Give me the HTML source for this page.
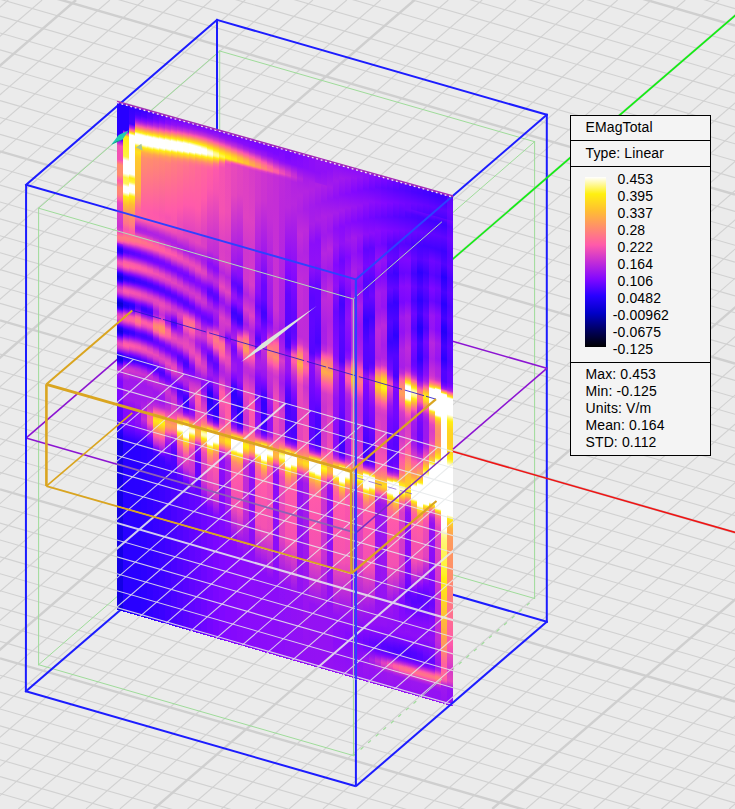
<!DOCTYPE html>
<html><head><meta charset="utf-8"><title>EMagTotal</title>
<style>
html,body{margin:0;padding:0;background:#ebebeb;}
svg{display:block}
text{font-family:"Liberation Sans",Arial,sans-serif;font-size:14px;fill:#000;letter-spacing:0.12px}
</style></head><body>
<svg width="735" height="809" viewBox="0 0 735 809">
<rect width="735" height="809" fill="#ebebeb"/>

<g id="grid" fill="none">
<line x1="0.0" y1="-203.6" x2="735.0" y2="8.6" stroke="#d1d1d1" stroke-width="1.1" />
<line x1="0.0" y1="-186.7" x2="735.0" y2="25.5" stroke="#cfcfcf" stroke-width="2.4" />
<line x1="0.0" y1="-169.8" x2="735.0" y2="42.4" stroke="#d1d1d1" stroke-width="1.1" />
<line x1="0.0" y1="-152.9" x2="735.0" y2="59.3" stroke="#d1d1d1" stroke-width="1.1" />
<line x1="0.0" y1="-136.0" x2="735.0" y2="76.2" stroke="#d1d1d1" stroke-width="1.1" />
<line x1="0.0" y1="-119.1" x2="735.0" y2="93.1" stroke="#d1d1d1" stroke-width="1.1" />
<line x1="0.0" y1="-102.2" x2="735.0" y2="110.0" stroke="#d1d1d1" stroke-width="1.1" />
<line x1="0.0" y1="-85.3" x2="735.0" y2="126.9" stroke="#d1d1d1" stroke-width="1.1" />
<line x1="0.0" y1="-68.4" x2="735.0" y2="143.8" stroke="#d1d1d1" stroke-width="1.1" />
<line x1="0.0" y1="-51.5" x2="735.0" y2="160.7" stroke="#d1d1d1" stroke-width="1.1" />
<line x1="0.0" y1="-34.6" x2="735.0" y2="177.6" stroke="#d1d1d1" stroke-width="1.1" />
<line x1="0.0" y1="-17.7" x2="735.0" y2="194.5" stroke="#cfcfcf" stroke-width="2.4" />
<line x1="0.0" y1="-0.8" x2="735.0" y2="211.4" stroke="#d1d1d1" stroke-width="1.1" />
<line x1="0.0" y1="16.1" x2="735.0" y2="228.3" stroke="#d1d1d1" stroke-width="1.1" />
<line x1="0.0" y1="33.0" x2="735.0" y2="245.2" stroke="#d1d1d1" stroke-width="1.1" />
<line x1="0.0" y1="49.9" x2="735.0" y2="262.1" stroke="#d1d1d1" stroke-width="1.1" />
<line x1="0.0" y1="66.8" x2="735.0" y2="279.0" stroke="#d1d1d1" stroke-width="1.1" />
<line x1="0.0" y1="83.7" x2="735.0" y2="295.9" stroke="#d1d1d1" stroke-width="1.1" />
<line x1="0.0" y1="100.6" x2="735.0" y2="312.8" stroke="#d1d1d1" stroke-width="1.1" />
<line x1="0.0" y1="117.5" x2="735.0" y2="329.7" stroke="#d1d1d1" stroke-width="1.1" />
<line x1="0.0" y1="134.4" x2="735.0" y2="346.6" stroke="#d1d1d1" stroke-width="1.1" />
<line x1="0.0" y1="151.3" x2="735.0" y2="363.5" stroke="#cfcfcf" stroke-width="2.4" />
<line x1="0.0" y1="168.2" x2="735.0" y2="380.4" stroke="#d1d1d1" stroke-width="1.1" />
<line x1="0.0" y1="185.1" x2="735.0" y2="397.3" stroke="#d1d1d1" stroke-width="1.1" />
<line x1="0.0" y1="202.0" x2="735.0" y2="414.2" stroke="#d1d1d1" stroke-width="1.1" />
<line x1="0.0" y1="218.9" x2="735.0" y2="431.1" stroke="#d1d1d1" stroke-width="1.1" />
<line x1="0.0" y1="235.8" x2="735.0" y2="448.0" stroke="#d1d1d1" stroke-width="1.1" />
<line x1="0.0" y1="252.7" x2="735.0" y2="464.9" stroke="#d1d1d1" stroke-width="1.1" />
<line x1="0.0" y1="269.6" x2="735.0" y2="481.8" stroke="#d1d1d1" stroke-width="1.1" />
<line x1="0.0" y1="286.5" x2="735.0" y2="498.7" stroke="#d1d1d1" stroke-width="1.1" />
<line x1="0.0" y1="303.4" x2="735.0" y2="515.6" stroke="#d1d1d1" stroke-width="1.1" />
<line x1="0.0" y1="320.3" x2="735.0" y2="532.5" stroke="#cfcfcf" stroke-width="2.4" />
<line x1="0.0" y1="337.2" x2="735.0" y2="549.4" stroke="#d1d1d1" stroke-width="1.1" />
<line x1="0.0" y1="354.1" x2="735.0" y2="566.3" stroke="#d1d1d1" stroke-width="1.1" />
<line x1="0.0" y1="371.0" x2="735.0" y2="583.2" stroke="#d1d1d1" stroke-width="1.1" />
<line x1="0.0" y1="387.9" x2="735.0" y2="600.1" stroke="#d1d1d1" stroke-width="1.1" />
<line x1="0.0" y1="404.8" x2="735.0" y2="617.0" stroke="#d1d1d1" stroke-width="1.1" />
<line x1="0.0" y1="421.7" x2="735.0" y2="633.9" stroke="#d1d1d1" stroke-width="1.1" />
<line x1="0.0" y1="438.6" x2="735.0" y2="650.8" stroke="#d1d1d1" stroke-width="1.1" />
<line x1="0.0" y1="455.5" x2="735.0" y2="667.7" stroke="#d1d1d1" stroke-width="1.1" />
<line x1="0.0" y1="472.4" x2="735.0" y2="684.6" stroke="#d1d1d1" stroke-width="1.1" />
<line x1="0.0" y1="489.3" x2="735.0" y2="701.5" stroke="#cfcfcf" stroke-width="2.4" />
<line x1="0.0" y1="506.2" x2="735.0" y2="718.4" stroke="#d1d1d1" stroke-width="1.1" />
<line x1="0.0" y1="523.1" x2="735.0" y2="735.3" stroke="#d1d1d1" stroke-width="1.1" />
<line x1="0.0" y1="540.0" x2="735.0" y2="752.2" stroke="#d1d1d1" stroke-width="1.1" />
<line x1="0.0" y1="556.9" x2="735.0" y2="769.1" stroke="#d1d1d1" stroke-width="1.1" />
<line x1="0.0" y1="573.8" x2="735.0" y2="786.0" stroke="#d1d1d1" stroke-width="1.1" />
<line x1="0.0" y1="590.7" x2="735.0" y2="802.9" stroke="#d1d1d1" stroke-width="1.1" />
<line x1="0.0" y1="607.6" x2="735.0" y2="819.8" stroke="#d1d1d1" stroke-width="1.1" />
<line x1="0.0" y1="624.5" x2="735.0" y2="836.7" stroke="#d1d1d1" stroke-width="1.1" />
<line x1="0.0" y1="641.4" x2="735.0" y2="853.6" stroke="#d1d1d1" stroke-width="1.1" />
<line x1="0.0" y1="658.3" x2="735.0" y2="870.5" stroke="#cfcfcf" stroke-width="2.4" />
<line x1="0.0" y1="675.2" x2="735.0" y2="887.4" stroke="#d1d1d1" stroke-width="1.1" />
<line x1="0.0" y1="692.1" x2="735.0" y2="904.3" stroke="#d1d1d1" stroke-width="1.1" />
<line x1="0.0" y1="709.0" x2="735.0" y2="921.2" stroke="#d1d1d1" stroke-width="1.1" />
<line x1="0.0" y1="725.9" x2="735.0" y2="938.1" stroke="#d1d1d1" stroke-width="1.1" />
<line x1="0.0" y1="742.8" x2="735.0" y2="955.0" stroke="#d1d1d1" stroke-width="1.1" />
<line x1="0.0" y1="759.7" x2="735.0" y2="971.9" stroke="#d1d1d1" stroke-width="1.1" />
<line x1="0.0" y1="776.6" x2="735.0" y2="988.8" stroke="#d1d1d1" stroke-width="1.1" />
<line x1="0.0" y1="793.5" x2="735.0" y2="1005.7" stroke="#d1d1d1" stroke-width="1.1" />
<line x1="0.0" y1="810.4" x2="735.0" y2="1022.6" stroke="#d1d1d1" stroke-width="1.1" />
<line x1="8.3" y1="0.0" x2="-929.5" y2="809.0" stroke="#d1d1d1" stroke-width="1.1" />
<line x1="42.1" y1="0.0" x2="-895.6" y2="809.0" stroke="#d1d1d1" stroke-width="1.1" />
<line x1="76.0" y1="0.0" x2="-861.8" y2="809.0" stroke="#cfcfcf" stroke-width="2.4" />
<line x1="109.9" y1="0.0" x2="-827.9" y2="809.0" stroke="#d1d1d1" stroke-width="1.1" />
<line x1="143.7" y1="0.0" x2="-794.1" y2="809.0" stroke="#d1d1d1" stroke-width="1.1" />
<line x1="177.5" y1="0.0" x2="-760.2" y2="809.0" stroke="#d1d1d1" stroke-width="1.1" />
<line x1="211.4" y1="0.0" x2="-726.4" y2="809.0" stroke="#d1d1d1" stroke-width="1.1" />
<line x1="245.2" y1="0.0" x2="-692.5" y2="809.0" stroke="#d1d1d1" stroke-width="1.1" />
<line x1="279.1" y1="0.0" x2="-658.7" y2="809.0" stroke="#d1d1d1" stroke-width="1.1" />
<line x1="312.9" y1="0.0" x2="-624.8" y2="809.0" stroke="#d1d1d1" stroke-width="1.1" />
<line x1="346.8" y1="0.0" x2="-591.0" y2="809.0" stroke="#d1d1d1" stroke-width="1.1" />
<line x1="380.6" y1="0.0" x2="-557.1" y2="809.0" stroke="#d1d1d1" stroke-width="1.1" />
<line x1="414.5" y1="0.0" x2="-523.3" y2="809.0" stroke="#cfcfcf" stroke-width="2.4" />
<line x1="448.3" y1="0.0" x2="-489.4" y2="809.0" stroke="#d1d1d1" stroke-width="1.1" />
<line x1="482.2" y1="0.0" x2="-455.6" y2="809.0" stroke="#d1d1d1" stroke-width="1.1" />
<line x1="516.0" y1="0.0" x2="-421.7" y2="809.0" stroke="#d1d1d1" stroke-width="1.1" />
<line x1="549.9" y1="0.0" x2="-387.9" y2="809.0" stroke="#d1d1d1" stroke-width="1.1" />
<line x1="583.8" y1="0.0" x2="-354.0" y2="809.0" stroke="#d1d1d1" stroke-width="1.1" />
<line x1="617.6" y1="0.0" x2="-320.2" y2="809.0" stroke="#d1d1d1" stroke-width="1.1" />
<line x1="651.5" y1="0.0" x2="-286.3" y2="809.0" stroke="#d1d1d1" stroke-width="1.1" />
<line x1="685.3" y1="0.0" x2="-252.5" y2="809.0" stroke="#d1d1d1" stroke-width="1.1" />
<line x1="719.1" y1="0.0" x2="-218.6" y2="809.0" stroke="#d1d1d1" stroke-width="1.1" />
<line x1="753.0" y1="0.0" x2="-184.8" y2="809.0" stroke="#cfcfcf" stroke-width="2.4" />
<line x1="786.9" y1="0.0" x2="-150.9" y2="809.0" stroke="#d1d1d1" stroke-width="1.1" />
<line x1="820.7" y1="0.0" x2="-117.1" y2="809.0" stroke="#d1d1d1" stroke-width="1.1" />
<line x1="854.5" y1="0.0" x2="-83.2" y2="809.0" stroke="#d1d1d1" stroke-width="1.1" />
<line x1="888.4" y1="0.0" x2="-49.4" y2="809.0" stroke="#d1d1d1" stroke-width="1.1" />
<line x1="922.2" y1="0.0" x2="-15.5" y2="809.0" stroke="#d1d1d1" stroke-width="1.1" />
<line x1="956.1" y1="0.0" x2="18.3" y2="809.0" stroke="#d1d1d1" stroke-width="1.1" />
<line x1="990.0" y1="0.0" x2="52.2" y2="809.0" stroke="#d1d1d1" stroke-width="1.1" />
<line x1="1023.8" y1="0.0" x2="86.0" y2="809.0" stroke="#d1d1d1" stroke-width="1.1" />
<line x1="1057.7" y1="0.0" x2="119.9" y2="809.0" stroke="#d1d1d1" stroke-width="1.1" />
<line x1="1091.5" y1="0.0" x2="153.7" y2="809.0" stroke="#cfcfcf" stroke-width="2.4" />
<line x1="1125.3" y1="0.0" x2="187.6" y2="809.0" stroke="#d1d1d1" stroke-width="1.1" />
<line x1="1159.2" y1="0.0" x2="221.4" y2="809.0" stroke="#d1d1d1" stroke-width="1.1" />
<line x1="1193.0" y1="0.0" x2="255.3" y2="809.0" stroke="#d1d1d1" stroke-width="1.1" />
<line x1="1226.9" y1="0.0" x2="289.1" y2="809.0" stroke="#d1d1d1" stroke-width="1.1" />
<line x1="1260.8" y1="0.0" x2="323.0" y2="809.0" stroke="#d1d1d1" stroke-width="1.1" />
<line x1="1294.6" y1="0.0" x2="356.8" y2="809.0" stroke="#d1d1d1" stroke-width="1.1" />
<line x1="1328.5" y1="0.0" x2="390.7" y2="809.0" stroke="#d1d1d1" stroke-width="1.1" />
<line x1="1362.3" y1="0.0" x2="424.5" y2="809.0" stroke="#d1d1d1" stroke-width="1.1" />
<line x1="1396.2" y1="0.0" x2="458.4" y2="809.0" stroke="#d1d1d1" stroke-width="1.1" />
<line x1="1430.0" y1="0.0" x2="492.2" y2="809.0" stroke="#cfcfcf" stroke-width="2.4" />
<line x1="1463.8" y1="0.0" x2="526.1" y2="809.0" stroke="#d1d1d1" stroke-width="1.1" />
<line x1="1497.7" y1="0.0" x2="559.9" y2="809.0" stroke="#d1d1d1" stroke-width="1.1" />
<line x1="1531.6" y1="0.0" x2="593.8" y2="809.0" stroke="#d1d1d1" stroke-width="1.1" />
<line x1="1565.4" y1="0.0" x2="627.6" y2="809.0" stroke="#d1d1d1" stroke-width="1.1" />
<line x1="1599.2" y1="0.0" x2="661.5" y2="809.0" stroke="#d1d1d1" stroke-width="1.1" />
<line x1="1633.1" y1="0.0" x2="695.3" y2="809.0" stroke="#d1d1d1" stroke-width="1.1" />
<line x1="1667.0" y1="0.0" x2="729.2" y2="809.0" stroke="#d1d1d1" stroke-width="1.1" />
</g>
<g fill="none" stroke-linecap="square">
<line x1="219.7" y1="51.0" x2="534.6" y2="141.7" stroke="#9fdc9a" stroke-width="1" />
<line x1="534.6" y1="141.7" x2="534.6" y2="598.5" stroke="#9fdc9a" stroke-width="1" />
<line x1="219.7" y1="51.0" x2="219.7" y2="507.5" stroke="#9fdc9a" stroke-width="1" />
<line x1="219.7" y1="507.5" x2="534.6" y2="598.5" stroke="#9fdc9a" stroke-width="1" />
<line x1="38.6" y1="208.2" x2="219.7" y2="51.0" stroke="#9fdc9a" stroke-width="1" />
<line x1="353.3" y1="299.0" x2="534.6" y2="141.7" stroke="#9fdc9a" stroke-width="1" />
<line x1="38.6" y1="664.7" x2="219.7" y2="507.5" stroke="#9fdc9a" stroke-width="1" />
<line x1="38.6" y1="208.2" x2="38.6" y2="664.7" stroke="#9fdc9a" stroke-width="1" />
<line x1="38.6" y1="664.7" x2="353.5" y2="755.6" stroke="#9fdc9a" stroke-width="1" />
<line x1="353.5" y1="755.6" x2="534.6" y2="598.5" stroke="#9fdc9a" stroke-width="1.2" stroke-dasharray="2.5 7.5"/>
<line x1="217.0" y1="19.9" x2="546.8" y2="114.8" stroke="#1c1cff" stroke-width="2" />
<line x1="217.0" y1="19.9" x2="217.0" y2="540.0" stroke="#1c1cff" stroke-width="2" />
<line x1="546.8" y1="114.8" x2="546.8" y2="621.7" stroke="#1c1cff" stroke-width="2" />
<line x1="217.0" y1="526.8" x2="546.8" y2="621.7" stroke="#1c1cff" stroke-width="2" />
<line x1="26.1" y1="184.8" x2="217.0" y2="19.9" stroke="#1c1cff" stroke-width="2" />
<line x1="25.9" y1="691.3" x2="217.0" y2="526.8" stroke="#1c1cff" stroke-width="2" />
<line x1="546.8" y1="368.3" x2="217.0" y2="273.4" stroke="#8c14d2" stroke-width="1.6" />
<line x1="217.0" y1="273.4" x2="26.0" y2="438.1" stroke="#8c14d2" stroke-width="1.6" />
<line x1="735.0" y1="15.6" x2="284.2" y2="404.5" stroke="#12ee12" stroke-width="1.6" />
</g>
<defs><linearGradient id="c0" x1="0" y1="0" x2="0" y2="1"><stop offset="0.0000" stop-color="#2800ff"/><stop offset="0.0709" stop-color="#2800ff"/><stop offset="0.0749" stop-color="#8208ff"/><stop offset="0.0768" stop-color="#a21aeb"/><stop offset="0.0847" stop-color="#f351b3"/><stop offset="0.1123" stop-color="#f351b3"/><stop offset="0.1143" stop-color="#ff5ca8"/><stop offset="0.1221" stop-color="#ff8c6e"/><stop offset="0.1418" stop-color="#ff8c6e"/><stop offset="0.1537" stop-color="#ff5aaa"/><stop offset="0.1674" stop-color="#ff8c6e"/><stop offset="0.1812" stop-color="#ff827a"/><stop offset="0.1911" stop-color="#ff5da7"/><stop offset="0.1970" stop-color="#e748bc"/><stop offset="0.2443" stop-color="#c932d2"/><stop offset="0.2522" stop-color="#da3ec6"/><stop offset="0.2581" stop-color="#ff5ca7"/><stop offset="0.2640" stop-color="#ff7887"/><stop offset="0.2679" stop-color="#ff7688"/><stop offset="0.2719" stop-color="#ff60a2"/><stop offset="0.2758" stop-color="#db3fc5"/><stop offset="0.2778" stop-color="#a21aeb"/><stop offset="0.2797" stop-color="#880bfb"/><stop offset="0.2837" stop-color="#4b03ff"/><stop offset="0.2876" stop-color="#2600fc"/><stop offset="0.2916" stop-color="#2100f6"/><stop offset="0.2955" stop-color="#2f01ff"/><stop offset="0.3014" stop-color="#7e08ff"/><stop offset="0.3093" stop-color="#d83cc8"/><stop offset="0.3132" stop-color="#f150b4"/><stop offset="0.3172" stop-color="#f754b0"/><stop offset="0.3231" stop-color="#da3ec6"/><stop offset="0.3310" stop-color="#7a07ff"/><stop offset="0.3349" stop-color="#3701ff"/><stop offset="0.3369" stop-color="#2300f8"/><stop offset="0.3428" stop-color="#1000de"/><stop offset="0.3467" stop-color="#1500e5"/><stop offset="0.3507" stop-color="#2700fd"/><stop offset="0.3566" stop-color="#8308fe"/><stop offset="0.3625" stop-color="#c52ed6"/><stop offset="0.3684" stop-color="#e345bf"/><stop offset="0.3723" stop-color="#dd41c3"/><stop offset="0.3763" stop-color="#c42dd7"/><stop offset="0.3822" stop-color="#7e08ff"/><stop offset="0.3861" stop-color="#3901ff"/><stop offset="0.3881" stop-color="#2200f6"/><stop offset="0.3940" stop-color="#0800d3"/><stop offset="0.3999" stop-color="#0c00d9"/><stop offset="0.4038" stop-color="#2100f5"/><stop offset="0.4058" stop-color="#3902ff"/><stop offset="0.4098" stop-color="#850afd"/><stop offset="0.4157" stop-color="#d037cd"/><stop offset="0.4216" stop-color="#f04fb5"/><stop offset="0.4255" stop-color="#ea4bb9"/><stop offset="0.4295" stop-color="#d138cc"/><stop offset="0.4373" stop-color="#7106ff"/><stop offset="0.4413" stop-color="#3101ff"/><stop offset="0.4432" stop-color="#2100f5"/><stop offset="0.4492" stop-color="#1100df"/><stop offset="0.4531" stop-color="#1700e8"/><stop offset="0.4570" stop-color="#2d00ff"/><stop offset="0.4610" stop-color="#6a06ff"/><stop offset="0.4629" stop-color="#890cfb"/><stop offset="0.4689" stop-color="#cb33d1"/><stop offset="0.4728" stop-color="#e547bd"/><stop offset="0.4767" stop-color="#ec4cb8"/><stop offset="0.4826" stop-color="#d137cd"/><stop offset="0.4905" stop-color="#7607ff"/><stop offset="0.4945" stop-color="#3601ff"/><stop offset="0.4964" stop-color="#2300f8"/><stop offset="0.5023" stop-color="#1100df"/><stop offset="0.5063" stop-color="#1600e7"/><stop offset="0.5102" stop-color="#2700fe"/><stop offset="0.5161" stop-color="#7707ff"/><stop offset="0.5220" stop-color="#a81de8"/><stop offset="0.5280" stop-color="#b626df"/><stop offset="0.5477" stop-color="#7f08ff"/><stop offset="0.5811" stop-color="#8108ff"/><stop offset="0.5969" stop-color="#5f05ff"/><stop offset="0.6225" stop-color="#5904ff"/><stop offset="0.6442" stop-color="#2800ff"/><stop offset="0.6659" stop-color="#1500e4"/><stop offset="1.0007" stop-color="#1400e4"/></linearGradient>
<linearGradient id="c1" x1="0" y1="0" x2="0" y2="1"><stop offset="0.0000" stop-color="#2800ff"/><stop offset="0.0512" stop-color="#2800ff"/><stop offset="0.0532" stop-color="#8208ff"/><stop offset="0.0571" stop-color="#ff5aaa"/><stop offset="0.0611" stop-color="#ffbe32"/><stop offset="0.0630" stop-color="#fff010"/><stop offset="0.1024" stop-color="#fff340"/><stop offset="0.1103" stop-color="#ffffff"/><stop offset="0.1359" stop-color="#ffffff"/><stop offset="0.1438" stop-color="#fff340"/><stop offset="0.1556" stop-color="#fff458"/><stop offset="0.1615" stop-color="#ffffff"/><stop offset="0.1733" stop-color="#ffffff"/><stop offset="0.1812" stop-color="#fff010"/><stop offset="0.1970" stop-color="#ffbe32"/><stop offset="0.2167" stop-color="#ff8c6e"/><stop offset="0.2344" stop-color="#ff738b"/><stop offset="0.2462" stop-color="#f955af"/><stop offset="0.2521" stop-color="#ff5ba9"/><stop offset="0.2620" stop-color="#ff7b83"/><stop offset="0.2659" stop-color="#ff7984"/><stop offset="0.2699" stop-color="#ff679b"/><stop offset="0.2718" stop-color="#fc58ac"/><stop offset="0.2797" stop-color="#9f19ed"/><stop offset="0.2837" stop-color="#7307ff"/><stop offset="0.2876" stop-color="#5404ff"/><stop offset="0.2915" stop-color="#5204ff"/><stop offset="0.2974" stop-color="#8409fe"/><stop offset="0.3093" stop-color="#fa56ae"/><stop offset="0.3152" stop-color="#ff6899"/><stop offset="0.3191" stop-color="#ff60a3"/><stop offset="0.3211" stop-color="#fa56ae"/><stop offset="0.3250" stop-color="#d73cc8"/><stop offset="0.3329" stop-color="#7607ff"/><stop offset="0.3388" stop-color="#3301ff"/><stop offset="0.3427" stop-color="#2800ff"/><stop offset="0.3467" stop-color="#3c02ff"/><stop offset="0.3526" stop-color="#850afd"/><stop offset="0.3605" stop-color="#da3ec6"/><stop offset="0.3644" stop-color="#f452b2"/><stop offset="0.3684" stop-color="#fc58ac"/><stop offset="0.3723" stop-color="#ef4eb6"/><stop offset="0.3762" stop-color="#d138cc"/><stop offset="0.3841" stop-color="#7207ff"/><stop offset="0.3900" stop-color="#2700fe"/><stop offset="0.3959" stop-color="#1f00f2"/><stop offset="0.3999" stop-color="#2c00ff"/><stop offset="0.4058" stop-color="#8208ff"/><stop offset="0.4117" stop-color="#d037cd"/><stop offset="0.4156" stop-color="#f653b1"/><stop offset="0.4196" stop-color="#ff62a1"/><stop offset="0.4235" stop-color="#ff5ea5"/><stop offset="0.4255" stop-color="#fa56ae"/><stop offset="0.4294" stop-color="#db3fc5"/><stop offset="0.4373" stop-color="#8108ff"/><stop offset="0.4432" stop-color="#3a02ff"/><stop offset="0.4472" stop-color="#2a00ff"/><stop offset="0.4511" stop-color="#3801ff"/><stop offset="0.4570" stop-color="#7d08ff"/><stop offset="0.4668" stop-color="#e849bb"/><stop offset="0.4708" stop-color="#ff5aaa"/><stop offset="0.4747" stop-color="#ff5ea6"/><stop offset="0.4767" stop-color="#fe59ab"/><stop offset="0.4806" stop-color="#e647bd"/><stop offset="0.4905" stop-color="#7907ff"/><stop offset="0.4964" stop-color="#3501ff"/><stop offset="0.5003" stop-color="#2a00ff"/><stop offset="0.5043" stop-color="#3e02ff"/><stop offset="0.5102" stop-color="#8308ff"/><stop offset="0.5161" stop-color="#b726de"/><stop offset="0.5200" stop-color="#cc34d0"/><stop offset="0.5240" stop-color="#d339cb"/><stop offset="0.5437" stop-color="#a019ed"/><stop offset="0.5791" stop-color="#a31beb"/><stop offset="0.5969" stop-color="#890cfa"/><stop offset="0.6244" stop-color="#8308ff"/><stop offset="0.6560" stop-color="#3701ff"/><stop offset="0.6678" stop-color="#2800ff"/><stop offset="1.0007" stop-color="#2800ff"/></linearGradient>
<linearGradient id="c2" x1="0" y1="0" x2="0" y2="1"><stop offset="0.0000" stop-color="#3101ff"/><stop offset="0.0355" stop-color="#4302ff"/><stop offset="0.0394" stop-color="#8c0ef9"/><stop offset="0.0433" stop-color="#c32dd7"/><stop offset="0.0453" stop-color="#eb4bb9"/><stop offset="0.0473" stop-color="#ff6b96"/><stop offset="0.0492" stop-color="#ff8c6e"/><stop offset="0.0512" stop-color="#ffbe32"/><stop offset="0.0532" stop-color="#fff010"/><stop offset="0.0571" stop-color="#ffffff"/><stop offset="0.1339" stop-color="#ffffff"/><stop offset="0.1418" stop-color="#fff010"/><stop offset="0.1497" stop-color="#fff340"/><stop offset="0.1556" stop-color="#ffffff"/><stop offset="0.1694" stop-color="#ffffff"/><stop offset="0.1773" stop-color="#fff010"/><stop offset="0.1930" stop-color="#ffbe32"/><stop offset="0.2127" stop-color="#ff9662"/><stop offset="0.2344" stop-color="#ff7c82"/><stop offset="0.2462" stop-color="#ff5da6"/><stop offset="0.2521" stop-color="#ff61a1"/><stop offset="0.2620" stop-color="#ff7a84"/><stop offset="0.2659" stop-color="#ff758a"/><stop offset="0.2698" stop-color="#ff60a3"/><stop offset="0.2718" stop-color="#f452b2"/><stop offset="0.2797" stop-color="#9c17ef"/><stop offset="0.2836" stop-color="#7407ff"/><stop offset="0.2876" stop-color="#5a04ff"/><stop offset="0.2915" stop-color="#5d05ff"/><stop offset="0.2974" stop-color="#8d0ef8"/><stop offset="0.3092" stop-color="#fa56ae"/><stop offset="0.3151" stop-color="#ff649f"/><stop offset="0.3191" stop-color="#fe59ab"/><stop offset="0.3250" stop-color="#ce35cf"/><stop offset="0.3309" stop-color="#8a0dfa"/><stop offset="0.3368" stop-color="#4403ff"/><stop offset="0.3408" stop-color="#3101ff"/><stop offset="0.3427" stop-color="#3201ff"/><stop offset="0.3467" stop-color="#4903ff"/><stop offset="0.3506" stop-color="#7707ff"/><stop offset="0.3605" stop-color="#dc40c4"/><stop offset="0.3644" stop-color="#f250b4"/><stop offset="0.3683" stop-color="#f653b1"/><stop offset="0.3742" stop-color="#da3ec6"/><stop offset="0.3821" stop-color="#890cfb"/><stop offset="0.3880" stop-color="#3f02ff"/><stop offset="0.3900" stop-color="#3001ff"/><stop offset="0.3939" stop-color="#2700fd"/><stop offset="0.3979" stop-color="#3601ff"/><stop offset="0.4038" stop-color="#7f08ff"/><stop offset="0.4136" stop-color="#f150b4"/><stop offset="0.4156" stop-color="#ff5aaa"/><stop offset="0.4195" stop-color="#ff649e"/><stop offset="0.4235" stop-color="#ff5ca7"/><stop offset="0.4294" stop-color="#d53aca"/><stop offset="0.4373" stop-color="#7c07ff"/><stop offset="0.4432" stop-color="#3f02ff"/><stop offset="0.4471" stop-color="#3701ff"/><stop offset="0.4511" stop-color="#4b03ff"/><stop offset="0.4550" stop-color="#7807ff"/><stop offset="0.4648" stop-color="#df42c2"/><stop offset="0.4688" stop-color="#f854b0"/><stop offset="0.4727" stop-color="#ff5aaa"/><stop offset="0.4786" stop-color="#e648bc"/><stop offset="0.4885" stop-color="#8308ff"/><stop offset="0.4944" stop-color="#3f02ff"/><stop offset="0.4983" stop-color="#3201ff"/><stop offset="0.5023" stop-color="#4302ff"/><stop offset="0.5082" stop-color="#8309fe"/><stop offset="0.5141" stop-color="#b626df"/><stop offset="0.5180" stop-color="#ca32d2"/><stop offset="0.5220" stop-color="#d037cd"/><stop offset="0.5397" stop-color="#a11aec"/><stop offset="0.5791" stop-color="#a31beb"/><stop offset="0.5968" stop-color="#890cfa"/><stop offset="0.6244" stop-color="#8308ff"/><stop offset="0.6559" stop-color="#3801ff"/><stop offset="0.6677" stop-color="#2900ff"/><stop offset="1.0006" stop-color="#2900ff"/></linearGradient>
<linearGradient id="c3" x1="0" y1="0" x2="0" y2="1"><stop offset="0.0000" stop-color="#2e01ff"/><stop offset="0.0138" stop-color="#4603ff"/><stop offset="0.0197" stop-color="#6505ff"/><stop offset="0.0256" stop-color="#9513f3"/><stop offset="0.0295" stop-color="#bb29dc"/><stop offset="0.0355" stop-color="#ff5da6"/><stop offset="0.0433" stop-color="#ffbf32"/><stop offset="0.0473" stop-color="#fff011"/><stop offset="0.0512" stop-color="#fffde0"/><stop offset="0.0532" stop-color="#ffffff"/><stop offset="0.0689" stop-color="#ffffff"/><stop offset="0.0709" stop-color="#fffde1"/><stop offset="0.0748" stop-color="#fff233"/><stop offset="0.0768" stop-color="#ffe617"/><stop offset="0.0808" stop-color="#ffcf26"/><stop offset="0.0867" stop-color="#ffe21a"/><stop offset="0.0985" stop-color="#ffcb29"/><stop offset="0.1595" stop-color="#ffb043"/><stop offset="0.1733" stop-color="#ff9e59"/><stop offset="0.1989" stop-color="#ff6a96"/><stop offset="0.2186" stop-color="#ff5ca8"/><stop offset="0.2344" stop-color="#b223e2"/><stop offset="0.2383" stop-color="#a91ee7"/><stop offset="0.2442" stop-color="#b927dd"/><stop offset="0.2541" stop-color="#ff5da7"/><stop offset="0.2600" stop-color="#ff7788"/><stop offset="0.2639" stop-color="#ff7787"/><stop offset="0.2698" stop-color="#ff5ba8"/><stop offset="0.2797" stop-color="#9c17ef"/><stop offset="0.2836" stop-color="#7907ff"/><stop offset="0.2876" stop-color="#6105ff"/><stop offset="0.2915" stop-color="#6405ff"/><stop offset="0.2954" stop-color="#8108ff"/><stop offset="0.3092" stop-color="#f754b0"/><stop offset="0.3132" stop-color="#ff5ea5"/><stop offset="0.3171" stop-color="#ff5ba8"/><stop offset="0.3230" stop-color="#dc40c4"/><stop offset="0.3309" stop-color="#8a0dfa"/><stop offset="0.3368" stop-color="#4a03ff"/><stop offset="0.3427" stop-color="#3a02ff"/><stop offset="0.3466" stop-color="#5104ff"/><stop offset="0.3506" stop-color="#7d08ff"/><stop offset="0.3604" stop-color="#da3fc5"/><stop offset="0.3644" stop-color="#ef4eb6"/><stop offset="0.3683" stop-color="#f251b3"/><stop offset="0.3742" stop-color="#da3ec6"/><stop offset="0.3841" stop-color="#8409fe"/><stop offset="0.3880" stop-color="#6205ff"/><stop offset="0.3919" stop-color="#5504ff"/><stop offset="0.3959" stop-color="#6205ff"/><stop offset="0.3998" stop-color="#850afd"/><stop offset="0.4116" stop-color="#ff5ea6"/><stop offset="0.4175" stop-color="#ff7a83"/><stop offset="0.4215" stop-color="#ff7787"/><stop offset="0.4254" stop-color="#ff659d"/><stop offset="0.4274" stop-color="#fb57ad"/><stop offset="0.4372" stop-color="#8f0ff7"/><stop offset="0.4431" stop-color="#5604ff"/><stop offset="0.4471" stop-color="#4c03ff"/><stop offset="0.4510" stop-color="#5e05ff"/><stop offset="0.4550" stop-color="#850afd"/><stop offset="0.4648" stop-color="#e043c1"/><stop offset="0.4687" stop-color="#f552b2"/><stop offset="0.4727" stop-color="#fa56ae"/><stop offset="0.4786" stop-color="#e043c1"/><stop offset="0.4884" stop-color="#8108ff"/><stop offset="0.4943" stop-color="#4302ff"/><stop offset="0.4983" stop-color="#3a02ff"/><stop offset="0.5022" stop-color="#4d03ff"/><stop offset="0.5062" stop-color="#7507ff"/><stop offset="0.5140" stop-color="#b827de"/><stop offset="0.5219" stop-color="#cd35cf"/><stop offset="0.5396" stop-color="#a119ec"/><stop offset="0.5810" stop-color="#a41cea"/><stop offset="0.5948" stop-color="#9513f3"/><stop offset="0.6204" stop-color="#9010f6"/><stop offset="0.6302" stop-color="#8208ff"/><stop offset="0.6539" stop-color="#3e02ff"/><stop offset="0.6677" stop-color="#2b00ff"/><stop offset="1.0005" stop-color="#2a00ff"/></linearGradient>
<linearGradient id="c4" x1="0" y1="0" x2="0" y2="1"><stop offset="0.0000" stop-color="#3601ff"/><stop offset="0.0138" stop-color="#4e03ff"/><stop offset="0.0217" stop-color="#7d08ff"/><stop offset="0.0256" stop-color="#9b16ef"/><stop offset="0.0295" stop-color="#c22cd8"/><stop offset="0.0354" stop-color="#ff62a0"/><stop offset="0.0433" stop-color="#ffc32f"/><stop offset="0.0453" stop-color="#ffdc1e"/><stop offset="0.0473" stop-color="#fff121"/><stop offset="0.0512" stop-color="#fffeeb"/><stop offset="0.0532" stop-color="#ffffff"/><stop offset="0.0689" stop-color="#ffffff"/><stop offset="0.0709" stop-color="#fffcc9"/><stop offset="0.0748" stop-color="#fff119"/><stop offset="0.0768" stop-color="#ffe01b"/><stop offset="0.0847" stop-color="#ffaa4a"/><stop offset="0.0945" stop-color="#ff9069"/><stop offset="0.1950" stop-color="#ff5da6"/><stop offset="0.2127" stop-color="#ff61a1"/><stop offset="0.2186" stop-color="#ff5ba9"/><stop offset="0.2344" stop-color="#b525e0"/><stop offset="0.2383" stop-color="#ac20e5"/><stop offset="0.2442" stop-color="#b927dd"/><stop offset="0.2540" stop-color="#fd58ac"/><stop offset="0.2600" stop-color="#ff718e"/><stop offset="0.2639" stop-color="#ff728d"/><stop offset="0.2698" stop-color="#ff5aaa"/><stop offset="0.2816" stop-color="#8f0ff7"/><stop offset="0.2875" stop-color="#6806ff"/><stop offset="0.2915" stop-color="#6906ff"/><stop offset="0.2954" stop-color="#8208ff"/><stop offset="0.3072" stop-color="#e446be"/><stop offset="0.3112" stop-color="#f956ae"/><stop offset="0.3151" stop-color="#ff5aaa"/><stop offset="0.3190" stop-color="#f552b2"/><stop offset="0.3230" stop-color="#db3fc5"/><stop offset="0.3328" stop-color="#7a07ff"/><stop offset="0.3387" stop-color="#4603ff"/><stop offset="0.3427" stop-color="#4002ff"/><stop offset="0.3466" stop-color="#5304ff"/><stop offset="0.3505" stop-color="#7b07ff"/><stop offset="0.3604" stop-color="#d43aca"/><stop offset="0.3643" stop-color="#e748bc"/><stop offset="0.3683" stop-color="#ec4bb9"/><stop offset="0.3742" stop-color="#d43aca"/><stop offset="0.3840" stop-color="#7907ff"/><stop offset="0.3899" stop-color="#4202ff"/><stop offset="0.3939" stop-color="#3801ff"/><stop offset="0.3978" stop-color="#4703ff"/><stop offset="0.4037" stop-color="#860afd"/><stop offset="0.4136" stop-color="#ec4cb8"/><stop offset="0.4175" stop-color="#ff5ca8"/><stop offset="0.4214" stop-color="#ff5da7"/><stop offset="0.4274" stop-color="#e546be"/><stop offset="0.4372" stop-color="#870bfc"/><stop offset="0.4431" stop-color="#5004ff"/><stop offset="0.4470" stop-color="#4703ff"/><stop offset="0.4510" stop-color="#5704ff"/><stop offset="0.4549" stop-color="#7c07ff"/><stop offset="0.4648" stop-color="#d63cc8"/><stop offset="0.4687" stop-color="#ed4cb8"/><stop offset="0.4726" stop-color="#f452b2"/><stop offset="0.4786" stop-color="#e144c0"/><stop offset="0.4884" stop-color="#8a0dfa"/><stop offset="0.4943" stop-color="#4f03ff"/><stop offset="0.4983" stop-color="#4102ff"/><stop offset="0.5022" stop-color="#4d03ff"/><stop offset="0.5081" stop-color="#8309fe"/><stop offset="0.5140" stop-color="#b123e2"/><stop offset="0.5219" stop-color="#cb33d1"/><stop offset="0.5376" stop-color="#a51cea"/><stop offset="0.5435" stop-color="#a019ed"/><stop offset="0.5731" stop-color="#a61ce9"/><stop offset="0.6105" stop-color="#c22cd8"/><stop offset="0.6322" stop-color="#8309fe"/><stop offset="0.6519" stop-color="#4503ff"/><stop offset="0.6676" stop-color="#2e01ff"/><stop offset="1.0004" stop-color="#2d00ff"/></linearGradient>
<linearGradient id="c5" x1="0" y1="0" x2="0" y2="1"><stop offset="0.0000" stop-color="#4202ff"/><stop offset="0.0138" stop-color="#5b05ff"/><stop offset="0.0197" stop-color="#7c07ff"/><stop offset="0.0256" stop-color="#a71de8"/><stop offset="0.0335" stop-color="#fb57ad"/><stop offset="0.0414" stop-color="#ffb43e"/><stop offset="0.0453" stop-color="#ffe517"/><stop offset="0.0473" stop-color="#fff449"/><stop offset="0.0492" stop-color="#fffaaf"/><stop offset="0.0512" stop-color="#ffffff"/><stop offset="0.0670" stop-color="#ffffff"/><stop offset="0.0689" stop-color="#fffef4"/><stop offset="0.0729" stop-color="#fff344"/><stop offset="0.0748" stop-color="#ffe815"/><stop offset="0.0847" stop-color="#ffa451"/><stop offset="0.0945" stop-color="#ff8c6e"/><stop offset="0.1969" stop-color="#ff5ba9"/><stop offset="0.2186" stop-color="#fe59ab"/><stop offset="0.2383" stop-color="#ae21e4"/><stop offset="0.2442" stop-color="#b726df"/><stop offset="0.2560" stop-color="#ff5ca8"/><stop offset="0.2619" stop-color="#ff6e92"/><stop offset="0.2658" stop-color="#ff6b96"/><stop offset="0.2698" stop-color="#ff5aaa"/><stop offset="0.2796" stop-color="#a81ee8"/><stop offset="0.2855" stop-color="#7a07ff"/><stop offset="0.2895" stop-color="#6b06ff"/><stop offset="0.2934" stop-color="#7307ff"/><stop offset="0.2974" stop-color="#8c0ef9"/><stop offset="0.3092" stop-color="#e848bc"/><stop offset="0.3131" stop-color="#f754b0"/><stop offset="0.3170" stop-color="#f855af"/><stop offset="0.3230" stop-color="#de41c3"/><stop offset="0.3328" stop-color="#850afd"/><stop offset="0.3387" stop-color="#5004ff"/><stop offset="0.3426" stop-color="#4503ff"/><stop offset="0.3466" stop-color="#5204ff"/><stop offset="0.3525" stop-color="#870bfc"/><stop offset="0.3623" stop-color="#d63bc9"/><stop offset="0.3682" stop-color="#e748bc"/><stop offset="0.3742" stop-color="#d63cc8"/><stop offset="0.3840" stop-color="#870bfc"/><stop offset="0.3899" stop-color="#5004ff"/><stop offset="0.3958" stop-color="#4202ff"/><stop offset="0.3998" stop-color="#5504ff"/><stop offset="0.4037" stop-color="#7e08ff"/><stop offset="0.4135" stop-color="#e244c0"/><stop offset="0.4175" stop-color="#fa56ae"/><stop offset="0.4214" stop-color="#ff5ba9"/><stop offset="0.4254" stop-color="#f553b1"/><stop offset="0.4293" stop-color="#dd40c4"/><stop offset="0.4391" stop-color="#8409fe"/><stop offset="0.4431" stop-color="#5f05ff"/><stop offset="0.4470" stop-color="#4e03ff"/><stop offset="0.4510" stop-color="#5504ff"/><stop offset="0.4569" stop-color="#8409fe"/><stop offset="0.4667" stop-color="#d63bc9"/><stop offset="0.4746" stop-color="#f04eb6"/><stop offset="0.4825" stop-color="#d037cd"/><stop offset="0.4923" stop-color="#7807ff"/><stop offset="0.4962" stop-color="#5504ff"/><stop offset="0.5002" stop-color="#4803ff"/><stop offset="0.5041" stop-color="#5204ff"/><stop offset="0.5100" stop-color="#8309fe"/><stop offset="0.5159" stop-color="#ad21e4"/><stop offset="0.5218" stop-color="#c62fd5"/><stop offset="0.5278" stop-color="#c62fd5"/><stop offset="0.5435" stop-color="#a21aec"/><stop offset="0.5691" stop-color="#a71de8"/><stop offset="0.5868" stop-color="#cd35cf"/><stop offset="0.5986" stop-color="#ff5ba9"/><stop offset="0.6045" stop-color="#ff6a96"/><stop offset="0.6085" stop-color="#ff6a96"/><stop offset="0.6144" stop-color="#ff5ba8"/><stop offset="0.6282" stop-color="#b827de"/><stop offset="0.6420" stop-color="#8208ff"/><stop offset="0.6577" stop-color="#4102ff"/><stop offset="0.6656" stop-color="#3301ff"/><stop offset="1.0004" stop-color="#3201ff"/></linearGradient>
<linearGradient id="c6" x1="0" y1="0" x2="0" y2="1"><stop offset="0.0000" stop-color="#4e03ff"/><stop offset="0.0138" stop-color="#6b06ff"/><stop offset="0.0177" stop-color="#8008ff"/><stop offset="0.0256" stop-color="#b726df"/><stop offset="0.0315" stop-color="#f452b2"/><stop offset="0.0335" stop-color="#ff659c"/><stop offset="0.0414" stop-color="#ffc32f"/><stop offset="0.0453" stop-color="#fff119"/><stop offset="0.0492" stop-color="#fffdde"/><stop offset="0.0512" stop-color="#ffffff"/><stop offset="0.0669" stop-color="#ffffff"/><stop offset="0.0689" stop-color="#fffbbb"/><stop offset="0.0729" stop-color="#ffee11"/><stop offset="0.0827" stop-color="#ffa451"/><stop offset="0.0886" stop-color="#ff9069"/><stop offset="0.0945" stop-color="#ff8873"/><stop offset="0.1969" stop-color="#fd59ab"/><stop offset="0.2166" stop-color="#ff5aaa"/><stop offset="0.2225" stop-color="#f250b4"/><stop offset="0.2343" stop-color="#bc29db"/><stop offset="0.2402" stop-color="#ae21e4"/><stop offset="0.2461" stop-color="#bb28dc"/><stop offset="0.2579" stop-color="#ff5ca8"/><stop offset="0.2639" stop-color="#ff6998"/><stop offset="0.2698" stop-color="#ff5ba9"/><stop offset="0.2816" stop-color="#a119ec"/><stop offset="0.2875" stop-color="#7907ff"/><stop offset="0.2934" stop-color="#7207ff"/><stop offset="0.2973" stop-color="#860afc"/><stop offset="0.3091" stop-color="#dc40c4"/><stop offset="0.3170" stop-color="#f452b2"/><stop offset="0.3249" stop-color="#d53aca"/><stop offset="0.3347" stop-color="#8108ff"/><stop offset="0.3406" stop-color="#5104ff"/><stop offset="0.3446" stop-color="#4b03ff"/><stop offset="0.3485" stop-color="#5a04ff"/><stop offset="0.3525" stop-color="#7b07ff"/><stop offset="0.3623" stop-color="#cc33d1"/><stop offset="0.3682" stop-color="#e647bd"/><stop offset="0.3761" stop-color="#df42c2"/><stop offset="0.3899" stop-color="#a019ec"/><stop offset="0.3958" stop-color="#a11aec"/><stop offset="0.4017" stop-color="#bd2adb"/><stop offset="0.4096" stop-color="#fe59ab"/><stop offset="0.4155" stop-color="#ff7f7e"/><stop offset="0.4214" stop-color="#ff8b6f"/><stop offset="0.4253" stop-color="#ff827a"/><stop offset="0.4312" stop-color="#ff60a3"/><stop offset="0.4430" stop-color="#9110f6"/><stop offset="0.4470" stop-color="#7307ff"/><stop offset="0.4509" stop-color="#6505ff"/><stop offset="0.4549" stop-color="#6e06ff"/><stop offset="0.4588" stop-color="#870bfc"/><stop offset="0.4686" stop-color="#d036ce"/><stop offset="0.4765" stop-color="#ea4aba"/><stop offset="0.4844" stop-color="#d238cc"/><stop offset="0.4942" stop-color="#8509fd"/><stop offset="0.5001" stop-color="#5404ff"/><stop offset="0.5041" stop-color="#4b03ff"/><stop offset="0.5080" stop-color="#5704ff"/><stop offset="0.5139" stop-color="#8409fe"/><stop offset="0.5198" stop-color="#aa1fe7"/><stop offset="0.5257" stop-color="#c12cd8"/><stop offset="0.5316" stop-color="#c22dd7"/><stop offset="0.5494" stop-color="#9f18ed"/><stop offset="0.5671" stop-color="#a51ce9"/><stop offset="0.5769" stop-color="#bf2bda"/><stop offset="0.5868" stop-color="#ff5ca8"/><stop offset="0.5986" stop-color="#ffc32e"/><stop offset="0.6025" stop-color="#ffdd1d"/><stop offset="0.6065" stop-color="#ffe716"/><stop offset="0.6163" stop-color="#ffc32f"/><stop offset="0.6281" stop-color="#ff7e7e"/><stop offset="0.6360" stop-color="#ff5ca7"/><stop offset="0.6518" stop-color="#bb29dc"/><stop offset="0.6616" stop-color="#7207ff"/><stop offset="0.6695" stop-color="#3e02ff"/><stop offset="0.6813" stop-color="#3801ff"/><stop offset="1.0003" stop-color="#3701ff"/></linearGradient>
<linearGradient id="c7" x1="0" y1="0" x2="0" y2="1"><stop offset="0.0000" stop-color="#5b05ff"/><stop offset="0.0118" stop-color="#7307ff"/><stop offset="0.0158" stop-color="#850afd"/><stop offset="0.0236" stop-color="#b726df"/><stop offset="0.0315" stop-color="#ff61a1"/><stop offset="0.0394" stop-color="#ffbc35"/><stop offset="0.0433" stop-color="#ffea14"/><stop offset="0.0453" stop-color="#fff55e"/><stop offset="0.0473" stop-color="#fffbbe"/><stop offset="0.0492" stop-color="#ffffff"/><stop offset="0.0650" stop-color="#ffffff"/><stop offset="0.0669" stop-color="#fffccd"/><stop offset="0.0709" stop-color="#fff016"/><stop offset="0.0807" stop-color="#ffa451"/><stop offset="0.0866" stop-color="#ff8e6b"/><stop offset="0.0925" stop-color="#ff8576"/><stop offset="0.1989" stop-color="#fa56ae"/><stop offset="0.2166" stop-color="#fc58ac"/><stop offset="0.2225" stop-color="#f351b3"/><stop offset="0.2363" stop-color="#ba28dd"/><stop offset="0.2422" stop-color="#ae21e4"/><stop offset="0.2481" stop-color="#bc29db"/><stop offset="0.2599" stop-color="#fe59ab"/><stop offset="0.2658" stop-color="#ff649e"/><stop offset="0.2697" stop-color="#ff5ca7"/><stop offset="0.2737" stop-color="#ec4cb8"/><stop offset="0.2855" stop-color="#8f10f7"/><stop offset="0.2894" stop-color="#7a07ff"/><stop offset="0.2934" stop-color="#7207ff"/><stop offset="0.2993" stop-color="#890cfb"/><stop offset="0.3131" stop-color="#e345bf"/><stop offset="0.3190" stop-color="#ee4db7"/><stop offset="0.3268" stop-color="#d037cd"/><stop offset="0.3367" stop-color="#8108ff"/><stop offset="0.3406" stop-color="#6005ff"/><stop offset="0.3446" stop-color="#5004ff"/><stop offset="0.3485" stop-color="#5404ff"/><stop offset="0.3544" stop-color="#7d08ff"/><stop offset="0.3642" stop-color="#c932d2"/><stop offset="0.3702" stop-color="#e547bd"/><stop offset="0.3761" stop-color="#ea4bb9"/><stop offset="0.3938" stop-color="#c52ed6"/><stop offset="0.4017" stop-color="#d83dc7"/><stop offset="0.4076" stop-color="#fc58ac"/><stop offset="0.4095" stop-color="#ff649e"/><stop offset="0.4174" stop-color="#ff8e6b"/><stop offset="0.4253" stop-color="#ff9266"/><stop offset="0.4292" stop-color="#ff8379"/><stop offset="0.4351" stop-color="#ff5ba9"/><stop offset="0.4469" stop-color="#8d0ef8"/><stop offset="0.4509" stop-color="#7207ff"/><stop offset="0.4548" stop-color="#6806ff"/><stop offset="0.4627" stop-color="#8a0cfa"/><stop offset="0.4725" stop-color="#cc34d0"/><stop offset="0.4804" stop-color="#e345bf"/><stop offset="0.4883" stop-color="#cd34d0"/><stop offset="0.4981" stop-color="#870bfc"/><stop offset="0.5040" stop-color="#5904ff"/><stop offset="0.5080" stop-color="#4c03ff"/><stop offset="0.5139" stop-color="#5b04ff"/><stop offset="0.5198" stop-color="#8409fe"/><stop offset="0.5277" stop-color="#ae21e4"/><stop offset="0.5336" stop-color="#bd29db"/><stop offset="0.5552" stop-color="#9d17ee"/><stop offset="0.5670" stop-color="#9f18ed"/><stop offset="0.5769" stop-color="#bb29dc"/><stop offset="0.5867" stop-color="#ff5da7"/><stop offset="0.5985" stop-color="#ffcb29"/><stop offset="0.6045" stop-color="#ffee11"/><stop offset="0.6084" stop-color="#ffee11"/><stop offset="0.6182" stop-color="#ffc031"/><stop offset="0.6281" stop-color="#ff8477"/><stop offset="0.6379" stop-color="#fe59ab"/><stop offset="0.6556" stop-color="#b726de"/><stop offset="0.6655" stop-color="#8108ff"/><stop offset="0.6734" stop-color="#4e03ff"/><stop offset="0.6812" stop-color="#3d02ff"/><stop offset="1.0002" stop-color="#3c02ff"/></linearGradient>
<linearGradient id="c8" x1="0" y1="0" x2="0" y2="1"><stop offset="0.0000" stop-color="#6606ff"/><stop offset="0.0138" stop-color="#890cfb"/><stop offset="0.0236" stop-color="#c831d3"/><stop offset="0.0295" stop-color="#ff5ea5"/><stop offset="0.0374" stop-color="#ffb63c"/><stop offset="0.0413" stop-color="#ffe418"/><stop offset="0.0433" stop-color="#fff342"/><stop offset="0.0473" stop-color="#fffffa"/><stop offset="0.0630" stop-color="#ffffff"/><stop offset="0.0650" stop-color="#fffdd9"/><stop offset="0.0689" stop-color="#fff11f"/><stop offset="0.0709" stop-color="#ffe01b"/><stop offset="0.0807" stop-color="#ff995f"/><stop offset="0.0925" stop-color="#ff807c"/><stop offset="0.1870" stop-color="#ff5aaa"/><stop offset="0.1988" stop-color="#f754b0"/><stop offset="0.2185" stop-color="#f855af"/><stop offset="0.2244" stop-color="#ee4db7"/><stop offset="0.2382" stop-color="#b827de"/><stop offset="0.2441" stop-color="#ad21e4"/><stop offset="0.2500" stop-color="#bb29dc"/><stop offset="0.2618" stop-color="#f955af"/><stop offset="0.2697" stop-color="#ff5ca8"/><stop offset="0.2756" stop-color="#e748bc"/><stop offset="0.2855" stop-color="#9d17ee"/><stop offset="0.2914" stop-color="#7c07ff"/><stop offset="0.2973" stop-color="#7807ff"/><stop offset="0.3012" stop-color="#890cfb"/><stop offset="0.3130" stop-color="#d43aca"/><stop offset="0.3209" stop-color="#e949bb"/><stop offset="0.3288" stop-color="#ce35cf"/><stop offset="0.3386" stop-color="#850afd"/><stop offset="0.3445" stop-color="#5b04ff"/><stop offset="0.3485" stop-color="#5304ff"/><stop offset="0.3524" stop-color="#5d05ff"/><stop offset="0.3583" stop-color="#880bfb"/><stop offset="0.3682" stop-color="#cc33d1"/><stop offset="0.3741" stop-color="#df42c2"/><stop offset="0.3800" stop-color="#dc40c4"/><stop offset="0.3957" stop-color="#9915f1"/><stop offset="0.4016" stop-color="#9312f4"/><stop offset="0.4075" stop-color="#ab20e5"/><stop offset="0.4193" stop-color="#fe59ab"/><stop offset="0.4272" stop-color="#ff6a97"/><stop offset="0.4331" stop-color="#ff5fa4"/><stop offset="0.4371" stop-color="#ef4eb6"/><stop offset="0.4508" stop-color="#860afc"/><stop offset="0.4568" stop-color="#6c06ff"/><stop offset="0.4607" stop-color="#6f06ff"/><stop offset="0.4646" stop-color="#8308ff"/><stop offset="0.4784" stop-color="#d73cc8"/><stop offset="0.4863" stop-color="#e94aba"/><stop offset="0.4942" stop-color="#d439cb"/><stop offset="0.5060" stop-color="#8b0dfa"/><stop offset="0.5119" stop-color="#6c06ff"/><stop offset="0.5158" stop-color="#6606ff"/><stop offset="0.5217" stop-color="#7a07ff"/><stop offset="0.5335" stop-color="#b525e0"/><stop offset="0.5414" stop-color="#cb33d1"/><stop offset="0.5670" stop-color="#b525e0"/><stop offset="0.5768" stop-color="#c32dd7"/><stop offset="0.5906" stop-color="#ff5da6"/><stop offset="0.6005" stop-color="#ff9563"/><stop offset="0.6064" stop-color="#ffa451"/><stop offset="0.6123" stop-color="#ff9663"/><stop offset="0.6221" stop-color="#ff5aaa"/><stop offset="0.6300" stop-color="#c932d2"/><stop offset="0.6359" stop-color="#ac20e5"/><stop offset="0.6517" stop-color="#8108ff"/><stop offset="0.6871" stop-color="#4302ff"/><stop offset="1.0001" stop-color="#4302ff"/></linearGradient>
<linearGradient id="c9" x1="0" y1="0" x2="0" y2="1"><stop offset="0.0000" stop-color="#6d06ff"/><stop offset="0.0138" stop-color="#9211f5"/><stop offset="0.0217" stop-color="#c62fd5"/><stop offset="0.0276" stop-color="#ff5ba9"/><stop offset="0.0354" stop-color="#ffb142"/><stop offset="0.0394" stop-color="#ffdf1c"/><stop offset="0.0413" stop-color="#fff127"/><stop offset="0.0453" stop-color="#fffde2"/><stop offset="0.0472" stop-color="#ffffff"/><stop offset="0.0610" stop-color="#ffffff"/><stop offset="0.0630" stop-color="#fffde1"/><stop offset="0.0669" stop-color="#fff126"/><stop offset="0.0689" stop-color="#ffe01b"/><stop offset="0.0787" stop-color="#ff9662"/><stop offset="0.0847" stop-color="#ff8378"/><stop offset="0.0906" stop-color="#ff7c81"/><stop offset="0.1811" stop-color="#ff5ba9"/><stop offset="0.2205" stop-color="#f351b3"/><stop offset="0.2264" stop-color="#ea4aba"/><stop offset="0.2402" stop-color="#b726de"/><stop offset="0.2461" stop-color="#ad20e5"/><stop offset="0.2520" stop-color="#b927dd"/><stop offset="0.2638" stop-color="#f251b3"/><stop offset="0.2697" stop-color="#fe59ab"/><stop offset="0.2776" stop-color="#e546be"/><stop offset="0.2933" stop-color="#8008ff"/><stop offset="0.2973" stop-color="#7707ff"/><stop offset="0.3012" stop-color="#7f08ff"/><stop offset="0.3169" stop-color="#d63bc9"/><stop offset="0.3248" stop-color="#e245bf"/><stop offset="0.3327" stop-color="#c42ed6"/><stop offset="0.3425" stop-color="#7e08ff"/><stop offset="0.3484" stop-color="#5a04ff"/><stop offset="0.3524" stop-color="#5704ff"/><stop offset="0.3603" stop-color="#7f08ff"/><stop offset="0.3701" stop-color="#be2ada"/><stop offset="0.3780" stop-color="#d339cb"/><stop offset="0.3858" stop-color="#bc29db"/><stop offset="0.3937" stop-color="#880bfc"/><stop offset="0.3996" stop-color="#5904ff"/><stop offset="0.4036" stop-color="#4d03ff"/><stop offset="0.4075" stop-color="#5804ff"/><stop offset="0.4134" stop-color="#870bfc"/><stop offset="0.4252" stop-color="#d63bc9"/><stop offset="0.4331" stop-color="#ec4cb8"/><stop offset="0.4410" stop-color="#db3fc5"/><stop offset="0.4547" stop-color="#890cfb"/><stop offset="0.4607" stop-color="#7106ff"/><stop offset="0.4646" stop-color="#7107ff"/><stop offset="0.4685" stop-color="#8008ff"/><stop offset="0.4843" stop-color="#d93dc7"/><stop offset="0.4922" stop-color="#ec4cb8"/><stop offset="0.5000" stop-color="#dd40c4"/><stop offset="0.5197" stop-color="#7e08ff"/><stop offset="0.5236" stop-color="#7807ff"/><stop offset="0.5296" stop-color="#8309fe"/><stop offset="0.5492" stop-color="#cb33d1"/><stop offset="0.5729" stop-color="#d43aca"/><stop offset="0.5847" stop-color="#ec4cb8"/><stop offset="0.5906" stop-color="#ff5da6"/><stop offset="0.6004" stop-color="#ff8f6b"/><stop offset="0.6063" stop-color="#ff9d5a"/><stop offset="0.6122" stop-color="#ff8f6b"/><stop offset="0.6201" stop-color="#ff5da7"/><stop offset="0.6280" stop-color="#c12cd8"/><stop offset="0.6398" stop-color="#8208ff"/><stop offset="0.6477" stop-color="#6806ff"/><stop offset="0.6595" stop-color="#5404ff"/><stop offset="0.6870" stop-color="#4b03ff"/><stop offset="1.0001" stop-color="#4a03ff"/></linearGradient>
<linearGradient id="c10" x1="0" y1="0" x2="0" y2="1"><stop offset="0.0000" stop-color="#6f06ff"/><stop offset="0.0118" stop-color="#9010f6"/><stop offset="0.0197" stop-color="#c12cd8"/><stop offset="0.0256" stop-color="#f956ae"/><stop offset="0.0354" stop-color="#ffc130"/><stop offset="0.0394" stop-color="#ffee11"/><stop offset="0.0433" stop-color="#fffbc7"/><stop offset="0.0453" stop-color="#ffffff"/><stop offset="0.0591" stop-color="#ffffff"/><stop offset="0.0610" stop-color="#fffeeb"/><stop offset="0.0650" stop-color="#fff22e"/><stop offset="0.0669" stop-color="#ffe21a"/><stop offset="0.0768" stop-color="#ff9465"/><stop offset="0.0827" stop-color="#ff807d"/><stop offset="0.0886" stop-color="#ff7886"/><stop offset="0.1732" stop-color="#ff5aa9"/><stop offset="0.2047" stop-color="#ec4cb8"/><stop offset="0.2224" stop-color="#ed4cb8"/><stop offset="0.2303" stop-color="#e043c1"/><stop offset="0.2480" stop-color="#aa1fe7"/><stop offset="0.2539" stop-color="#b324e1"/><stop offset="0.2677" stop-color="#ef4eb6"/><stop offset="0.2736" stop-color="#f552b2"/><stop offset="0.2795" stop-color="#e244c0"/><stop offset="0.2933" stop-color="#8c0df9"/><stop offset="0.3012" stop-color="#7607ff"/><stop offset="0.3071" stop-color="#890cfb"/><stop offset="0.3189" stop-color="#ca33d1"/><stop offset="0.3268" stop-color="#dc40c4"/><stop offset="0.3346" stop-color="#c62fd5"/><stop offset="0.3445" stop-color="#870bfc"/><stop offset="0.3504" stop-color="#6105ff"/><stop offset="0.3543" stop-color="#5704ff"/><stop offset="0.3583" stop-color="#5d05ff"/><stop offset="0.3642" stop-color="#8108ff"/><stop offset="0.3740" stop-color="#bf2bd9"/><stop offset="0.3819" stop-color="#db3fc5"/><stop offset="0.3898" stop-color="#d439cb"/><stop offset="0.4035" stop-color="#9915f1"/><stop offset="0.4094" stop-color="#8f0ff7"/><stop offset="0.4173" stop-color="#a11aec"/><stop offset="0.4311" stop-color="#dc40c4"/><stop offset="0.4390" stop-color="#e547bd"/><stop offset="0.4468" stop-color="#cd34d0"/><stop offset="0.4587" stop-color="#8409fe"/><stop offset="0.4646" stop-color="#6005ff"/><stop offset="0.4685" stop-color="#5704ff"/><stop offset="0.4744" stop-color="#6105ff"/><stop offset="0.4803" stop-color="#8308ff"/><stop offset="0.4921" stop-color="#bf2bda"/><stop offset="0.5020" stop-color="#cd35cf"/><stop offset="0.5098" stop-color="#b928dd"/><stop offset="0.5216" stop-color="#7e08ff"/><stop offset="0.5295" stop-color="#5504ff"/><stop offset="0.5354" stop-color="#4b03ff"/><stop offset="0.5433" stop-color="#5904ff"/><stop offset="0.5531" stop-color="#8108ff"/><stop offset="0.5748" stop-color="#c62fd5"/><stop offset="0.5846" stop-color="#ff649e"/><stop offset="0.5925" stop-color="#ffb73b"/><stop offset="0.5964" stop-color="#ffe617"/><stop offset="0.5984" stop-color="#fff448"/><stop offset="0.6004" stop-color="#fff9a3"/><stop offset="0.6023" stop-color="#fffee8"/><stop offset="0.6043" stop-color="#ffffff"/><stop offset="0.6083" stop-color="#ffffff"/><stop offset="0.6102" stop-color="#fffeec"/><stop offset="0.6122" stop-color="#fffab3"/><stop offset="0.6161" stop-color="#fff22b"/><stop offset="0.6181" stop-color="#ffe617"/><stop offset="0.6299" stop-color="#ff906a"/><stop offset="0.6437" stop-color="#f956ae"/><stop offset="0.6555" stop-color="#da3ec6"/><stop offset="0.6752" stop-color="#be2ada"/><stop offset="0.6929" stop-color="#7e08ff"/><stop offset="0.7008" stop-color="#5d05ff"/><stop offset="0.7086" stop-color="#5104ff"/><stop offset="1.0019" stop-color="#5104ff"/></linearGradient>
<linearGradient id="c11" x1="0" y1="0" x2="0" y2="1"><stop offset="0.0000" stop-color="#7207ff"/><stop offset="0.0118" stop-color="#9613f3"/><stop offset="0.0197" stop-color="#cb33d1"/><stop offset="0.0256" stop-color="#ff61a1"/><stop offset="0.0335" stop-color="#ffb839"/><stop offset="0.0374" stop-color="#ffe617"/><stop offset="0.0394" stop-color="#fff347"/><stop offset="0.0433" stop-color="#fffff9"/><stop offset="0.0590" stop-color="#fffffb"/><stop offset="0.0630" stop-color="#fff33d"/><stop offset="0.0650" stop-color="#ffe418"/><stop offset="0.0748" stop-color="#ff9267"/><stop offset="0.0807" stop-color="#ff7c81"/><stop offset="0.0886" stop-color="#ff728d"/><stop offset="0.1634" stop-color="#ff5aaa"/><stop offset="0.2086" stop-color="#e446be"/><stop offset="0.2264" stop-color="#e546be"/><stop offset="0.2519" stop-color="#a51ce9"/><stop offset="0.2578" stop-color="#b122e2"/><stop offset="0.2697" stop-color="#e345bf"/><stop offset="0.2756" stop-color="#ed4cb8"/><stop offset="0.2815" stop-color="#e043c1"/><stop offset="0.2972" stop-color="#860afd"/><stop offset="0.3031" stop-color="#7307ff"/><stop offset="0.3110" stop-color="#870bfc"/><stop offset="0.3248" stop-color="#cc34d0"/><stop offset="0.3307" stop-color="#d53aca"/><stop offset="0.3385" stop-color="#bf2bd9"/><stop offset="0.3484" stop-color="#8409fe"/><stop offset="0.3543" stop-color="#6005ff"/><stop offset="0.3582" stop-color="#5804ff"/><stop offset="0.3622" stop-color="#5e05ff"/><stop offset="0.3681" stop-color="#8308ff"/><stop offset="0.3819" stop-color="#e748bc"/><stop offset="0.3878" stop-color="#ff60a3"/><stop offset="0.3976" stop-color="#ff6b96"/><stop offset="0.4035" stop-color="#ff5da7"/><stop offset="0.4192" stop-color="#d238cc"/><stop offset="0.4370" stop-color="#e849bb"/><stop offset="0.4448" stop-color="#e647bd"/><stop offset="0.4527" stop-color="#ca32d2"/><stop offset="0.4645" stop-color="#8108ff"/><stop offset="0.4704" stop-color="#5a04ff"/><stop offset="0.4763" stop-color="#4903ff"/><stop offset="0.4822" stop-color="#5104ff"/><stop offset="0.4921" stop-color="#8409fe"/><stop offset="0.5019" stop-color="#ad20e5"/><stop offset="0.5078" stop-color="#b927dd"/><stop offset="0.5196" stop-color="#a91ee7"/><stop offset="0.5295" stop-color="#8108ff"/><stop offset="0.5393" stop-color="#4c03ff"/><stop offset="0.5492" stop-color="#3201ff"/><stop offset="0.5551" stop-color="#3301ff"/><stop offset="0.5629" stop-color="#4503ff"/><stop offset="0.5728" stop-color="#7f08ff"/><stop offset="0.5787" stop-color="#b525df"/><stop offset="0.5846" stop-color="#ff649e"/><stop offset="0.5905" stop-color="#ffc62d"/><stop offset="0.5925" stop-color="#ffe915"/><stop offset="0.5944" stop-color="#fff896"/><stop offset="0.5964" stop-color="#ffffff"/><stop offset="0.6200" stop-color="#ffffff"/><stop offset="0.6220" stop-color="#fffdd9"/><stop offset="0.6259" stop-color="#fff22b"/><stop offset="0.6279" stop-color="#ffe617"/><stop offset="0.6338" stop-color="#ffc230"/><stop offset="0.6417" stop-color="#ff9563"/><stop offset="0.6574" stop-color="#fa56ae"/><stop offset="0.6830" stop-color="#c730d4"/><stop offset="0.7027" stop-color="#8309fe"/><stop offset="0.7106" stop-color="#6505ff"/><stop offset="0.7184" stop-color="#5804ff"/><stop offset="1.0019" stop-color="#5804ff"/></linearGradient>
<linearGradient id="c12" x1="0" y1="0" x2="0" y2="1"><stop offset="0.0000" stop-color="#7407ff"/><stop offset="0.0118" stop-color="#9a16f0"/><stop offset="0.0197" stop-color="#d339cb"/><stop offset="0.0236" stop-color="#fb57ad"/><stop offset="0.0335" stop-color="#ffc130"/><stop offset="0.0374" stop-color="#ffed12"/><stop offset="0.0413" stop-color="#fffbb9"/><stop offset="0.0433" stop-color="#ffffff"/><stop offset="0.0551" stop-color="#ffffff"/><stop offset="0.0571" stop-color="#fffffa"/><stop offset="0.0610" stop-color="#fff345"/><stop offset="0.0630" stop-color="#ffe617"/><stop offset="0.0728" stop-color="#ff9169"/><stop offset="0.0787" stop-color="#ff7885"/><stop offset="0.0846" stop-color="#ff6f91"/><stop offset="0.1614" stop-color="#ff5aaa"/><stop offset="0.2106" stop-color="#e345bf"/><stop offset="0.2283" stop-color="#e446be"/><stop offset="0.2362" stop-color="#d93dc7"/><stop offset="0.2539" stop-color="#a81de8"/><stop offset="0.2598" stop-color="#ae21e4"/><stop offset="0.2736" stop-color="#e244c0"/><stop offset="0.2795" stop-color="#ea4aba"/><stop offset="0.2874" stop-color="#d53aca"/><stop offset="0.3031" stop-color="#8208ff"/><stop offset="0.3110" stop-color="#7d08ff"/><stop offset="0.3267" stop-color="#c32dd7"/><stop offset="0.3346" stop-color="#d339cb"/><stop offset="0.3425" stop-color="#c22cd8"/><stop offset="0.3543" stop-color="#8208ff"/><stop offset="0.3602" stop-color="#6605ff"/><stop offset="0.3641" stop-color="#6305ff"/><stop offset="0.3720" stop-color="#870bfc"/><stop offset="0.3858" stop-color="#ef4eb6"/><stop offset="0.3897" stop-color="#ff61a1"/><stop offset="0.3956" stop-color="#ff738c"/><stop offset="0.3995" stop-color="#ff748b"/><stop offset="0.4113" stop-color="#fd59ab"/><stop offset="0.4271" stop-color="#cf36ce"/><stop offset="0.4468" stop-color="#eb4bb9"/><stop offset="0.4527" stop-color="#ea4aba"/><stop offset="0.4605" stop-color="#d53bc9"/><stop offset="0.4763" stop-color="#8c0df9"/><stop offset="0.4842" stop-color="#7507ff"/><stop offset="0.4940" stop-color="#8409fe"/><stop offset="0.5117" stop-color="#c831d3"/><stop offset="0.5235" stop-color="#db3fc5"/><stop offset="0.5353" stop-color="#cc34d0"/><stop offset="0.5590" stop-color="#8d0ef8"/><stop offset="0.5688" stop-color="#880bfb"/><stop offset="0.5747" stop-color="#9714f2"/><stop offset="0.5806" stop-color="#c52ed6"/><stop offset="0.5865" stop-color="#ff639f"/><stop offset="0.5944" stop-color="#ffc42e"/><stop offset="0.5983" stop-color="#fff017"/><stop offset="0.6003" stop-color="#fff66e"/><stop offset="0.6023" stop-color="#fffab0"/><stop offset="0.6042" stop-color="#fffdda"/><stop offset="0.6062" stop-color="#fffee8"/><stop offset="0.6082" stop-color="#fffdda"/><stop offset="0.6101" stop-color="#fffab0"/><stop offset="0.6141" stop-color="#fff22d"/><stop offset="0.6160" stop-color="#ffe517"/><stop offset="0.6200" stop-color="#ffc22f"/><stop offset="0.6278" stop-color="#ff8675"/><stop offset="0.6377" stop-color="#fe5aaa"/><stop offset="0.6416" stop-color="#ef4eb6"/><stop offset="0.6554" stop-color="#d83dc7"/><stop offset="0.6849" stop-color="#ce35cf"/><stop offset="0.7125" stop-color="#8309fe"/><stop offset="0.7282" stop-color="#6005ff"/><stop offset="1.0018" stop-color="#6005ff"/></linearGradient>
<linearGradient id="c13" x1="0" y1="0" x2="0" y2="1"><stop offset="0.0000" stop-color="#7607ff"/><stop offset="0.0098" stop-color="#9412f4"/><stop offset="0.0177" stop-color="#c730d4"/><stop offset="0.0236" stop-color="#ff5ba9"/><stop offset="0.0335" stop-color="#ffc52d"/><stop offset="0.0374" stop-color="#ffef11"/><stop offset="0.0413" stop-color="#fffab7"/><stop offset="0.0433" stop-color="#fffff9"/><stop offset="0.0531" stop-color="#ffffff"/><stop offset="0.0551" stop-color="#fffffc"/><stop offset="0.0590" stop-color="#fff456"/><stop offset="0.0610" stop-color="#ffea14"/><stop offset="0.0669" stop-color="#ffaf44"/><stop offset="0.0728" stop-color="#ff8676"/><stop offset="0.0787" stop-color="#ff718f"/><stop offset="0.0846" stop-color="#ff6998"/><stop offset="0.1653" stop-color="#ff5aaa"/><stop offset="0.2145" stop-color="#e446be"/><stop offset="0.2322" stop-color="#e546be"/><stop offset="0.2578" stop-color="#ad21e4"/><stop offset="0.2637" stop-color="#b324e1"/><stop offset="0.2775" stop-color="#e446be"/><stop offset="0.2834" stop-color="#ec4cb8"/><stop offset="0.2893" stop-color="#e043c1"/><stop offset="0.3050" stop-color="#9312f5"/><stop offset="0.3109" stop-color="#8509fd"/><stop offset="0.3168" stop-color="#8a0dfa"/><stop offset="0.3326" stop-color="#cb33d1"/><stop offset="0.3405" stop-color="#d63bc9"/><stop offset="0.3483" stop-color="#c32dd7"/><stop offset="0.3601" stop-color="#880bfb"/><stop offset="0.3660" stop-color="#7107ff"/><stop offset="0.3700" stop-color="#6f06ff"/><stop offset="0.3759" stop-color="#8208ff"/><stop offset="0.3897" stop-color="#ca32d2"/><stop offset="0.3956" stop-color="#da3fc5"/><stop offset="0.4133" stop-color="#d83dc7"/><stop offset="0.4251" stop-color="#b022e3"/><stop offset="0.4310" stop-color="#a71de8"/><stop offset="0.4369" stop-color="#af21e3"/><stop offset="0.4526" stop-color="#e446be"/><stop offset="0.4605" stop-color="#f150b4"/><stop offset="0.4704" stop-color="#e446be"/><stop offset="0.4900" stop-color="#a41bea"/><stop offset="0.4999" stop-color="#a019ed"/><stop offset="0.5333" stop-color="#fd59ab"/><stop offset="0.5432" stop-color="#ff5ea5"/><stop offset="0.5688" stop-color="#e94aba"/><stop offset="0.5766" stop-color="#ee4eb6"/><stop offset="0.5825" stop-color="#ff5aaa"/><stop offset="0.5884" stop-color="#ff6a97"/><stop offset="0.6022" stop-color="#ffb241"/><stop offset="0.6061" stop-color="#ffb938"/><stop offset="0.6120" stop-color="#ffa84c"/><stop offset="0.6219" stop-color="#ff5da7"/><stop offset="0.6278" stop-color="#cb33d1"/><stop offset="0.6337" stop-color="#a21aec"/><stop offset="0.6435" stop-color="#7e08ff"/><stop offset="0.6534" stop-color="#6e06ff"/><stop offset="0.6691" stop-color="#6605ff"/><stop offset="1.0017" stop-color="#6706ff"/></linearGradient>
<linearGradient id="c14" x1="0" y1="0" x2="0" y2="1"><stop offset="0.0000" stop-color="#7707ff"/><stop offset="0.0098" stop-color="#9613f3"/><stop offset="0.0177" stop-color="#c931d3"/><stop offset="0.0236" stop-color="#ff5ca7"/><stop offset="0.0335" stop-color="#ffc42e"/><stop offset="0.0374" stop-color="#ffed12"/><stop offset="0.0413" stop-color="#fff9a3"/><stop offset="0.0433" stop-color="#fffde1"/><stop offset="0.0453" stop-color="#ffffff"/><stop offset="0.0531" stop-color="#ffffff"/><stop offset="0.0551" stop-color="#fffbc4"/><stop offset="0.0590" stop-color="#fff119"/><stop offset="0.0630" stop-color="#ffc92a"/><stop offset="0.0708" stop-color="#ff8873"/><stop offset="0.0767" stop-color="#ff6f91"/><stop offset="0.0826" stop-color="#ff659d"/><stop offset="0.1417" stop-color="#ff5aaa"/><stop offset="0.2184" stop-color="#da3fc5"/><stop offset="0.2361" stop-color="#db3fc5"/><stop offset="0.2617" stop-color="#a51ce9"/><stop offset="0.2696" stop-color="#af21e3"/><stop offset="0.2834" stop-color="#dc40c4"/><stop offset="0.2893" stop-color="#e043c1"/><stop offset="0.2971" stop-color="#ca32d2"/><stop offset="0.3109" stop-color="#890cfb"/><stop offset="0.3168" stop-color="#7d08ff"/><stop offset="0.3247" stop-color="#8c0ef9"/><stop offset="0.3385" stop-color="#c32dd7"/><stop offset="0.3463" stop-color="#cc34d0"/><stop offset="0.3542" stop-color="#b927dd"/><stop offset="0.3660" stop-color="#8208ff"/><stop offset="0.3739" stop-color="#6806ff"/><stop offset="0.3778" stop-color="#6906ff"/><stop offset="0.3837" stop-color="#7e08ff"/><stop offset="0.3975" stop-color="#b626df"/><stop offset="0.4113" stop-color="#d137cd"/><stop offset="0.4172" stop-color="#c931d3"/><stop offset="0.4290" stop-color="#9814f2"/><stop offset="0.4369" stop-color="#880bfb"/><stop offset="0.4447" stop-color="#9010f6"/><stop offset="0.4624" stop-color="#cd35cf"/><stop offset="0.4723" stop-color="#db3fc5"/><stop offset="0.4821" stop-color="#cd35cf"/><stop offset="0.5038" stop-color="#8e0ff8"/><stop offset="0.5195" stop-color="#9010f6"/><stop offset="0.5451" stop-color="#ce35cf"/><stop offset="0.5746" stop-color="#fa56ae"/><stop offset="0.5864" stop-color="#ff8774"/><stop offset="0.5982" stop-color="#ffeb14"/><stop offset="0.6022" stop-color="#fff88c"/><stop offset="0.6041" stop-color="#fffab4"/><stop offset="0.6061" stop-color="#fffbc2"/><stop offset="0.6081" stop-color="#fffab4"/><stop offset="0.6100" stop-color="#fff88c"/><stop offset="0.6140" stop-color="#ffef11"/><stop offset="0.6199" stop-color="#ffbd33"/><stop offset="0.6277" stop-color="#ff8379"/><stop offset="0.6376" stop-color="#fd59ab"/><stop offset="0.6415" stop-color="#ef4eb6"/><stop offset="0.6553" stop-color="#dc40c4"/><stop offset="0.6966" stop-color="#d339cb"/><stop offset="0.7340" stop-color="#8409fe"/><stop offset="0.7497" stop-color="#6e06ff"/><stop offset="1.0016" stop-color="#6e06ff"/></linearGradient>
<linearGradient id="c15" x1="0" y1="0" x2="0" y2="1"><stop offset="0.0000" stop-color="#7807ff"/><stop offset="0.0098" stop-color="#9412f4"/><stop offset="0.0177" stop-color="#c52fd5"/><stop offset="0.0236" stop-color="#fb57ad"/><stop offset="0.0335" stop-color="#ffba37"/><stop offset="0.0374" stop-color="#ffe11a"/><stop offset="0.0394" stop-color="#fff11a"/><stop offset="0.0433" stop-color="#fff99d"/><stop offset="0.0453" stop-color="#fffcc8"/><stop offset="0.0472" stop-color="#fffde3"/><stop offset="0.0492" stop-color="#fffeec"/><stop offset="0.0512" stop-color="#fffddf"/><stop offset="0.0531" stop-color="#fffbb9"/><stop offset="0.0551" stop-color="#fff77d"/><stop offset="0.0571" stop-color="#fff231"/><stop offset="0.0590" stop-color="#ffe418"/><stop offset="0.0649" stop-color="#ffab49"/><stop offset="0.0708" stop-color="#ff807d"/><stop offset="0.0767" stop-color="#ff6899"/><stop offset="0.0826" stop-color="#ff5fa3"/><stop offset="0.1181" stop-color="#fc58ac"/><stop offset="0.2401" stop-color="#c32dd7"/><stop offset="0.2656" stop-color="#8c0df9"/><stop offset="0.2735" stop-color="#9110f6"/><stop offset="0.2893" stop-color="#c02bd9"/><stop offset="0.2952" stop-color="#c12cd8"/><stop offset="0.3011" stop-color="#b123e2"/><stop offset="0.3109" stop-color="#8409fe"/><stop offset="0.3168" stop-color="#6505ff"/><stop offset="0.3227" stop-color="#5904ff"/><stop offset="0.3286" stop-color="#6405ff"/><stop offset="0.3345" stop-color="#7f08ff"/><stop offset="0.3443" stop-color="#a51ce9"/><stop offset="0.3522" stop-color="#af22e3"/><stop offset="0.3581" stop-color="#a51ce9"/><stop offset="0.3680" stop-color="#8108ff"/><stop offset="0.3778" stop-color="#6405ff"/><stop offset="0.3817" stop-color="#6b06ff"/><stop offset="0.3876" stop-color="#890cfb"/><stop offset="0.4014" stop-color="#ec4cb8"/><stop offset="0.4093" stop-color="#ff5aaa"/><stop offset="0.4211" stop-color="#e446be"/><stop offset="0.4388" stop-color="#8309fe"/><stop offset="0.4486" stop-color="#5d05ff"/><stop offset="0.4565" stop-color="#6205ff"/><stop offset="0.4762" stop-color="#9b16f0"/><stop offset="0.4860" stop-color="#9e18ee"/><stop offset="0.4978" stop-color="#850afd"/><stop offset="0.5195" stop-color="#2c00ff"/><stop offset="0.5352" stop-color="#2300f8"/><stop offset="0.5451" stop-color="#2800ff"/><stop offset="0.5549" stop-color="#3c02ff"/><stop offset="0.5647" stop-color="#5804ff"/><stop offset="0.5706" stop-color="#7507ff"/><stop offset="0.5765" stop-color="#a11aec"/><stop offset="0.5824" stop-color="#e647bd"/><stop offset="0.5844" stop-color="#ff61a2"/><stop offset="0.5903" stop-color="#ffc72c"/><stop offset="0.5923" stop-color="#ffed12"/><stop offset="0.5942" stop-color="#fffab2"/><stop offset="0.5962" stop-color="#ffffff"/><stop offset="0.6198" stop-color="#ffffff"/><stop offset="0.6218" stop-color="#fffffe"/><stop offset="0.6257" stop-color="#fff451"/><stop offset="0.6277" stop-color="#ffee11"/><stop offset="0.6356" stop-color="#ffc030"/><stop offset="0.6454" stop-color="#ff906a"/><stop offset="0.6631" stop-color="#fe59ab"/><stop offset="0.6749" stop-color="#ee4db7"/><stop offset="0.7044" stop-color="#e244c0"/><stop offset="0.7477" stop-color="#8308ff"/><stop offset="0.7595" stop-color="#7507ff"/><stop offset="1.0016" stop-color="#7507ff"/></linearGradient>
<linearGradient id="c16" x1="0" y1="0" x2="0" y2="1"><stop offset="0.0000" stop-color="#7807ff"/><stop offset="0.0118" stop-color="#9c17ef"/><stop offset="0.0197" stop-color="#d037cd"/><stop offset="0.0256" stop-color="#ff62a0"/><stop offset="0.0354" stop-color="#ffc130"/><stop offset="0.0394" stop-color="#ffe418"/><stop offset="0.0413" stop-color="#fff118"/><stop offset="0.0433" stop-color="#fff450"/><stop offset="0.0453" stop-color="#fff779"/><stop offset="0.0472" stop-color="#fff892"/><stop offset="0.0492" stop-color="#fff99b"/><stop offset="0.0512" stop-color="#fff889"/><stop offset="0.0531" stop-color="#fff456"/><stop offset="0.0551" stop-color="#ffee11"/><stop offset="0.0590" stop-color="#ffc42e"/><stop offset="0.0669" stop-color="#ff7985"/><stop offset="0.0728" stop-color="#ff60a3"/><stop offset="0.0787" stop-color="#fd59ab"/><stop offset="0.1220" stop-color="#f553b1"/><stop offset="0.2459" stop-color="#bd2ada"/><stop offset="0.2715" stop-color="#8a0cfa"/><stop offset="0.2774" stop-color="#8d0ef8"/><stop offset="0.2932" stop-color="#b927dd"/><stop offset="0.2991" stop-color="#be2ada"/><stop offset="0.3069" stop-color="#ad21e4"/><stop offset="0.3168" stop-color="#8309fe"/><stop offset="0.3227" stop-color="#6706ff"/><stop offset="0.3286" stop-color="#5b05ff"/><stop offset="0.3345" stop-color="#6405ff"/><stop offset="0.3404" stop-color="#7c07ff"/><stop offset="0.3561" stop-color="#ac20e5"/><stop offset="0.3778" stop-color="#9211f5"/><stop offset="0.3837" stop-color="#9814f2"/><stop offset="0.3915" stop-color="#be2ada"/><stop offset="0.4014" stop-color="#ff5ca7"/><stop offset="0.4073" stop-color="#ff708f"/><stop offset="0.4152" stop-color="#ff7984"/><stop offset="0.4270" stop-color="#ff61a1"/><stop offset="0.4289" stop-color="#fe59ab"/><stop offset="0.4486" stop-color="#8a0dfa"/><stop offset="0.4604" stop-color="#6105ff"/><stop offset="0.4683" stop-color="#6706ff"/><stop offset="0.4880" stop-color="#9b16ef"/><stop offset="0.4978" stop-color="#a41bea"/><stop offset="0.5135" stop-color="#8e0ff8"/><stop offset="0.5352" stop-color="#4a03ff"/><stop offset="0.5470" stop-color="#3401ff"/><stop offset="0.5607" stop-color="#3101ff"/><stop offset="0.5706" stop-color="#4a03ff"/><stop offset="0.5765" stop-color="#7807ff"/><stop offset="0.5824" stop-color="#c12cd8"/><stop offset="0.5863" stop-color="#ff5fa4"/><stop offset="0.5922" stop-color="#ffc42e"/><stop offset="0.5942" stop-color="#ffe617"/><stop offset="0.5962" stop-color="#fff674"/><stop offset="0.5981" stop-color="#fffef3"/><stop offset="0.6001" stop-color="#ffffff"/><stop offset="0.6139" stop-color="#ffffff"/><stop offset="0.6158" stop-color="#fffdd8"/><stop offset="0.6198" stop-color="#fff233"/><stop offset="0.6217" stop-color="#ffe617"/><stop offset="0.6296" stop-color="#ffad47"/><stop offset="0.6395" stop-color="#ff807c"/><stop offset="0.6552" stop-color="#ff5ca8"/><stop offset="0.7103" stop-color="#e647bd"/><stop offset="0.7595" stop-color="#8409fe"/><stop offset="0.7713" stop-color="#7b07ff"/><stop offset="1.0015" stop-color="#7b07ff"/></linearGradient>
<linearGradient id="c17" x1="0" y1="0" x2="0" y2="1"><stop offset="0.0000" stop-color="#7707ff"/><stop offset="0.0118" stop-color="#9614f2"/><stop offset="0.0197" stop-color="#c730d4"/><stop offset="0.0256" stop-color="#fb57ad"/><stop offset="0.0374" stop-color="#ffc42e"/><stop offset="0.0433" stop-color="#ffed12"/><stop offset="0.0472" stop-color="#fff345"/><stop offset="0.0492" stop-color="#fff44d"/><stop offset="0.0512" stop-color="#fff22a"/><stop offset="0.0531" stop-color="#ffe11a"/><stop offset="0.0551" stop-color="#ffc52d"/><stop offset="0.0590" stop-color="#ff8b70"/><stop offset="0.0630" stop-color="#ff659d"/><stop offset="0.0708" stop-color="#f553b1"/><stop offset="0.1574" stop-color="#f452b2"/><stop offset="0.2302" stop-color="#da3ec6"/><stop offset="0.2518" stop-color="#dc40c4"/><stop offset="0.2774" stop-color="#b525e0"/><stop offset="0.3049" stop-color="#e647bd"/><stop offset="0.3128" stop-color="#d93dc7"/><stop offset="0.3286" stop-color="#a019ec"/><stop offset="0.3364" stop-color="#9614f2"/><stop offset="0.3659" stop-color="#da3ec6"/><stop offset="0.4013" stop-color="#c42ed6"/><stop offset="0.4132" stop-color="#ff60a3"/><stop offset="0.4171" stop-color="#ff6f91"/><stop offset="0.4250" stop-color="#ff7589"/><stop offset="0.4407" stop-color="#ff5da6"/><stop offset="0.4604" stop-color="#be2ada"/><stop offset="0.4722" stop-color="#af22e3"/><stop offset="0.4800" stop-color="#b827de"/><stop offset="0.5115" stop-color="#ff5aaa"/><stop offset="0.5253" stop-color="#ff5fa4"/><stop offset="0.5627" stop-color="#e244c0"/><stop offset="0.5725" stop-color="#e647bd"/><stop offset="0.5804" stop-color="#ff5da7"/><stop offset="0.5902" stop-color="#ff7d80"/><stop offset="0.6020" stop-color="#ffc130"/><stop offset="0.6060" stop-color="#ffc92b"/><stop offset="0.6119" stop-color="#ffb73b"/><stop offset="0.6237" stop-color="#fb57ad"/><stop offset="0.6296" stop-color="#c931d3"/><stop offset="0.6374" stop-color="#9f19ed"/><stop offset="0.6473" stop-color="#8c0ef9"/><stop offset="0.7771" stop-color="#8008ff"/><stop offset="1.0014" stop-color="#8008ff"/></linearGradient>
<linearGradient id="c18" x1="0" y1="0" x2="0" y2="1"><stop offset="0.0000" stop-color="#7707ff"/><stop offset="0.0138" stop-color="#9a15f0"/><stop offset="0.0197" stop-color="#bd2adb"/><stop offset="0.0275" stop-color="#ff5da6"/><stop offset="0.0393" stop-color="#ffc72c"/><stop offset="0.0452" stop-color="#ffe915"/><stop offset="0.0492" stop-color="#fff010"/><stop offset="0.0511" stop-color="#ffda1f"/><stop offset="0.0551" stop-color="#ff7787"/><stop offset="0.0570" stop-color="#ff5ba9"/><stop offset="0.0610" stop-color="#ee4db7"/><stop offset="0.1554" stop-color="#ef4eb6"/><stop offset="0.2341" stop-color="#d63bc9"/><stop offset="0.2577" stop-color="#d83dc7"/><stop offset="0.2833" stop-color="#b424e0"/><stop offset="0.3128" stop-color="#e144c0"/><stop offset="0.3423" stop-color="#9714f2"/><stop offset="0.3502" stop-color="#9f18ed"/><stop offset="0.3679" stop-color="#cf36ce"/><stop offset="0.3757" stop-color="#d53aca"/><stop offset="0.3875" stop-color="#c02bd9"/><stop offset="0.4013" stop-color="#7e08ff"/><stop offset="0.4053" stop-color="#8108ff"/><stop offset="0.4171" stop-color="#b726df"/><stop offset="0.4407" stop-color="#e94aba"/><stop offset="0.4525" stop-color="#e547bd"/><stop offset="0.4741" stop-color="#ba28dd"/><stop offset="0.4859" stop-color="#b022e2"/><stop offset="0.4957" stop-color="#b927dd"/><stop offset="0.5331" stop-color="#ff5aaa"/><stop offset="0.5705" stop-color="#ff61a2"/><stop offset="0.5902" stop-color="#ff9168"/><stop offset="0.5980" stop-color="#ffc031"/><stop offset="0.6020" stop-color="#ffda1f"/><stop offset="0.6059" stop-color="#ffe319"/><stop offset="0.6098" stop-color="#ffda1f"/><stop offset="0.6138" stop-color="#ffc130"/><stop offset="0.6256" stop-color="#ff5ea5"/><stop offset="0.6295" stop-color="#e547bd"/><stop offset="0.6394" stop-color="#b827de"/><stop offset="0.6472" stop-color="#ab1fe6"/><stop offset="0.7200" stop-color="#a41cea"/><stop offset="0.7908" stop-color="#8409fe"/><stop offset="1.0013" stop-color="#8409fe"/></linearGradient>
<linearGradient id="c19" x1="0" y1="0" x2="0" y2="1"><stop offset="0.0000" stop-color="#7607ff"/><stop offset="0.0118" stop-color="#8d0ef8"/><stop offset="0.0216" stop-color="#c32dd7"/><stop offset="0.0295" stop-color="#ff649f"/><stop offset="0.0393" stop-color="#ffba37"/><stop offset="0.0452" stop-color="#ffdc1e"/><stop offset="0.0492" stop-color="#ffe319"/><stop offset="0.0511" stop-color="#ffc72c"/><stop offset="0.0551" stop-color="#ff60a2"/><stop offset="0.0570" stop-color="#ef4eb6"/><stop offset="0.0590" stop-color="#e849bb"/><stop offset="0.1180" stop-color="#e446be"/><stop offset="0.2616" stop-color="#9a15f0"/><stop offset="0.2911" stop-color="#6205ff"/><stop offset="0.2970" stop-color="#6806ff"/><stop offset="0.3128" stop-color="#9312f4"/><stop offset="0.3206" stop-color="#9814f2"/><stop offset="0.3305" stop-color="#8308ff"/><stop offset="0.3423" stop-color="#4e03ff"/><stop offset="0.3501" stop-color="#3d02ff"/><stop offset="0.3600" stop-color="#4b03ff"/><stop offset="0.3777" stop-color="#8d0ef8"/><stop offset="0.3993" stop-color="#aa1fe6"/><stop offset="0.4151" stop-color="#8008ff"/><stop offset="0.4229" stop-color="#7407ff"/><stop offset="0.4505" stop-color="#9c17ef"/><stop offset="0.4623" stop-color="#9c17ef"/><stop offset="0.4760" stop-color="#8208ff"/><stop offset="0.4957" stop-color="#4302ff"/><stop offset="0.5095" stop-color="#3101ff"/><stop offset="0.5252" stop-color="#3b02ff"/><stop offset="0.5606" stop-color="#6806ff"/><stop offset="0.5685" stop-color="#7b07ff"/><stop offset="0.5764" stop-color="#a41bea"/><stop offset="0.5823" stop-color="#e043c1"/><stop offset="0.5842" stop-color="#fe59ab"/><stop offset="0.5901" stop-color="#ffb83a"/><stop offset="0.5921" stop-color="#ffdb1e"/><stop offset="0.5941" stop-color="#fff452"/><stop offset="0.5960" stop-color="#fffeef"/><stop offset="0.5980" stop-color="#ffffff"/><stop offset="0.6177" stop-color="#ffffff"/><stop offset="0.6196" stop-color="#fffcd1"/><stop offset="0.6236" stop-color="#fff126"/><stop offset="0.6255" stop-color="#ffe518"/><stop offset="0.6432" stop-color="#ff8c6e"/><stop offset="0.6649" stop-color="#ff5da7"/><stop offset="0.7298" stop-color="#f14fb5"/><stop offset="0.7927" stop-color="#8e0ff7"/><stop offset="0.8065" stop-color="#860afc"/><stop offset="1.0012" stop-color="#860afc"/></linearGradient>
<linearGradient id="c20" x1="0" y1="0" x2="0" y2="1"><stop offset="0.0000" stop-color="#7707ff"/><stop offset="0.0118" stop-color="#890cfa"/><stop offset="0.0216" stop-color="#b827de"/><stop offset="0.0295" stop-color="#fb57ad"/><stop offset="0.0413" stop-color="#ffb83a"/><stop offset="0.0492" stop-color="#ffd224"/><stop offset="0.0511" stop-color="#ffb839"/><stop offset="0.0531" stop-color="#ff8379"/><stop offset="0.0551" stop-color="#ff5aaa"/><stop offset="0.0570" stop-color="#e849bb"/><stop offset="0.0590" stop-color="#e245bf"/><stop offset="0.1121" stop-color="#e043c1"/><stop offset="0.2085" stop-color="#b224e1"/><stop offset="0.2734" stop-color="#8a0dfa"/><stop offset="0.2970" stop-color="#5804ff"/><stop offset="0.3049" stop-color="#5e05ff"/><stop offset="0.3206" stop-color="#890cfa"/><stop offset="0.3285" stop-color="#8e0ff8"/><stop offset="0.3363" stop-color="#8108ff"/><stop offset="0.3521" stop-color="#4402ff"/><stop offset="0.3599" stop-color="#3901ff"/><stop offset="0.3678" stop-color="#4903ff"/><stop offset="0.3777" stop-color="#8409fe"/><stop offset="0.3875" stop-color="#c32dd7"/><stop offset="0.3954" stop-color="#fc58ac"/><stop offset="0.4032" stop-color="#ff7090"/><stop offset="0.4111" stop-color="#ff5ba9"/><stop offset="0.4249" stop-color="#bf2bd9"/><stop offset="0.4386" stop-color="#9111f6"/><stop offset="0.4799" stop-color="#9110f6"/><stop offset="0.4898" stop-color="#8108ff"/><stop offset="0.5114" stop-color="#4202ff"/><stop offset="0.5252" stop-color="#2800ff"/><stop offset="0.5566" stop-color="#2900ff"/><stop offset="0.5684" stop-color="#4302ff"/><stop offset="0.5724" stop-color="#5904ff"/><stop offset="0.5763" stop-color="#7e08ff"/><stop offset="0.5802" stop-color="#ab1fe6"/><stop offset="0.5842" stop-color="#ec4cb8"/><stop offset="0.5861" stop-color="#ff6b95"/><stop offset="0.5901" stop-color="#ffb63b"/><stop offset="0.5920" stop-color="#ffdd1d"/><stop offset="0.5940" stop-color="#fff66c"/><stop offset="0.5960" stop-color="#ffffff"/><stop offset="0.6196" stop-color="#ffffff"/><stop offset="0.6235" stop-color="#fff456"/><stop offset="0.6255" stop-color="#ffee11"/><stop offset="0.6314" stop-color="#ffc92a"/><stop offset="0.6452" stop-color="#ff8d6d"/><stop offset="0.6589" stop-color="#ff6899"/><stop offset="0.6707" stop-color="#fe59ab"/><stop offset="0.7376" stop-color="#f250b4"/><stop offset="0.7946" stop-color="#9c17ef"/><stop offset="0.8143" stop-color="#890cfb"/><stop offset="1.0012" stop-color="#880bfb"/></linearGradient>
<linearGradient id="c21" x1="0" y1="0" x2="0" y2="1"><stop offset="0.0000" stop-color="#7707ff"/><stop offset="0.0138" stop-color="#8b0df9"/><stop offset="0.0216" stop-color="#ae21e4"/><stop offset="0.0315" stop-color="#ff5aaa"/><stop offset="0.0413" stop-color="#ffa74e"/><stop offset="0.0452" stop-color="#ffba37"/><stop offset="0.0492" stop-color="#ffc130"/><stop offset="0.0511" stop-color="#ffa94b"/><stop offset="0.0531" stop-color="#ff7985"/><stop offset="0.0551" stop-color="#f654b0"/><stop offset="0.0570" stop-color="#e244c0"/><stop offset="0.0590" stop-color="#dd40c4"/><stop offset="0.1554" stop-color="#df42c2"/><stop offset="0.2242" stop-color="#ce36ce"/><stop offset="0.2773" stop-color="#d137cd"/><stop offset="0.3068" stop-color="#b022e3"/><stop offset="0.3363" stop-color="#d73cc8"/><stop offset="0.3658" stop-color="#a31beb"/><stop offset="0.3757" stop-color="#b625df"/><stop offset="0.3894" stop-color="#ff60a3"/><stop offset="0.3953" stop-color="#ff7688"/><stop offset="0.4130" stop-color="#ff9e58"/><stop offset="0.4189" stop-color="#ff9563"/><stop offset="0.4327" stop-color="#fd59ab"/><stop offset="0.4425" stop-color="#d339cb"/><stop offset="0.4504" stop-color="#c22cd8"/><stop offset="0.4602" stop-color="#c02bd9"/><stop offset="0.4976" stop-color="#eb4bb9"/><stop offset="0.5487" stop-color="#cd34d0"/><stop offset="0.5684" stop-color="#d037cd"/><stop offset="0.5743" stop-color="#de41c3"/><stop offset="0.5802" stop-color="#ff5aaa"/><stop offset="0.5900" stop-color="#ff8e6b"/><stop offset="0.5979" stop-color="#ffcb29"/><stop offset="0.6018" stop-color="#ffe617"/><stop offset="0.6058" stop-color="#fff010"/><stop offset="0.6097" stop-color="#ffe617"/><stop offset="0.6156" stop-color="#ffbe32"/><stop offset="0.6235" stop-color="#ff7b82"/><stop offset="0.6294" stop-color="#fa56ae"/><stop offset="0.6392" stop-color="#cf36ce"/><stop offset="0.6471" stop-color="#c32dd7"/><stop offset="0.7415" stop-color="#be2ada"/><stop offset="0.8280" stop-color="#890cfb"/><stop offset="1.0011" stop-color="#890cfb"/></linearGradient>
<linearGradient id="c22" x1="0" y1="0" x2="0" y2="1"><stop offset="0.0000" stop-color="#7807ff"/><stop offset="0.0138" stop-color="#870bfc"/><stop offset="0.0236" stop-color="#b123e2"/><stop offset="0.0334" stop-color="#ff5ba9"/><stop offset="0.0433" stop-color="#ff9f57"/><stop offset="0.0492" stop-color="#ffae45"/><stop offset="0.0511" stop-color="#ff995f"/><stop offset="0.0531" stop-color="#ff6e93"/><stop offset="0.0551" stop-color="#ee4db7"/><stop offset="0.0590" stop-color="#d73cc8"/><stop offset="0.1613" stop-color="#dd41c3"/><stop offset="0.2262" stop-color="#d037cd"/><stop offset="0.2852" stop-color="#d73cc8"/><stop offset="0.3147" stop-color="#b827de"/><stop offset="0.3461" stop-color="#dd40c4"/><stop offset="0.3756" stop-color="#b123e2"/><stop offset="0.4012" stop-color="#ca33d1"/><stop offset="0.4130" stop-color="#ff60a3"/><stop offset="0.4189" stop-color="#ff6998"/><stop offset="0.4287" stop-color="#ff5aaa"/><stop offset="0.4504" stop-color="#c62fd5"/><stop offset="0.4641" stop-color="#b827dd"/><stop offset="0.5172" stop-color="#fc58ac"/><stop offset="0.5703" stop-color="#f956ae"/><stop offset="0.5900" stop-color="#ff7e7f"/><stop offset="0.6018" stop-color="#ffba37"/><stop offset="0.6057" stop-color="#ffc230"/><stop offset="0.6116" stop-color="#ffb043"/><stop offset="0.6215" stop-color="#ff639f"/><stop offset="0.6293" stop-color="#c62fd5"/><stop offset="0.6372" stop-color="#9e18ee"/><stop offset="0.6451" stop-color="#8f10f7"/><stop offset="1.0010" stop-color="#890cfb"/></linearGradient>
<linearGradient id="c23" x1="0" y1="0" x2="0" y2="1"><stop offset="0.0000" stop-color="#7807ff"/><stop offset="0.0138" stop-color="#8409fe"/><stop offset="0.0236" stop-color="#a71de9"/><stop offset="0.0354" stop-color="#ff5ba9"/><stop offset="0.0433" stop-color="#ff8c6e"/><stop offset="0.0492" stop-color="#ff9a5d"/><stop offset="0.0511" stop-color="#ff8873"/><stop offset="0.0531" stop-color="#ff62a0"/><stop offset="0.0551" stop-color="#e647bd"/><stop offset="0.0590" stop-color="#d238cc"/><stop offset="0.1141" stop-color="#d037cd"/><stop offset="0.2045" stop-color="#b123e2"/><stop offset="0.2969" stop-color="#8b0dfa"/><stop offset="0.3245" stop-color="#6605ff"/><stop offset="0.3481" stop-color="#8d0ef8"/><stop offset="0.3579" stop-color="#9211f5"/><stop offset="0.3677" stop-color="#850afd"/><stop offset="0.3874" stop-color="#5404ff"/><stop offset="0.3933" stop-color="#5a04ff"/><stop offset="0.4071" stop-color="#8309fe"/><stop offset="0.4169" stop-color="#9814f2"/><stop offset="0.4307" stop-color="#a81ee8"/><stop offset="0.4444" stop-color="#a31beb"/><stop offset="0.4641" stop-color="#8309fe"/><stop offset="0.4857" stop-color="#6806ff"/><stop offset="0.5290" stop-color="#8b0df9"/><stop offset="0.5624" stop-color="#9412f4"/><stop offset="0.5722" stop-color="#a61de9"/><stop offset="0.5801" stop-color="#d63cc8"/><stop offset="0.5840" stop-color="#ff5ca8"/><stop offset="0.5919" stop-color="#ffc32f"/><stop offset="0.5939" stop-color="#ffdf1c"/><stop offset="0.5958" stop-color="#fff341"/><stop offset="0.5978" stop-color="#fffab7"/><stop offset="0.5998" stop-color="#ffffff"/><stop offset="0.6116" stop-color="#ffffff"/><stop offset="0.6135" stop-color="#fffde1"/><stop offset="0.6175" stop-color="#fff33f"/><stop offset="0.6194" stop-color="#ffe915"/><stop offset="0.6273" stop-color="#ffac48"/><stop offset="0.6391" stop-color="#ff7985"/><stop offset="0.6470" stop-color="#ff679a"/><stop offset="0.6607" stop-color="#ff5aaa"/><stop offset="0.7512" stop-color="#f351b3"/><stop offset="0.8200" stop-color="#9c17ef"/><stop offset="0.8417" stop-color="#8b0df9"/><stop offset="1.0009" stop-color="#8a0dfa"/></linearGradient>
<linearGradient id="c24" x1="0" y1="0" x2="0" y2="1"><stop offset="0.0000" stop-color="#7907ff"/><stop offset="0.0118" stop-color="#7f08ff"/><stop offset="0.0236" stop-color="#9e18ee"/><stop offset="0.0295" stop-color="#c12cd8"/><stop offset="0.0374" stop-color="#fd59ab"/><stop offset="0.0433" stop-color="#ff7a84"/><stop offset="0.0492" stop-color="#ff8774"/><stop offset="0.0511" stop-color="#ff7787"/><stop offset="0.0531" stop-color="#fc57ad"/><stop offset="0.0551" stop-color="#de41c3"/><stop offset="0.0590" stop-color="#cd34d0"/><stop offset="0.1121" stop-color="#cb33d1"/><stop offset="0.2084" stop-color="#a21aeb"/><stop offset="0.2792" stop-color="#6c06ff"/><stop offset="0.3067" stop-color="#6706ff"/><stop offset="0.3323" stop-color="#4302ff"/><stop offset="0.3421" stop-color="#4803ff"/><stop offset="0.3657" stop-color="#7707ff"/><stop offset="0.3874" stop-color="#880cfb"/><stop offset="0.4031" stop-color="#c32dd7"/><stop offset="0.4562" stop-color="#9714f2"/><stop offset="0.4700" stop-color="#8008ff"/><stop offset="0.4916" stop-color="#4d03ff"/><stop offset="0.5093" stop-color="#3501ff"/><stop offset="0.5506" stop-color="#3c02ff"/><stop offset="0.5624" stop-color="#4803ff"/><stop offset="0.5683" stop-color="#5804ff"/><stop offset="0.5742" stop-color="#7f08ff"/><stop offset="0.5801" stop-color="#b927dd"/><stop offset="0.5840" stop-color="#f956ae"/><stop offset="0.5899" stop-color="#ffc32f"/><stop offset="0.5919" stop-color="#ffeb13"/><stop offset="0.5938" stop-color="#fffab4"/><stop offset="0.5958" stop-color="#ffffff"/><stop offset="0.6214" stop-color="#ffffff"/><stop offset="0.6273" stop-color="#fff120"/><stop offset="0.6292" stop-color="#ffe716"/><stop offset="0.6410" stop-color="#ffa94b"/><stop offset="0.6509" stop-color="#ff8477"/><stop offset="0.6607" stop-color="#ff6998"/><stop offset="0.6725" stop-color="#ff5aaa"/><stop offset="0.7551" stop-color="#f452b2"/><stop offset="0.8239" stop-color="#9e18ee"/><stop offset="0.8455" stop-color="#8c0ef9"/><stop offset="1.0009" stop-color="#8b0dfa"/></linearGradient>
<linearGradient id="c25" x1="0" y1="0" x2="0" y2="1"><stop offset="0.0000" stop-color="#7907ff"/><stop offset="0.0118" stop-color="#7d08ff"/><stop offset="0.0216" stop-color="#8f0ff7"/><stop offset="0.0315" stop-color="#c12cd8"/><stop offset="0.0413" stop-color="#ff5ea5"/><stop offset="0.0492" stop-color="#ff748b"/><stop offset="0.0511" stop-color="#ff679b"/><stop offset="0.0551" stop-color="#d63bc9"/><stop offset="0.0590" stop-color="#c831d3"/><stop offset="0.1435" stop-color="#c42ed6"/><stop offset="0.3126" stop-color="#9f18ed"/><stop offset="0.3480" stop-color="#850afd"/><stop offset="0.3677" stop-color="#a61de9"/><stop offset="0.3775" stop-color="#cb33d1"/><stop offset="0.3893" stop-color="#ff5fa4"/><stop offset="0.3972" stop-color="#ff7a83"/><stop offset="0.4070" stop-color="#ff8478"/><stop offset="0.4149" stop-color="#ff7d80"/><stop offset="0.4267" stop-color="#ff5aaa"/><stop offset="0.4385" stop-color="#da3ec6"/><stop offset="0.4483" stop-color="#c931d3"/><stop offset="0.4817" stop-color="#b928dd"/><stop offset="0.5250" stop-color="#9412f4"/><stop offset="0.5604" stop-color="#9312f5"/><stop offset="0.5722" stop-color="#a81ee8"/><stop offset="0.5800" stop-color="#da3ec6"/><stop offset="0.5840" stop-color="#ff5ca8"/><stop offset="0.5918" stop-color="#ffb33f"/><stop offset="0.5958" stop-color="#ffe219"/><stop offset="0.5977" stop-color="#fff237"/><stop offset="0.5997" stop-color="#fff891"/><stop offset="0.6016" stop-color="#fffcd5"/><stop offset="0.6036" stop-color="#ffffff"/><stop offset="0.6075" stop-color="#ffffff"/><stop offset="0.6095" stop-color="#fffcd5"/><stop offset="0.6154" stop-color="#ffec13"/><stop offset="0.6233" stop-color="#ffa84c"/><stop offset="0.6292" stop-color="#ff8478"/><stop offset="0.6390" stop-color="#ff60a3"/><stop offset="0.6469" stop-color="#f754b0"/><stop offset="0.7550" stop-color="#f04fb5"/><stop offset="0.8514" stop-color="#8d0ef8"/><stop offset="1.0008" stop-color="#8c0ef9"/></linearGradient>
<linearGradient id="c26" x1="0" y1="0" x2="0" y2="1"><stop offset="0.0000" stop-color="#7907ff"/><stop offset="0.0138" stop-color="#7d08ff"/><stop offset="0.0236" stop-color="#8f0ff7"/><stop offset="0.0315" stop-color="#b224e1"/><stop offset="0.0452" stop-color="#ff5ba9"/><stop offset="0.0492" stop-color="#ff60a3"/><stop offset="0.0511" stop-color="#fa56ae"/><stop offset="0.0550" stop-color="#ce35cf"/><stop offset="0.0590" stop-color="#c32dd7"/><stop offset="0.3205" stop-color="#ca32d2"/><stop offset="0.3578" stop-color="#b424e0"/><stop offset="0.3716" stop-color="#c932d2"/><stop offset="0.3853" stop-color="#ff5fa4"/><stop offset="0.3912" stop-color="#ff718e"/><stop offset="0.4030" stop-color="#ff7886"/><stop offset="0.4148" stop-color="#ff8d6d"/><stop offset="0.4306" stop-color="#ff5ea6"/><stop offset="0.4404" stop-color="#e345bf"/><stop offset="0.4522" stop-color="#d037cd"/><stop offset="0.5033" stop-color="#f150b4"/><stop offset="0.5642" stop-color="#ea4aba"/><stop offset="0.5741" stop-color="#f653b1"/><stop offset="0.5898" stop-color="#ff7985"/><stop offset="0.6016" stop-color="#ffb240"/><stop offset="0.6055" stop-color="#ffba37"/><stop offset="0.6114" stop-color="#ffa94b"/><stop offset="0.6213" stop-color="#ff5ea5"/><stop offset="0.6272" stop-color="#cf36ce"/><stop offset="0.6331" stop-color="#a91ee7"/><stop offset="0.6449" stop-color="#8c0ef9"/><stop offset="1.0007" stop-color="#8d0ef8"/></linearGradient>
<linearGradient id="c27" x1="0" y1="0" x2="0" y2="1"><stop offset="0.0000" stop-color="#7907ff"/><stop offset="0.0236" stop-color="#890cfb"/><stop offset="0.0295" stop-color="#9c17ef"/><stop offset="0.0432" stop-color="#e445bf"/><stop offset="0.0491" stop-color="#f04fb5"/><stop offset="0.0550" stop-color="#c730d4"/><stop offset="0.0590" stop-color="#be2ada"/><stop offset="0.3342" stop-color="#ae21e4"/><stop offset="0.3696" stop-color="#9915f1"/><stop offset="0.4010" stop-color="#b324e1"/><stop offset="0.4168" stop-color="#d93ec6"/><stop offset="0.4463" stop-color="#af21e4"/><stop offset="0.4620" stop-color="#a51ce9"/><stop offset="0.5190" stop-color="#d239cb"/><stop offset="0.5642" stop-color="#d83dc7"/><stop offset="0.5721" stop-color="#e446be"/><stop offset="0.5780" stop-color="#fd59ab"/><stop offset="0.5878" stop-color="#ff8e6b"/><stop offset="0.5937" stop-color="#ffbf32"/><stop offset="0.5976" stop-color="#ffe418"/><stop offset="0.5996" stop-color="#fff22a"/><stop offset="0.6016" stop-color="#fff668"/><stop offset="0.6035" stop-color="#fff88f"/><stop offset="0.6055" stop-color="#fff99d"/><stop offset="0.6075" stop-color="#fff88f"/><stop offset="0.6094" stop-color="#fff668"/><stop offset="0.6114" stop-color="#fff22f"/><stop offset="0.6134" stop-color="#ffe815"/><stop offset="0.6173" stop-color="#ffc82b"/><stop offset="0.6232" stop-color="#ff985f"/><stop offset="0.6291" stop-color="#ff7689"/><stop offset="0.6369" stop-color="#fe59ab"/><stop offset="0.6468" stop-color="#ea4aba"/><stop offset="0.7608" stop-color="#e345bf"/><stop offset="0.8611" stop-color="#8f10f7"/><stop offset="1.0006" stop-color="#8e0ff8"/></linearGradient>
<linearGradient id="c28" x1="0" y1="0" x2="0" y2="1"><stop offset="0.0000" stop-color="#7907ff"/><stop offset="0.0157" stop-color="#7c07ff"/><stop offset="0.0256" stop-color="#890cfb"/><stop offset="0.0432" stop-color="#d238cc"/><stop offset="0.0491" stop-color="#dd40c4"/><stop offset="0.0550" stop-color="#bf2bda"/><stop offset="0.0590" stop-color="#b827de"/><stop offset="0.1120" stop-color="#b928dd"/><stop offset="0.2379" stop-color="#8208ff"/><stop offset="0.2831" stop-color="#6305ff"/><stop offset="0.3499" stop-color="#5904ff"/><stop offset="0.3755" stop-color="#4603ff"/><stop offset="0.3872" stop-color="#4e03ff"/><stop offset="0.3990" stop-color="#9010f6"/><stop offset="0.4049" stop-color="#9e18ee"/><stop offset="0.4344" stop-color="#9513f3"/><stop offset="0.4501" stop-color="#8208ff"/><stop offset="0.4737" stop-color="#5904ff"/><stop offset="0.4934" stop-color="#4903ff"/><stop offset="0.5563" stop-color="#5104ff"/><stop offset="0.5642" stop-color="#5904ff"/><stop offset="0.5701" stop-color="#6c06ff"/><stop offset="0.5760" stop-color="#9412f4"/><stop offset="0.5819" stop-color="#d83dc7"/><stop offset="0.5838" stop-color="#fa56ae"/><stop offset="0.5897" stop-color="#ffc130"/><stop offset="0.5917" stop-color="#ffe815"/><stop offset="0.5936" stop-color="#fff9a2"/><stop offset="0.5956" stop-color="#ffffff"/><stop offset="0.6192" stop-color="#ffffff"/><stop offset="0.6212" stop-color="#fffef6"/><stop offset="0.6251" stop-color="#fff44d"/><stop offset="0.6271" stop-color="#ffee11"/><stop offset="0.6389" stop-color="#ffae45"/><stop offset="0.6487" stop-color="#ff8873"/><stop offset="0.6605" stop-color="#ff6899"/><stop offset="0.6723" stop-color="#fe59ab"/><stop offset="0.7666" stop-color="#f452b2"/><stop offset="0.8433" stop-color="#a119ec"/><stop offset="0.8669" stop-color="#9010f6"/><stop offset="1.0006" stop-color="#8f10f7"/></linearGradient>
<linearGradient id="c29" x1="0" y1="0" x2="0" y2="1"><stop offset="0.0000" stop-color="#7b07ff"/><stop offset="0.0256" stop-color="#880bfc"/><stop offset="0.0432" stop-color="#c12cd8"/><stop offset="0.0491" stop-color="#ca32d2"/><stop offset="0.0590" stop-color="#b223e2"/><stop offset="0.1022" stop-color="#b827de"/><stop offset="0.2536" stop-color="#8208ff"/><stop offset="0.3165" stop-color="#6505ff"/><stop offset="0.3538" stop-color="#6105ff"/><stop offset="0.3676" stop-color="#6b06ff"/><stop offset="0.3774" stop-color="#8409fe"/><stop offset="0.3872" stop-color="#ad21e4"/><stop offset="0.3990" stop-color="#fa57ad"/><stop offset="0.4049" stop-color="#ff639f"/><stop offset="0.4128" stop-color="#ff5ca7"/><stop offset="0.4403" stop-color="#c12cd8"/><stop offset="0.4619" stop-color="#9614f2"/><stop offset="0.4757" stop-color="#8309fe"/><stop offset="0.5052" stop-color="#5904ff"/><stop offset="0.5504" stop-color="#4a03ff"/><stop offset="0.5622" stop-color="#5004ff"/><stop offset="0.5700" stop-color="#6505ff"/><stop offset="0.5759" stop-color="#8c0ef9"/><stop offset="0.5818" stop-color="#cc34d0"/><stop offset="0.5857" stop-color="#ff669c"/><stop offset="0.5916" stop-color="#ffca2a"/><stop offset="0.5936" stop-color="#ffeb13"/><stop offset="0.5975" stop-color="#ffffff"/><stop offset="0.6152" stop-color="#fffffa"/><stop offset="0.6192" stop-color="#fff457"/><stop offset="0.6211" stop-color="#ffed12"/><stop offset="0.6290" stop-color="#ffb53d"/><stop offset="0.6408" stop-color="#ff8379"/><stop offset="0.6526" stop-color="#ff6998"/><stop offset="0.6663" stop-color="#ff5aaa"/><stop offset="0.7685" stop-color="#f552b2"/><stop offset="0.8707" stop-color="#9211f5"/><stop offset="1.0005" stop-color="#9010f6"/></linearGradient>
<linearGradient id="c30" x1="0" y1="0" x2="0" y2="1"><stop offset="0.0000" stop-color="#8108ff"/><stop offset="0.0256" stop-color="#880cfb"/><stop offset="0.0491" stop-color="#b626df"/><stop offset="0.0570" stop-color="#ae21e4"/><stop offset="0.0825" stop-color="#b626df"/><stop offset="0.1140" stop-color="#af22e3"/><stop offset="0.1592" stop-color="#c12cd8"/><stop offset="0.2024" stop-color="#b424e1"/><stop offset="0.2614" stop-color="#c52ed6"/><stop offset="0.3597" stop-color="#bf2bd9"/><stop offset="0.3734" stop-color="#d73cc8"/><stop offset="0.3833" stop-color="#ff5fa3"/><stop offset="0.3931" stop-color="#ff8873"/><stop offset="0.4147" stop-color="#ffaf44"/><stop offset="0.4403" stop-color="#ff5fa4"/><stop offset="0.4540" stop-color="#e849bb"/><stop offset="0.5621" stop-color="#e345bf"/><stop offset="0.5759" stop-color="#fb57ad"/><stop offset="0.5916" stop-color="#ff8a70"/><stop offset="0.5995" stop-color="#ffbb36"/><stop offset="0.6053" stop-color="#ffcd28"/><stop offset="0.6112" stop-color="#ffbb36"/><stop offset="0.6230" stop-color="#ff5ba9"/><stop offset="0.6329" stop-color="#b626df"/><stop offset="0.6447" stop-color="#9614f2"/><stop offset="1.0004" stop-color="#9111f5"/></linearGradient>
<linearGradient id="c31" x1="0" y1="0" x2="0" y2="1"><stop offset="0.0000" stop-color="#870bfc"/><stop offset="0.0255" stop-color="#8a0dfa"/><stop offset="0.0452" stop-color="#a61ce9"/><stop offset="0.0707" stop-color="#b324e1"/><stop offset="0.1061" stop-color="#a81ee7"/><stop offset="0.1474" stop-color="#bc29db"/><stop offset="0.1906" stop-color="#b123e2"/><stop offset="0.2358" stop-color="#bd29db"/><stop offset="0.3616" stop-color="#c02bd9"/><stop offset="0.3754" stop-color="#cd35cf"/><stop offset="0.3891" stop-color="#ee4db7"/><stop offset="0.4029" stop-color="#f14fb5"/><stop offset="0.4068" stop-color="#fd59ab"/><stop offset="0.4166" stop-color="#ff6c95"/><stop offset="0.4265" stop-color="#fd59ab"/><stop offset="0.4383" stop-color="#e043c1"/><stop offset="0.4559" stop-color="#cc34d0"/><stop offset="0.5129" stop-color="#eb4bb9"/><stop offset="0.5640" stop-color="#f04fb5"/><stop offset="0.5739" stop-color="#ff5aaa"/><stop offset="0.5876" stop-color="#ff8477"/><stop offset="0.5935" stop-color="#ff9f57"/><stop offset="0.5994" stop-color="#ffc92b"/><stop offset="0.6053" stop-color="#ffdd1d"/><stop offset="0.6092" stop-color="#ffd423"/><stop offset="0.6132" stop-color="#ffbc35"/><stop offset="0.6250" stop-color="#fd58ac"/><stop offset="0.6289" stop-color="#de41c3"/><stop offset="0.6367" stop-color="#b726de"/><stop offset="0.6446" stop-color="#a71de8"/><stop offset="1.0003" stop-color="#9311f5"/></linearGradient>
<linearGradient id="c32" x1="0" y1="0" x2="0" y2="1"><stop offset="0.0000" stop-color="#8d0ef8"/><stop offset="0.0275" stop-color="#8d0ef8"/><stop offset="0.0491" stop-color="#aa1fe7"/><stop offset="0.0648" stop-color="#b022e2"/><stop offset="0.0963" stop-color="#a31beb"/><stop offset="0.1317" stop-color="#a81ee7"/><stop offset="0.1710" stop-color="#8c0ef9"/><stop offset="0.2142" stop-color="#9111f6"/><stop offset="0.2574" stop-color="#6605ff"/><stop offset="0.2771" stop-color="#5c05ff"/><stop offset="0.3262" stop-color="#6105ff"/><stop offset="0.3852" stop-color="#5504ff"/><stop offset="0.4028" stop-color="#8c0df9"/><stop offset="0.4815" stop-color="#6505ff"/><stop offset="0.5561" stop-color="#5d05ff"/><stop offset="0.5640" stop-color="#6205ff"/><stop offset="0.5699" stop-color="#7207ff"/><stop offset="0.5758" stop-color="#9513f3"/><stop offset="0.5817" stop-color="#d43aca"/><stop offset="0.5836" stop-color="#f351b3"/><stop offset="0.5856" stop-color="#ff6d93"/><stop offset="0.5915" stop-color="#ffd622"/><stop offset="0.5935" stop-color="#fff33b"/><stop offset="0.5954" stop-color="#fffdd8"/><stop offset="0.5974" stop-color="#ffffff"/><stop offset="0.6170" stop-color="#ffffff"/><stop offset="0.6229" stop-color="#ffef11"/><stop offset="0.6308" stop-color="#ffbc35"/><stop offset="0.6426" stop-color="#ff8971"/><stop offset="0.6544" stop-color="#ff6c94"/><stop offset="0.6681" stop-color="#ff5aaa"/><stop offset="0.7743" stop-color="#f552b2"/><stop offset="0.8784" stop-color="#9513f3"/><stop offset="1.0002" stop-color="#9312f4"/></linearGradient>
<linearGradient id="c33" x1="0" y1="0" x2="0" y2="1"><stop offset="0.0000" stop-color="#9211f5"/><stop offset="0.0275" stop-color="#8e0ff7"/><stop offset="0.0472" stop-color="#9f19ed"/><stop offset="0.0491" stop-color="#ac20e5"/><stop offset="0.0531" stop-color="#ae21e4"/><stop offset="0.0884" stop-color="#9f18ed"/><stop offset="0.1199" stop-color="#aa1fe6"/><stop offset="0.1592" stop-color="#8a0dfa"/><stop offset="0.2044" stop-color="#9111f6"/><stop offset="0.2515" stop-color="#6405ff"/><stop offset="0.3026" stop-color="#6005ff"/><stop offset="0.3616" stop-color="#4b03ff"/><stop offset="0.3792" stop-color="#6105ff"/><stop offset="0.3871" stop-color="#7e08ff"/><stop offset="0.3989" stop-color="#c02cd9"/><stop offset="0.4048" stop-color="#cc34d0"/><stop offset="0.4539" stop-color="#8208ff"/><stop offset="0.5011" stop-color="#5104ff"/><stop offset="0.5541" stop-color="#4202ff"/><stop offset="0.5639" stop-color="#4a03ff"/><stop offset="0.5698" stop-color="#5d05ff"/><stop offset="0.5757" stop-color="#890cfb"/><stop offset="0.5816" stop-color="#cf36ce"/><stop offset="0.5836" stop-color="#f14fb5"/><stop offset="0.5856" stop-color="#ff6f91"/><stop offset="0.5895" stop-color="#ffb938"/><stop offset="0.5915" stop-color="#ffe01b"/><stop offset="0.5934" stop-color="#fff77c"/><stop offset="0.5954" stop-color="#ffffff"/><stop offset="0.6190" stop-color="#ffffff"/><stop offset="0.6209" stop-color="#fffbc3"/><stop offset="0.6249" stop-color="#fff11d"/><stop offset="0.6268" stop-color="#ffe418"/><stop offset="0.6386" stop-color="#ffa74e"/><stop offset="0.6484" stop-color="#ff8379"/><stop offset="0.6602" stop-color="#ff669b"/><stop offset="0.6720" stop-color="#fe59ab"/><stop offset="0.7762" stop-color="#f452b2"/><stop offset="0.8803" stop-color="#9513f3"/><stop offset="1.0002" stop-color="#9412f4"/></linearGradient>
<linearGradient id="c34" x1="0" y1="0" x2="0" y2="1"><stop offset="0.0000" stop-color="#9312f5"/><stop offset="0.0216" stop-color="#8f0ff7"/><stop offset="0.0472" stop-color="#9f19ed"/><stop offset="0.0491" stop-color="#ab1fe6"/><stop offset="0.0806" stop-color="#9a16f0"/><stop offset="0.1100" stop-color="#ad20e5"/><stop offset="0.1474" stop-color="#a11aec"/><stop offset="0.1827" stop-color="#b525e0"/><stop offset="0.2260" stop-color="#a11aec"/><stop offset="0.2751" stop-color="#bd2adb"/><stop offset="0.3301" stop-color="#a91ee7"/><stop offset="0.3596" stop-color="#aa1fe7"/><stop offset="0.3733" stop-color="#c22dd7"/><stop offset="0.3851" stop-color="#ff5aaa"/><stop offset="0.3949" stop-color="#ff8478"/><stop offset="0.4146" stop-color="#ffab49"/><stop offset="0.4185" stop-color="#ffa550"/><stop offset="0.4401" stop-color="#fd59ab"/><stop offset="0.4578" stop-color="#d43aca"/><stop offset="0.4833" stop-color="#ca33d1"/><stop offset="0.5600" stop-color="#d73cc8"/><stop offset="0.5698" stop-color="#e144c0"/><stop offset="0.5777" stop-color="#ff5ba9"/><stop offset="0.5894" stop-color="#ff9464"/><stop offset="0.5953" stop-color="#ffc031"/><stop offset="0.6012" stop-color="#ffed12"/><stop offset="0.6052" stop-color="#fff232"/><stop offset="0.6091" stop-color="#ffed12"/><stop offset="0.6111" stop-color="#ffe21a"/><stop offset="0.6150" stop-color="#ffc42e"/><stop offset="0.6287" stop-color="#ff5ea5"/><stop offset="0.6386" stop-color="#db3fc5"/><stop offset="0.6464" stop-color="#ce35cf"/><stop offset="0.7761" stop-color="#c932d2"/><stop offset="0.8842" stop-color="#9513f3"/><stop offset="1.0001" stop-color="#9513f3"/></linearGradient>
<linearGradient id="c35" x1="0" y1="0" x2="0" y2="1"><stop offset="0.0000" stop-color="#9010f7"/><stop offset="0.0138" stop-color="#8e0ff8"/><stop offset="0.0491" stop-color="#a51cea"/><stop offset="0.0727" stop-color="#9513f3"/><stop offset="0.1041" stop-color="#aa1fe6"/><stop offset="0.1356" stop-color="#9d17ef"/><stop offset="0.1709" stop-color="#b827de"/><stop offset="0.2102" stop-color="#a21aeb"/><stop offset="0.2574" stop-color="#c32dd7"/><stop offset="0.3124" stop-color="#b424e0"/><stop offset="0.3595" stop-color="#c02bd9"/><stop offset="0.3733" stop-color="#d53aca"/><stop offset="0.3851" stop-color="#ff61a2"/><stop offset="0.3910" stop-color="#ff7688"/><stop offset="0.4008" stop-color="#ff8478"/><stop offset="0.4145" stop-color="#ffa64f"/><stop offset="0.4185" stop-color="#ffa254"/><stop offset="0.4401" stop-color="#ff5ba8"/><stop offset="0.4578" stop-color="#db3fc5"/><stop offset="0.4754" stop-color="#d63bc9"/><stop offset="0.5619" stop-color="#f14fb5"/><stop offset="0.5737" stop-color="#ff5ba9"/><stop offset="0.5894" stop-color="#ff7e7f"/><stop offset="0.6012" stop-color="#ffb73a"/><stop offset="0.6051" stop-color="#ffbf31"/><stop offset="0.6110" stop-color="#ffae46"/><stop offset="0.6208" stop-color="#ff61a1"/><stop offset="0.6287" stop-color="#c42ed6"/><stop offset="0.6365" stop-color="#9c17ef"/><stop offset="0.6444" stop-color="#8e0ff8"/><stop offset="1.0000" stop-color="#9513f3"/></linearGradient>
<linearGradient id="c36" x1="0" y1="0" x2="0" y2="1"><stop offset="0.0000" stop-color="#8b0df9"/><stop offset="0.0334" stop-color="#a11aec"/><stop offset="0.0668" stop-color="#9110f6"/><stop offset="0.0963" stop-color="#a61de9"/><stop offset="0.1277" stop-color="#8d0ef8"/><stop offset="0.1591" stop-color="#9d17ef"/><stop offset="0.1984" stop-color="#8308ff"/><stop offset="0.2397" stop-color="#9110f6"/><stop offset="0.2907" stop-color="#6a06ff"/><stop offset="0.3772" stop-color="#890cfb"/><stop offset="0.3870" stop-color="#9312f5"/><stop offset="0.4027" stop-color="#b626df"/><stop offset="0.4125" stop-color="#bb28dc"/><stop offset="0.4617" stop-color="#9412f4"/><stop offset="0.5618" stop-color="#870bfc"/><stop offset="0.5717" stop-color="#9a16f0"/><stop offset="0.5795" stop-color="#cd35cf"/><stop offset="0.5835" stop-color="#fa56ae"/><stop offset="0.5913" stop-color="#ffbd33"/><stop offset="0.5933" stop-color="#ffd91f"/><stop offset="0.5952" stop-color="#fff124"/><stop offset="0.5972" stop-color="#fff897"/><stop offset="0.5992" stop-color="#fffff8"/><stop offset="0.6011" stop-color="#ffffff"/><stop offset="0.6110" stop-color="#ffffff"/><stop offset="0.6129" stop-color="#fffbbc"/><stop offset="0.6169" stop-color="#fff11a"/><stop offset="0.6188" stop-color="#ffe11a"/><stop offset="0.6247" stop-color="#ffb142"/><stop offset="0.6326" stop-color="#ff8971"/><stop offset="0.6424" stop-color="#ff6998"/><stop offset="0.6561" stop-color="#ff5aaa"/><stop offset="0.7760" stop-color="#f452b2"/><stop offset="0.8880" stop-color="#9412f4"/><stop offset="0.9233" stop-color="#8c0df9"/><stop offset="1.0019" stop-color="#9513f3"/></linearGradient>
<linearGradient id="c37" x1="0" y1="0" x2="0" y2="1"><stop offset="0.0000" stop-color="#880cfb"/><stop offset="0.0255" stop-color="#a019ed"/><stop offset="0.0570" stop-color="#8b0df9"/><stop offset="0.0884" stop-color="#a31beb"/><stop offset="0.1198" stop-color="#880bfc"/><stop offset="0.1532" stop-color="#9111f6"/><stop offset="0.1866" stop-color="#6e06ff"/><stop offset="0.2220" stop-color="#8309fe"/><stop offset="0.2593" stop-color="#4e03ff"/><stop offset="0.2730" stop-color="#4503ff"/><stop offset="0.3182" stop-color="#5c05ff"/><stop offset="0.3850" stop-color="#4e03ff"/><stop offset="0.4027" stop-color="#8f0ff7"/><stop offset="0.4164" stop-color="#8108ff"/><stop offset="0.4695" stop-color="#6e06ff"/><stop offset="0.5461" stop-color="#4002ff"/><stop offset="0.5618" stop-color="#4102ff"/><stop offset="0.5697" stop-color="#5704ff"/><stop offset="0.5756" stop-color="#850afd"/><stop offset="0.5814" stop-color="#cf36ce"/><stop offset="0.5834" stop-color="#f351b3"/><stop offset="0.5854" stop-color="#ff728d"/><stop offset="0.5893" stop-color="#ffc130"/><stop offset="0.5913" stop-color="#ffea14"/><stop offset="0.5932" stop-color="#fffab3"/><stop offset="0.5952" stop-color="#ffffff"/><stop offset="0.6207" stop-color="#ffffff"/><stop offset="0.6266" stop-color="#fff124"/><stop offset="0.6286" stop-color="#ffe716"/><stop offset="0.6404" stop-color="#ffaa4a"/><stop offset="0.6502" stop-color="#ff8477"/><stop offset="0.6600" stop-color="#ff6998"/><stop offset="0.6718" stop-color="#ff5aaa"/><stop offset="0.7779" stop-color="#f553b1"/><stop offset="0.8702" stop-color="#9e18ee"/><stop offset="0.9154" stop-color="#890cfb"/><stop offset="1.0018" stop-color="#9513f3"/></linearGradient>
<linearGradient id="c38" x1="0" y1="0" x2="0" y2="1"><stop offset="0.0000" stop-color="#890cfb"/><stop offset="0.0216" stop-color="#9d17ef"/><stop offset="0.0530" stop-color="#870bfc"/><stop offset="0.0805" stop-color="#9f18ed"/><stop offset="0.1100" stop-color="#870bfc"/><stop offset="0.1434" stop-color="#9c17ef"/><stop offset="0.1768" stop-color="#8208ff"/><stop offset="0.2121" stop-color="#9714f2"/><stop offset="0.2514" stop-color="#7a07ff"/><stop offset="0.2986" stop-color="#9111f6"/><stop offset="0.3594" stop-color="#7a07ff"/><stop offset="0.3752" stop-color="#9111f6"/><stop offset="0.3968" stop-color="#f250b4"/><stop offset="0.4027" stop-color="#ff5da6"/><stop offset="0.4125" stop-color="#ff649e"/><stop offset="0.4203" stop-color="#fe59ab"/><stop offset="0.4459" stop-color="#b927dd"/><stop offset="0.4636" stop-color="#a31beb"/><stop offset="0.5618" stop-color="#9c17ef"/><stop offset="0.5716" stop-color="#ae21e4"/><stop offset="0.5794" stop-color="#dd41c3"/><stop offset="0.5834" stop-color="#ff5ea5"/><stop offset="0.5912" stop-color="#ffb73a"/><stop offset="0.5952" stop-color="#ffe815"/><stop offset="0.5971" stop-color="#fff457"/><stop offset="0.5991" stop-color="#fffab3"/><stop offset="0.6010" stop-color="#fffff9"/><stop offset="0.6030" stop-color="#ffffff"/><stop offset="0.6089" stop-color="#fffffa"/><stop offset="0.6109" stop-color="#fffbbb"/><stop offset="0.6148" stop-color="#fff121"/><stop offset="0.6168" stop-color="#ffe21a"/><stop offset="0.6246" stop-color="#ffa154"/><stop offset="0.6305" stop-color="#ff827a"/><stop offset="0.6403" stop-color="#ff61a2"/><stop offset="0.6482" stop-color="#fb57ad"/><stop offset="0.7778" stop-color="#f250b4"/><stop offset="0.8701" stop-color="#9f18ed"/><stop offset="0.9173" stop-color="#850afd"/><stop offset="1.0017" stop-color="#9513f3"/></linearGradient>
<linearGradient id="c39" x1="0" y1="0" x2="0" y2="1"><stop offset="0.0000" stop-color="#8b0dfa"/><stop offset="0.0177" stop-color="#9814f2"/><stop offset="0.0452" stop-color="#8208ff"/><stop offset="0.0746" stop-color="#9a16f0"/><stop offset="0.1041" stop-color="#8309fe"/><stop offset="0.1355" stop-color="#a21aeb"/><stop offset="0.1669" stop-color="#9312f4"/><stop offset="0.2023" stop-color="#aa1fe6"/><stop offset="0.2357" stop-color="#9c17ef"/><stop offset="0.2809" stop-color="#c42ed6"/><stop offset="0.3260" stop-color="#b022e3"/><stop offset="0.3575" stop-color="#b525e0"/><stop offset="0.3712" stop-color="#cc34d0"/><stop offset="0.3830" stop-color="#ff60a3"/><stop offset="0.3928" stop-color="#ff906a"/><stop offset="0.4144" stop-color="#ffc130"/><stop offset="0.4183" stop-color="#ffba37"/><stop offset="0.4439" stop-color="#fd59ab"/><stop offset="0.4537" stop-color="#e445bf"/><stop offset="0.4655" stop-color="#d73cc8"/><stop offset="0.5696" stop-color="#fb57ad"/><stop offset="0.5912" stop-color="#ff827a"/><stop offset="0.6010" stop-color="#ffb33f"/><stop offset="0.6049" stop-color="#ffbb36"/><stop offset="0.6108" stop-color="#ffaa4a"/><stop offset="0.6206" stop-color="#ff5fa4"/><stop offset="0.6265" stop-color="#d037cd"/><stop offset="0.6324" stop-color="#aa1fe6"/><stop offset="0.6442" stop-color="#8c0ef9"/><stop offset="0.7542" stop-color="#880cfb"/><stop offset="0.8720" stop-color="#9513f3"/><stop offset="0.9231" stop-color="#7d08ff"/><stop offset="0.9604" stop-color="#9312f5"/><stop offset="1.0017" stop-color="#9513f3"/></linearGradient>
<linearGradient id="c40" x1="0" y1="0" x2="0" y2="1"><stop offset="0.0000" stop-color="#8d0ef9"/><stop offset="0.0137" stop-color="#9312f5"/><stop offset="0.0393" stop-color="#7c07ff"/><stop offset="0.0687" stop-color="#9613f3"/><stop offset="0.0982" stop-color="#7d08ff"/><stop offset="0.1277" stop-color="#9915f1"/><stop offset="0.1591" stop-color="#860afc"/><stop offset="0.1905" stop-color="#9e18ee"/><stop offset="0.2278" stop-color="#8a0dfa"/><stop offset="0.2651" stop-color="#ab1fe6"/><stop offset="0.3044" stop-color="#9915f1"/><stop offset="0.3260" stop-color="#9d17ef"/><stop offset="0.3594" stop-color="#ae21e4"/><stop offset="0.3731" stop-color="#c02bd9"/><stop offset="0.3928" stop-color="#fe59ab"/><stop offset="0.4144" stop-color="#ff7d80"/><stop offset="0.4301" stop-color="#ff5ba9"/><stop offset="0.4458" stop-color="#d63bc9"/><stop offset="0.4596" stop-color="#c42ed6"/><stop offset="0.4812" stop-color="#c02bd9"/><stop offset="0.5617" stop-color="#d339cb"/><stop offset="0.5715" stop-color="#e244c0"/><stop offset="0.5774" stop-color="#fc58ac"/><stop offset="0.5872" stop-color="#ff8c6e"/><stop offset="0.5931" stop-color="#ffba37"/><stop offset="0.5990" stop-color="#ffee11"/><stop offset="0.6010" stop-color="#fff345"/><stop offset="0.6029" stop-color="#fff66b"/><stop offset="0.6049" stop-color="#fff778"/><stop offset="0.6068" stop-color="#fff66b"/><stop offset="0.6088" stop-color="#fff345"/><stop offset="0.6108" stop-color="#ffef10"/><stop offset="0.6167" stop-color="#ffc130"/><stop offset="0.6284" stop-color="#ff6f91"/><stop offset="0.6363" stop-color="#f653b1"/><stop offset="0.6461" stop-color="#e244c0"/><stop offset="0.7777" stop-color="#da3fc5"/><stop offset="0.9211" stop-color="#7607ff"/><stop offset="0.9584" stop-color="#9312f4"/><stop offset="1.0016" stop-color="#9513f3"/></linearGradient>
<linearGradient id="c41" x1="0" y1="0" x2="0" y2="1"><stop offset="0.0000" stop-color="#8d0ef8"/><stop offset="0.0118" stop-color="#8d0ef8"/><stop offset="0.0334" stop-color="#7507ff"/><stop offset="0.0609" stop-color="#9110f6"/><stop offset="0.0923" stop-color="#7707ff"/><stop offset="0.1218" stop-color="#8d0ef8"/><stop offset="0.1512" stop-color="#6105ff"/><stop offset="0.1846" stop-color="#7907ff"/><stop offset="0.2160" stop-color="#5504ff"/><stop offset="0.2533" stop-color="#6205ff"/><stop offset="0.2906" stop-color="#3601ff"/><stop offset="0.3397" stop-color="#5804ff"/><stop offset="0.3849" stop-color="#5404ff"/><stop offset="0.4026" stop-color="#9010f6"/><stop offset="0.4183" stop-color="#8208ff"/><stop offset="0.5479" stop-color="#4102ff"/><stop offset="0.5616" stop-color="#4202ff"/><stop offset="0.5695" stop-color="#5704ff"/><stop offset="0.5754" stop-color="#8409fe"/><stop offset="0.5813" stop-color="#cc34d0"/><stop offset="0.5832" stop-color="#f04eb6"/><stop offset="0.5852" stop-color="#ff6f91"/><stop offset="0.5891" stop-color="#ffbc35"/><stop offset="0.5911" stop-color="#ffe418"/><stop offset="0.5931" stop-color="#fff894"/><stop offset="0.5950" stop-color="#ffffff"/><stop offset="0.6186" stop-color="#ffffff"/><stop offset="0.6205" stop-color="#fffee8"/><stop offset="0.6245" stop-color="#fff33f"/><stop offset="0.6264" stop-color="#ffeb13"/><stop offset="0.6382" stop-color="#ffac47"/><stop offset="0.6480" stop-color="#ff8775"/><stop offset="0.6598" stop-color="#ff689a"/><stop offset="0.6716" stop-color="#fe59ab"/><stop offset="0.7737" stop-color="#f451b3"/><stop offset="0.8562" stop-color="#a21aeb"/><stop offset="0.8935" stop-color="#8d0ef8"/><stop offset="0.9210" stop-color="#6e06ff"/><stop offset="0.9328" stop-color="#7507ff"/><stop offset="0.9544" stop-color="#9c17ef"/><stop offset="1.0015" stop-color="#9513f3"/></linearGradient>
<linearGradient id="c42" x1="0" y1="0" x2="0" y2="1"><stop offset="0.0000" stop-color="#8b0dfa"/><stop offset="0.0295" stop-color="#6f06ff"/><stop offset="0.0550" stop-color="#8c0ef9"/><stop offset="0.0864" stop-color="#7106ff"/><stop offset="0.1159" stop-color="#8b0dfa"/><stop offset="0.1453" stop-color="#6105ff"/><stop offset="0.1767" stop-color="#7807ff"/><stop offset="0.2081" stop-color="#5704ff"/><stop offset="0.2396" stop-color="#6d06ff"/><stop offset="0.2808" stop-color="#4002ff"/><stop offset="0.3201" stop-color="#6105ff"/><stop offset="0.3711" stop-color="#5504ff"/><stop offset="0.3809" stop-color="#6706ff"/><stop offset="0.3888" stop-color="#8409fd"/><stop offset="0.3986" stop-color="#b424e0"/><stop offset="0.4045" stop-color="#be2ada"/><stop offset="0.4595" stop-color="#8208ff"/><stop offset="0.5184" stop-color="#6105ff"/><stop offset="0.5557" stop-color="#5304ff"/><stop offset="0.5636" stop-color="#5804ff"/><stop offset="0.5694" stop-color="#6906ff"/><stop offset="0.5753" stop-color="#8d0ff8"/><stop offset="0.5812" stop-color="#cd35cf"/><stop offset="0.5852" stop-color="#ff679a"/><stop offset="0.5910" stop-color="#ffce27"/><stop offset="0.5930" stop-color="#fff012"/><stop offset="0.5950" stop-color="#fffaab"/><stop offset="0.5969" stop-color="#ffffff"/><stop offset="0.6146" stop-color="#ffffff"/><stop offset="0.6166" stop-color="#fffccb"/><stop offset="0.6205" stop-color="#fff125"/><stop offset="0.6225" stop-color="#ffe319"/><stop offset="0.6303" stop-color="#ffb142"/><stop offset="0.6421" stop-color="#ff817b"/><stop offset="0.6539" stop-color="#ff6899"/><stop offset="0.6676" stop-color="#fe59ab"/><stop offset="0.7717" stop-color="#f351b3"/><stop offset="0.8522" stop-color="#a11aec"/><stop offset="0.8915" stop-color="#8d0ef8"/><stop offset="0.9209" stop-color="#6505ff"/><stop offset="0.9347" stop-color="#7207ff"/><stop offset="0.9543" stop-color="#af22e3"/><stop offset="0.9720" stop-color="#9714f2"/><stop offset="1.0014" stop-color="#9513f3"/></linearGradient>
<linearGradient id="c43" x1="0" y1="0" x2="0" y2="1"><stop offset="0.0000" stop-color="#860afc"/><stop offset="0.0236" stop-color="#6906ff"/><stop offset="0.0530" stop-color="#880bfb"/><stop offset="0.0825" stop-color="#6a06ff"/><stop offset="0.1080" stop-color="#890cfb"/><stop offset="0.1374" stop-color="#7707ff"/><stop offset="0.1708" stop-color="#9915f1"/><stop offset="0.2003" stop-color="#8308ff"/><stop offset="0.2297" stop-color="#a31beb"/><stop offset="0.2651" stop-color="#9d17ee"/><stop offset="0.3024" stop-color="#be2ada"/><stop offset="0.3593" stop-color="#af21e3"/><stop offset="0.3731" stop-color="#ce35cf"/><stop offset="0.3829" stop-color="#ff639f"/><stop offset="0.3947" stop-color="#ffa452"/><stop offset="0.4045" stop-color="#ffbe32"/><stop offset="0.4143" stop-color="#ffd125"/><stop offset="0.4221" stop-color="#ffb938"/><stop offset="0.4437" stop-color="#ff5ca8"/><stop offset="0.4555" stop-color="#e043c1"/><stop offset="0.4673" stop-color="#d43aca"/><stop offset="0.5694" stop-color="#fb57ad"/><stop offset="0.5890" stop-color="#ff8971"/><stop offset="0.5989" stop-color="#ffc030"/><stop offset="0.6047" stop-color="#ffd324"/><stop offset="0.6106" stop-color="#ffc031"/><stop offset="0.6224" stop-color="#ff5fa4"/><stop offset="0.6283" stop-color="#d339cb"/><stop offset="0.6342" stop-color="#b223e1"/><stop offset="0.6440" stop-color="#9b16f0"/><stop offset="0.8777" stop-color="#9312f4"/><stop offset="0.8953" stop-color="#880bfc"/><stop offset="0.9228" stop-color="#5d05ff"/><stop offset="0.9346" stop-color="#6d06ff"/><stop offset="0.9405" stop-color="#860afc"/><stop offset="0.9503" stop-color="#bc29db"/><stop offset="0.9542" stop-color="#c730d4"/><stop offset="0.9719" stop-color="#9915f1"/><stop offset="1.0014" stop-color="#9513f3"/></linearGradient>
<linearGradient id="c44" x1="0" y1="0" x2="0" y2="1"><stop offset="0.0000" stop-color="#7f08ff"/><stop offset="0.0216" stop-color="#6305ff"/><stop offset="0.0510" stop-color="#8409fe"/><stop offset="0.0785" stop-color="#6505ff"/><stop offset="0.1041" stop-color="#8409fe"/><stop offset="0.1315" stop-color="#6e06ff"/><stop offset="0.1630" stop-color="#9412f4"/><stop offset="0.1924" stop-color="#7d08ff"/><stop offset="0.2238" stop-color="#9d17ee"/><stop offset="0.2552" stop-color="#9513f3"/><stop offset="0.2906" stop-color="#ba28dc"/><stop offset="0.3298" stop-color="#a81ee8"/><stop offset="0.3554" stop-color="#b223e1"/><stop offset="0.3691" stop-color="#cd34d0"/><stop offset="0.3789" stop-color="#ff5ba9"/><stop offset="0.3887" stop-color="#ffa254"/><stop offset="0.3946" stop-color="#ffc32f"/><stop offset="0.4084" stop-color="#ffee12"/><stop offset="0.4123" stop-color="#fff11f"/><stop offset="0.4162" stop-color="#ffef11"/><stop offset="0.4260" stop-color="#ffbe32"/><stop offset="0.4457" stop-color="#ff5da6"/><stop offset="0.4574" stop-color="#e043c1"/><stop offset="0.4673" stop-color="#d53aca"/><stop offset="0.4947" stop-color="#d73cc8"/><stop offset="0.5694" stop-color="#fe59ab"/><stop offset="0.5890" stop-color="#ff8e6b"/><stop offset="0.5988" stop-color="#ffc72c"/><stop offset="0.6047" stop-color="#ffda1f"/><stop offset="0.6086" stop-color="#ffd125"/><stop offset="0.6125" stop-color="#ffb938"/><stop offset="0.6224" stop-color="#ff649e"/><stop offset="0.6283" stop-color="#d93dc7"/><stop offset="0.6361" stop-color="#b123e2"/><stop offset="0.6440" stop-color="#a019ec"/><stop offset="0.8776" stop-color="#9312f5"/><stop offset="0.8953" stop-color="#860afc"/><stop offset="0.9149" stop-color="#5d05ff"/><stop offset="0.9227" stop-color="#5604ff"/><stop offset="0.9345" stop-color="#6906ff"/><stop offset="0.9404" stop-color="#890cfb"/><stop offset="0.9502" stop-color="#d238cc"/><stop offset="0.9542" stop-color="#e043c1"/><stop offset="0.9581" stop-color="#da3ec6"/><stop offset="0.9718" stop-color="#9b16ef"/><stop offset="1.0013" stop-color="#9513f3"/></linearGradient>
<linearGradient id="c45" x1="0" y1="0" x2="0" y2="1"><stop offset="0.0000" stop-color="#7507ff"/><stop offset="0.0196" stop-color="#5e05ff"/><stop offset="0.0471" stop-color="#7e08ff"/><stop offset="0.0746" stop-color="#5f05ff"/><stop offset="0.1021" stop-color="#7f08ff"/><stop offset="0.1296" stop-color="#5604ff"/><stop offset="0.1571" stop-color="#6a06ff"/><stop offset="0.1885" stop-color="#4703ff"/><stop offset="0.2159" stop-color="#6706ff"/><stop offset="0.2474" stop-color="#3d02ff"/><stop offset="0.2807" stop-color="#5504ff"/><stop offset="0.3200" stop-color="#3b02ff"/><stop offset="0.3730" stop-color="#7407ff"/><stop offset="0.3848" stop-color="#9714f2"/><stop offset="0.3985" stop-color="#e547bd"/><stop offset="0.4044" stop-color="#f250b4"/><stop offset="0.4456" stop-color="#9614f2"/><stop offset="0.4712" stop-color="#7907ff"/><stop offset="0.5359" stop-color="#5e05ff"/><stop offset="0.5595" stop-color="#6305ff"/><stop offset="0.5693" stop-color="#7907ff"/><stop offset="0.5752" stop-color="#9a16f0"/><stop offset="0.5811" stop-color="#da3ec6"/><stop offset="0.5831" stop-color="#f955af"/><stop offset="0.5889" stop-color="#ffb73a"/><stop offset="0.5909" stop-color="#ffdb1e"/><stop offset="0.5929" stop-color="#fff452"/><stop offset="0.5948" stop-color="#fffeec"/><stop offset="0.5968" stop-color="#ffffff"/><stop offset="0.6164" stop-color="#fffffc"/><stop offset="0.6204" stop-color="#fff452"/><stop offset="0.6223" stop-color="#ffec13"/><stop offset="0.6302" stop-color="#ffb839"/><stop offset="0.6419" stop-color="#ff8675"/><stop offset="0.6537" stop-color="#ff6a96"/><stop offset="0.6675" stop-color="#ff5aaa"/><stop offset="0.7597" stop-color="#f351b3"/><stop offset="0.8304" stop-color="#9e18ee"/><stop offset="0.8893" stop-color="#8c0ef9"/><stop offset="0.9207" stop-color="#5104ff"/><stop offset="0.9286" stop-color="#5604ff"/><stop offset="0.9345" stop-color="#6706ff"/><stop offset="0.9403" stop-color="#8d0ef8"/><stop offset="0.9502" stop-color="#e748bc"/><stop offset="0.9541" stop-color="#f855af"/><stop offset="0.9580" stop-color="#ef4eb6"/><stop offset="0.9678" stop-color="#ac20e5"/><stop offset="0.9718" stop-color="#9d18ee"/><stop offset="1.0012" stop-color="#9513f3"/></linearGradient>
<linearGradient id="c46" x1="0" y1="0" x2="0" y2="1"><stop offset="0.0000" stop-color="#6b06ff"/><stop offset="0.0177" stop-color="#5904ff"/><stop offset="0.0432" stop-color="#7907ff"/><stop offset="0.0707" stop-color="#5904ff"/><stop offset="0.0981" stop-color="#7a07ff"/><stop offset="0.1256" stop-color="#5104ff"/><stop offset="0.1531" stop-color="#6405ff"/><stop offset="0.1826" stop-color="#3e02ff"/><stop offset="0.2100" stop-color="#6005ff"/><stop offset="0.2395" stop-color="#3701ff"/><stop offset="0.2709" stop-color="#4c03ff"/><stop offset="0.3043" stop-color="#2e01ff"/><stop offset="0.3435" stop-color="#5504ff"/><stop offset="0.3847" stop-color="#4a03ff"/><stop offset="0.4024" stop-color="#880bfb"/><stop offset="0.4162" stop-color="#7907ff"/><stop offset="0.4574" stop-color="#7407ff"/><stop offset="0.5182" stop-color="#5a04ff"/><stop offset="0.5536" stop-color="#6806ff"/><stop offset="0.5673" stop-color="#7f08ff"/><stop offset="0.5732" stop-color="#9915f1"/><stop offset="0.5791" stop-color="#ce35cf"/><stop offset="0.5830" stop-color="#ff659d"/><stop offset="0.5889" stop-color="#ffd026"/><stop offset="0.5909" stop-color="#fff234"/><stop offset="0.5928" stop-color="#fffee9"/><stop offset="0.5948" stop-color="#ffffff"/><stop offset="0.6183" stop-color="#ffffff"/><stop offset="0.6203" stop-color="#fffef6"/><stop offset="0.6242" stop-color="#fff449"/><stop offset="0.6262" stop-color="#ffed12"/><stop offset="0.6380" stop-color="#ffac48"/><stop offset="0.6478" stop-color="#ff8676"/><stop offset="0.6596" stop-color="#ff679a"/><stop offset="0.6713" stop-color="#fe59ab"/><stop offset="0.7558" stop-color="#f351b3"/><stop offset="0.8264" stop-color="#9513f3"/><stop offset="0.8873" stop-color="#8d0ef8"/><stop offset="0.9206" stop-color="#4e03ff"/><stop offset="0.9285" stop-color="#5204ff"/><stop offset="0.9344" stop-color="#6505ff"/><stop offset="0.9403" stop-color="#9010f6"/><stop offset="0.9501" stop-color="#f855af"/><stop offset="0.9521" stop-color="#ff60a3"/><stop offset="0.9540" stop-color="#ff659d"/><stop offset="0.9579" stop-color="#ff5ca8"/><stop offset="0.9678" stop-color="#b123e2"/><stop offset="0.9736" stop-color="#9b16f0"/><stop offset="1.0011" stop-color="#9513f3"/></linearGradient>
<linearGradient id="c47" x1="0" y1="0" x2="0" y2="1"><stop offset="0.0000" stop-color="#6105ff"/><stop offset="0.0137" stop-color="#5304ff"/><stop offset="0.0412" stop-color="#7407ff"/><stop offset="0.0687" stop-color="#5404ff"/><stop offset="0.0942" stop-color="#7407ff"/><stop offset="0.1217" stop-color="#5804ff"/><stop offset="0.1492" stop-color="#8008ff"/><stop offset="0.1786" stop-color="#6605ff"/><stop offset="0.2041" stop-color="#870bfc"/><stop offset="0.2355" stop-color="#7807ff"/><stop offset="0.2650" stop-color="#9f19ed"/><stop offset="0.2944" stop-color="#9211f5"/><stop offset="0.3298" stop-color="#af22e3"/><stop offset="0.3631" stop-color="#a71de8"/><stop offset="0.3749" stop-color="#bf2bd9"/><stop offset="0.3867" stop-color="#fe5aaa"/><stop offset="0.3965" stop-color="#ff7e7f"/><stop offset="0.4142" stop-color="#ffa056"/><stop offset="0.4200" stop-color="#ff9465"/><stop offset="0.4358" stop-color="#ff5da6"/><stop offset="0.4515" stop-color="#d53bc9"/><stop offset="0.4691" stop-color="#c52fd5"/><stop offset="0.4986" stop-color="#cc34d0"/><stop offset="0.5437" stop-color="#fe59ab"/><stop offset="0.5692" stop-color="#ff7787"/><stop offset="0.5849" stop-color="#ffb043"/><stop offset="0.5947" stop-color="#ffeb13"/><stop offset="0.6006" stop-color="#fffbb9"/><stop offset="0.6026" stop-color="#fffcd4"/><stop offset="0.6046" stop-color="#fffcd7"/><stop offset="0.6065" stop-color="#fffbc1"/><stop offset="0.6085" stop-color="#fff892"/><stop offset="0.6124" stop-color="#ffee11"/><stop offset="0.6183" stop-color="#ffb839"/><stop offset="0.6222" stop-color="#ff9662"/><stop offset="0.6281" stop-color="#ff6f91"/><stop offset="0.6320" stop-color="#ff5da6"/><stop offset="0.6379" stop-color="#ea4bb9"/><stop offset="0.6477" stop-color="#da3ec6"/><stop offset="0.7498" stop-color="#d138cc"/><stop offset="0.8244" stop-color="#7f08ff"/><stop offset="0.8833" stop-color="#8f0ff7"/><stop offset="0.8951" stop-color="#8409fe"/><stop offset="0.9127" stop-color="#5804ff"/><stop offset="0.9225" stop-color="#4c03ff"/><stop offset="0.9323" stop-color="#5c05ff"/><stop offset="0.9382" stop-color="#8308ff"/><stop offset="0.9441" stop-color="#bf2bd9"/><stop offset="0.9500" stop-color="#ff5fa5"/><stop offset="0.9539" stop-color="#ff708f"/><stop offset="0.9579" stop-color="#ff669c"/><stop offset="0.9598" stop-color="#fd58ac"/><stop offset="0.9657" stop-color="#c42ed6"/><stop offset="0.9696" stop-color="#a81ee7"/><stop offset="0.9736" stop-color="#9b16ef"/><stop offset="1.0010" stop-color="#9513f3"/></linearGradient>
<linearGradient id="c48" x1="0" y1="0" x2="0" y2="1"><stop offset="0.0000" stop-color="#5904ff"/><stop offset="0.0137" stop-color="#5004ff"/><stop offset="0.0373" stop-color="#6f06ff"/><stop offset="0.0510" stop-color="#6906ff"/><stop offset="0.0569" stop-color="#5604ff"/><stop offset="0.0648" stop-color="#4f03ff"/><stop offset="0.0922" stop-color="#7006ff"/><stop offset="0.1178" stop-color="#5304ff"/><stop offset="0.1472" stop-color="#8108ff"/><stop offset="0.1747" stop-color="#6a06ff"/><stop offset="0.2002" stop-color="#8a0dfa"/><stop offset="0.2296" stop-color="#7e08ff"/><stop offset="0.2591" stop-color="#a81ee7"/><stop offset="0.2885" stop-color="#a019ed"/><stop offset="0.3219" stop-color="#be2ada"/><stop offset="0.3572" stop-color="#b022e3"/><stop offset="0.3670" stop-color="#c62fd5"/><stop offset="0.3749" stop-color="#f452b2"/><stop offset="0.3788" stop-color="#ff718f"/><stop offset="0.3866" stop-color="#ffc52e"/><stop offset="0.3906" stop-color="#ffee12"/><stop offset="0.3965" stop-color="#fffee8"/><stop offset="0.3984" stop-color="#ffffff"/><stop offset="0.4200" stop-color="#ffffff"/><stop offset="0.4220" stop-color="#fffde6"/><stop offset="0.4259" stop-color="#fff44f"/><stop offset="0.4279" stop-color="#ffed12"/><stop offset="0.4338" stop-color="#ffbe32"/><stop offset="0.4396" stop-color="#ff9465"/><stop offset="0.4514" stop-color="#fe59ab"/><stop offset="0.4612" stop-color="#e244c0"/><stop offset="0.4710" stop-color="#d83dc7"/><stop offset="0.4966" stop-color="#e043c1"/><stop offset="0.5201" stop-color="#fe5aaa"/><stop offset="0.5770" stop-color="#ffc42e"/><stop offset="0.5908" stop-color="#ffcc28"/><stop offset="0.6025" stop-color="#ffef11"/><stop offset="0.6065" stop-color="#ffe716"/><stop offset="0.6124" stop-color="#ffc22f"/><stop offset="0.6222" stop-color="#ff649e"/><stop offset="0.6300" stop-color="#c62fd5"/><stop offset="0.6379" stop-color="#9f19ed"/><stop offset="0.6457" stop-color="#9010f6"/><stop offset="0.7576" stop-color="#8409fe"/><stop offset="0.8106" stop-color="#5e05ff"/><stop offset="0.8557" stop-color="#880cfb"/><stop offset="0.8793" stop-color="#9010f6"/><stop offset="0.8950" stop-color="#8409fe"/><stop offset="0.9146" stop-color="#5504ff"/><stop offset="0.9244" stop-color="#4e03ff"/><stop offset="0.9323" stop-color="#5e05ff"/><stop offset="0.9382" stop-color="#8409fe"/><stop offset="0.9441" stop-color="#c22cd8"/><stop offset="0.9480" stop-color="#f351b3"/><stop offset="0.9499" stop-color="#ff62a1"/><stop offset="0.9539" stop-color="#ff748b"/><stop offset="0.9558" stop-color="#ff728d"/><stop offset="0.9598" stop-color="#ff5ba9"/><stop offset="0.9676" stop-color="#b525e0"/><stop offset="0.9735" stop-color="#9b16ef"/><stop offset="1.0010" stop-color="#9513f3"/></linearGradient>
<linearGradient id="c49" x1="0" y1="0" x2="0" y2="1"><stop offset="0.0000" stop-color="#5204ff"/><stop offset="0.0118" stop-color="#4b03ff"/><stop offset="0.0353" stop-color="#6b06ff"/><stop offset="0.0471" stop-color="#5e05ff"/><stop offset="0.0491" stop-color="#6906ff"/><stop offset="0.0569" stop-color="#4f03ff"/><stop offset="0.0628" stop-color="#4b03ff"/><stop offset="0.0903" stop-color="#6b06ff"/><stop offset="0.1158" stop-color="#4a03ff"/><stop offset="0.1433" stop-color="#6706ff"/><stop offset="0.1727" stop-color="#4403ff"/><stop offset="0.1982" stop-color="#6706ff"/><stop offset="0.2257" stop-color="#4b03ff"/><stop offset="0.2512" stop-color="#6e06ff"/><stop offset="0.2806" stop-color="#5304ff"/><stop offset="0.3101" stop-color="#7c07ff"/><stop offset="0.3434" stop-color="#6505ff"/><stop offset="0.3533" stop-color="#6c06ff"/><stop offset="0.3631" stop-color="#8409fe"/><stop offset="0.3709" stop-color="#a21aeb"/><stop offset="0.3788" stop-color="#da3ec6"/><stop offset="0.3827" stop-color="#ff5ca8"/><stop offset="0.3925" stop-color="#ffc130"/><stop offset="0.3964" stop-color="#ffe716"/><stop offset="0.3984" stop-color="#fff230"/><stop offset="0.4004" stop-color="#fff66b"/><stop offset="0.4023" stop-color="#fff897"/><stop offset="0.4043" stop-color="#fffaae"/><stop offset="0.4082" stop-color="#fffab4"/><stop offset="0.4121" stop-color="#fff891"/><stop offset="0.4141" stop-color="#fff66f"/><stop offset="0.4180" stop-color="#ffef10"/><stop offset="0.4259" stop-color="#ffb73a"/><stop offset="0.4396" stop-color="#fe59ab"/><stop offset="0.4475" stop-color="#d238cc"/><stop offset="0.4632" stop-color="#a51cea"/><stop offset="0.4887" stop-color="#9915f1"/><stop offset="0.5103" stop-color="#a91ee7"/><stop offset="0.5299" stop-color="#d63bc9"/><stop offset="0.5417" stop-color="#fe5aaa"/><stop offset="0.5731" stop-color="#ffaa4a"/><stop offset="0.5829" stop-color="#ffe219"/><stop offset="0.5848" stop-color="#fff121"/><stop offset="0.5888" stop-color="#fffde0"/><stop offset="0.5907" stop-color="#ffffff"/><stop offset="0.6143" stop-color="#ffffff"/><stop offset="0.6162" stop-color="#fffccf"/><stop offset="0.6182" stop-color="#fff565"/><stop offset="0.6202" stop-color="#ffec12"/><stop offset="0.6260" stop-color="#ffb73a"/><stop offset="0.6339" stop-color="#ff8a70"/><stop offset="0.6417" stop-color="#ff6c95"/><stop offset="0.6496" stop-color="#ff5ea5"/><stop offset="0.7360" stop-color="#f14fb5"/><stop offset="0.7615" stop-color="#cd34d0"/><stop offset="0.7929" stop-color="#8309fe"/><stop offset="0.8066" stop-color="#6205ff"/><stop offset="0.8184" stop-color="#5a04ff"/><stop offset="0.8557" stop-color="#870bfc"/><stop offset="0.8831" stop-color="#8f0ff7"/><stop offset="0.8969" stop-color="#8108ff"/><stop offset="0.9165" stop-color="#5504ff"/><stop offset="0.9244" stop-color="#5104ff"/><stop offset="0.9322" stop-color="#6005ff"/><stop offset="0.9381" stop-color="#850afd"/><stop offset="0.9440" stop-color="#c32dd7"/><stop offset="0.9479" stop-color="#f452b2"/><stop offset="0.9499" stop-color="#ff62a0"/><stop offset="0.9538" stop-color="#ff748a"/><stop offset="0.9558" stop-color="#ff728d"/><stop offset="0.9597" stop-color="#ff5ba9"/><stop offset="0.9675" stop-color="#b525e0"/><stop offset="0.9734" stop-color="#9c17ef"/><stop offset="1.0009" stop-color="#9513f3"/></linearGradient>
<linearGradient id="c50" x1="0" y1="0" x2="0" y2="1"><stop offset="0.0000" stop-color="#4c03ff"/><stop offset="0.0118" stop-color="#4903ff"/><stop offset="0.0334" stop-color="#6706ff"/><stop offset="0.0471" stop-color="#5704ff"/><stop offset="0.0491" stop-color="#6706ff"/><stop offset="0.0569" stop-color="#4a03ff"/><stop offset="0.0628" stop-color="#4803ff"/><stop offset="0.0883" stop-color="#6706ff"/><stop offset="0.1138" stop-color="#4403ff"/><stop offset="0.1413" stop-color="#5804ff"/><stop offset="0.1668" stop-color="#2d00ff"/><stop offset="0.1962" stop-color="#4f03ff"/><stop offset="0.2217" stop-color="#2e01ff"/><stop offset="0.2473" stop-color="#4703ff"/><stop offset="0.2747" stop-color="#2500fb"/><stop offset="0.2845" stop-color="#2700fe"/><stop offset="0.3061" stop-color="#4803ff"/><stop offset="0.3375" stop-color="#3101ff"/><stop offset="0.3670" stop-color="#5f05ff"/><stop offset="0.3787" stop-color="#8309fe"/><stop offset="0.3886" stop-color="#bc29db"/><stop offset="0.3964" stop-color="#ff60a3"/><stop offset="0.4023" stop-color="#ff827a"/><stop offset="0.4062" stop-color="#ff8675"/><stop offset="0.4121" stop-color="#ff7d81"/><stop offset="0.4200" stop-color="#ff5da6"/><stop offset="0.4317" stop-color="#be2ada"/><stop offset="0.4455" stop-color="#8b0df9"/><stop offset="0.4612" stop-color="#7507ff"/><stop offset="0.4847" stop-color="#6b06ff"/><stop offset="0.4984" stop-color="#6f06ff"/><stop offset="0.5102" stop-color="#8208ff"/><stop offset="0.5200" stop-color="#9b16ef"/><stop offset="0.5298" stop-color="#c32dd7"/><stop offset="0.5436" stop-color="#ff5fa4"/><stop offset="0.5554" stop-color="#ff8e6c"/><stop offset="0.5711" stop-color="#ffbf31"/><stop offset="0.5789" stop-color="#ffec13"/><stop offset="0.5809" stop-color="#fff55f"/><stop offset="0.5828" stop-color="#fffcd6"/><stop offset="0.5848" stop-color="#ffffff"/><stop offset="0.6240" stop-color="#ffffff"/><stop offset="0.6260" stop-color="#fffddd"/><stop offset="0.6299" stop-color="#fff340"/><stop offset="0.6319" stop-color="#ffec13"/><stop offset="0.6397" stop-color="#ffb939"/><stop offset="0.6495" stop-color="#ff8b6f"/><stop offset="0.6574" stop-color="#ff718f"/><stop offset="0.6672" stop-color="#ff5ea5"/><stop offset="0.7300" stop-color="#f14fb5"/><stop offset="0.7536" stop-color="#cc34d0"/><stop offset="0.7850" stop-color="#8208ff"/><stop offset="0.7987" stop-color="#6105ff"/><stop offset="0.8124" stop-color="#5804ff"/><stop offset="0.8576" stop-color="#880cfb"/><stop offset="0.8831" stop-color="#8f10f7"/><stop offset="0.8968" stop-color="#8309fe"/><stop offset="0.9164" stop-color="#5a04ff"/><stop offset="0.9243" stop-color="#5704ff"/><stop offset="0.9321" stop-color="#6505ff"/><stop offset="0.9380" stop-color="#880bfb"/><stop offset="0.9439" stop-color="#c52ed6"/><stop offset="0.9478" stop-color="#f553b1"/><stop offset="0.9498" stop-color="#ff639f"/><stop offset="0.9537" stop-color="#ff758a"/><stop offset="0.9557" stop-color="#ff738c"/><stop offset="0.9596" stop-color="#ff5ba8"/><stop offset="0.9675" stop-color="#b525df"/><stop offset="0.9733" stop-color="#9c17ef"/><stop offset="1.0008" stop-color="#9513f3"/></linearGradient>
<linearGradient id="c51" x1="0" y1="0" x2="0" y2="1"><stop offset="0.0000" stop-color="#4703ff"/><stop offset="0.0098" stop-color="#4503ff"/><stop offset="0.0314" stop-color="#6405ff"/><stop offset="0.0471" stop-color="#5204ff"/><stop offset="0.0491" stop-color="#6605ff"/><stop offset="0.0589" stop-color="#4402ff"/><stop offset="0.0863" stop-color="#6405ff"/><stop offset="0.1118" stop-color="#4302ff"/><stop offset="0.1393" stop-color="#6005ff"/><stop offset="0.1648" stop-color="#3d02ff"/><stop offset="0.1923" stop-color="#6005ff"/><stop offset="0.2198" stop-color="#4403ff"/><stop offset="0.2472" stop-color="#6906ff"/><stop offset="0.2728" stop-color="#4e03ff"/><stop offset="0.3002" stop-color="#7707ff"/><stop offset="0.3297" stop-color="#6005ff"/><stop offset="0.3650" stop-color="#8d0ef8"/><stop offset="0.3767" stop-color="#a91ee7"/><stop offset="0.3826" stop-color="#d037cd"/><stop offset="0.3885" stop-color="#ff61a1"/><stop offset="0.3983" stop-color="#ffbd33"/><stop offset="0.4042" stop-color="#ffe11a"/><stop offset="0.4081" stop-color="#ffea14"/><stop offset="0.4121" stop-color="#ffe517"/><stop offset="0.4180" stop-color="#ffc72c"/><stop offset="0.4317" stop-color="#fe59ab"/><stop offset="0.4415" stop-color="#c02bd9"/><stop offset="0.4494" stop-color="#a81de8"/><stop offset="0.4572" stop-color="#9d18ee"/><stop offset="0.4906" stop-color="#9d18ee"/><stop offset="0.5063" stop-color="#b425e0"/><stop offset="0.5220" stop-color="#ed4cb8"/><stop offset="0.5259" stop-color="#ff5ca8"/><stop offset="0.5435" stop-color="#ffbf31"/><stop offset="0.5514" stop-color="#ffec13"/><stop offset="0.5533" stop-color="#fff22f"/><stop offset="0.5612" stop-color="#fffcd3"/><stop offset="0.5632" stop-color="#fffef4"/><stop offset="0.5651" stop-color="#ffffff"/><stop offset="0.6181" stop-color="#ffffff"/><stop offset="0.6201" stop-color="#fff99c"/><stop offset="0.6220" stop-color="#fff124"/><stop offset="0.6240" stop-color="#ffde1d"/><stop offset="0.6299" stop-color="#ffa94c"/><stop offset="0.6377" stop-color="#ff7985"/><stop offset="0.6495" stop-color="#fd58ac"/><stop offset="0.6672" stop-color="#ed4db7"/><stop offset="0.7221" stop-color="#e244c0"/><stop offset="0.7770" stop-color="#8208ff"/><stop offset="0.7908" stop-color="#6a06ff"/><stop offset="0.8124" stop-color="#5e05ff"/><stop offset="0.8555" stop-color="#880cfb"/><stop offset="0.8810" stop-color="#9010f6"/><stop offset="0.9242" stop-color="#5e05ff"/><stop offset="0.9321" stop-color="#6b06ff"/><stop offset="0.9379" stop-color="#8b0df9"/><stop offset="0.9438" stop-color="#c730d4"/><stop offset="0.9478" stop-color="#f754b0"/><stop offset="0.9497" stop-color="#ff649e"/><stop offset="0.9536" stop-color="#ff7689"/><stop offset="0.9556" stop-color="#ff738c"/><stop offset="0.9595" stop-color="#ff5ca8"/><stop offset="0.9674" stop-color="#b525df"/><stop offset="0.9733" stop-color="#9c17ef"/><stop offset="1.0007" stop-color="#9513f3"/></linearGradient>
<linearGradient id="c52" x1="0" y1="0" x2="0" y2="1"><stop offset="0.0000" stop-color="#4402ff"/><stop offset="0.0098" stop-color="#4302ff"/><stop offset="0.0314" stop-color="#6105ff"/><stop offset="0.0471" stop-color="#4e03ff"/><stop offset="0.0491" stop-color="#6405ff"/><stop offset="0.0589" stop-color="#4102ff"/><stop offset="0.0844" stop-color="#6205ff"/><stop offset="0.1118" stop-color="#4302ff"/><stop offset="0.1373" stop-color="#6f06ff"/><stop offset="0.1648" stop-color="#5a04ff"/><stop offset="0.1923" stop-color="#7f08ff"/><stop offset="0.2158" stop-color="#6906ff"/><stop offset="0.2453" stop-color="#9915f1"/><stop offset="0.2708" stop-color="#9312f5"/><stop offset="0.2982" stop-color="#b626df"/><stop offset="0.3296" stop-color="#a81de8"/><stop offset="0.3630" stop-color="#cc33d1"/><stop offset="0.3689" stop-color="#dc40c4"/><stop offset="0.3748" stop-color="#ff60a3"/><stop offset="0.3787" stop-color="#ff8774"/><stop offset="0.3846" stop-color="#ffdd1d"/><stop offset="0.3865" stop-color="#fff558"/><stop offset="0.3885" stop-color="#fffff9"/><stop offset="0.3905" stop-color="#ffffff"/><stop offset="0.4277" stop-color="#ffffff"/><stop offset="0.4297" stop-color="#fffcd6"/><stop offset="0.4317" stop-color="#fff450"/><stop offset="0.4336" stop-color="#ffe319"/><stop offset="0.4415" stop-color="#ff9168"/><stop offset="0.4493" stop-color="#ff60a3"/><stop offset="0.4591" stop-color="#e546be"/><stop offset="0.4709" stop-color="#da3ec6"/><stop offset="0.4886" stop-color="#e345bf"/><stop offset="0.5043" stop-color="#ff5da7"/><stop offset="0.5200" stop-color="#ff9860"/><stop offset="0.5337" stop-color="#ffef11"/><stop offset="0.5396" stop-color="#fffde0"/><stop offset="0.5415" stop-color="#ffffff"/><stop offset="0.6122" stop-color="#ffffff"/><stop offset="0.6141" stop-color="#fff9a3"/><stop offset="0.6161" stop-color="#fff11e"/><stop offset="0.6181" stop-color="#ffd721"/><stop offset="0.6200" stop-color="#ffbc34"/><stop offset="0.6279" stop-color="#ff61a2"/><stop offset="0.6318" stop-color="#e244c0"/><stop offset="0.6416" stop-color="#ab1fe6"/><stop offset="0.6534" stop-color="#9412f4"/><stop offset="0.7593" stop-color="#860afd"/><stop offset="0.8103" stop-color="#6b06ff"/><stop offset="0.8574" stop-color="#8d0ef8"/><stop offset="0.8810" stop-color="#9211f5"/><stop offset="0.9241" stop-color="#6606ff"/><stop offset="0.9320" stop-color="#7307ff"/><stop offset="0.9379" stop-color="#9010f6"/><stop offset="0.9418" stop-color="#b324e1"/><stop offset="0.9477" stop-color="#f955af"/><stop offset="0.9516" stop-color="#ff728d"/><stop offset="0.9536" stop-color="#ff7787"/><stop offset="0.9555" stop-color="#ff748b"/><stop offset="0.9595" stop-color="#ff5ca7"/><stop offset="0.9653" stop-color="#c62fd5"/><stop offset="0.9712" stop-color="#a11aec"/><stop offset="0.9791" stop-color="#9613f3"/><stop offset="1.0007" stop-color="#9513f3"/></linearGradient>
<linearGradient id="c53" x1="0" y1="0" x2="0" y2="1"><stop offset="0.0000" stop-color="#4102ff"/><stop offset="0.0098" stop-color="#4102ff"/><stop offset="0.0314" stop-color="#5f05ff"/><stop offset="0.0471" stop-color="#4b03ff"/><stop offset="0.0490" stop-color="#6205ff"/><stop offset="0.0549" stop-color="#4603ff"/><stop offset="0.0589" stop-color="#4002ff"/><stop offset="0.0844" stop-color="#6005ff"/><stop offset="0.1118" stop-color="#4102ff"/><stop offset="0.1373" stop-color="#6806ff"/><stop offset="0.1648" stop-color="#5004ff"/><stop offset="0.1883" stop-color="#7307ff"/><stop offset="0.2158" stop-color="#5d05ff"/><stop offset="0.2413" stop-color="#8a0dfa"/><stop offset="0.2707" stop-color="#8309fe"/><stop offset="0.2963" stop-color="#a41bea"/><stop offset="0.3276" stop-color="#9614f3"/><stop offset="0.3453" stop-color="#af21e4"/><stop offset="0.3610" stop-color="#b626df"/><stop offset="0.3688" stop-color="#ce35cf"/><stop offset="0.3747" stop-color="#ff5ca8"/><stop offset="0.3787" stop-color="#ff8b6f"/><stop offset="0.3826" stop-color="#ffca2a"/><stop offset="0.3845" stop-color="#fff234"/><stop offset="0.3865" stop-color="#ffffff"/><stop offset="0.4355" stop-color="#ffffff"/><stop offset="0.4375" stop-color="#fffff7"/><stop offset="0.4414" stop-color="#fff230"/><stop offset="0.4434" stop-color="#ffe517"/><stop offset="0.4493" stop-color="#ffbd33"/><stop offset="0.4571" stop-color="#ff9f58"/><stop offset="0.4650" stop-color="#ff9069"/><stop offset="0.4767" stop-color="#ff8b70"/><stop offset="0.5003" stop-color="#ffa155"/><stop offset="0.5101" stop-color="#ffbc34"/><stop offset="0.5199" stop-color="#ffe915"/><stop offset="0.5219" stop-color="#fff125"/><stop offset="0.5278" stop-color="#fffddf"/><stop offset="0.5297" stop-color="#ffffff"/><stop offset="0.6200" stop-color="#ffffff"/><stop offset="0.6219" stop-color="#fffaae"/><stop offset="0.6239" stop-color="#fff119"/><stop offset="0.6278" stop-color="#ffbc34"/><stop offset="0.6317" stop-color="#ff9365"/><stop offset="0.6376" stop-color="#ff6c94"/><stop offset="0.6435" stop-color="#fb57ad"/><stop offset="0.6572" stop-color="#e446be"/><stop offset="0.7455" stop-color="#d73cc8"/><stop offset="0.8103" stop-color="#bd29db"/><stop offset="0.8770" stop-color="#c52ed6"/><stop offset="0.9260" stop-color="#9915f1"/><stop offset="0.9319" stop-color="#9f18ed"/><stop offset="0.9378" stop-color="#b525e0"/><stop offset="0.9457" stop-color="#fc58ac"/><stop offset="0.9496" stop-color="#ff7886"/><stop offset="0.9535" stop-color="#ff8478"/><stop offset="0.9555" stop-color="#ff7f7d"/><stop offset="0.9594" stop-color="#ff639f"/><stop offset="0.9653" stop-color="#c62fd5"/><stop offset="0.9712" stop-color="#a11aec"/><stop offset="0.9790" stop-color="#9613f3"/><stop offset="1.0006" stop-color="#9513f3"/></linearGradient>
<linearGradient id="c54" x1="0" y1="0" x2="0" y2="1"><stop offset="0.0000" stop-color="#4002ff"/><stop offset="0.0098" stop-color="#4002ff"/><stop offset="0.0314" stop-color="#5e05ff"/><stop offset="0.0471" stop-color="#4a03ff"/><stop offset="0.0490" stop-color="#6105ff"/><stop offset="0.0549" stop-color="#4503ff"/><stop offset="0.0608" stop-color="#3f02ff"/><stop offset="0.0844" stop-color="#5e05ff"/><stop offset="0.1118" stop-color="#3c02ff"/><stop offset="0.1373" stop-color="#5104ff"/><stop offset="0.1628" stop-color="#2700fe"/><stop offset="0.1923" stop-color="#4703ff"/><stop offset="0.2158" stop-color="#2900ff"/><stop offset="0.2433" stop-color="#4402ff"/><stop offset="0.2609" stop-color="#2800ff"/><stop offset="0.2707" stop-color="#2400f9"/><stop offset="0.2982" stop-color="#4302ff"/><stop offset="0.3237" stop-color="#2c00ff"/><stop offset="0.3472" stop-color="#5304ff"/><stop offset="0.3669" stop-color="#5004ff"/><stop offset="0.3747" stop-color="#6e06ff"/><stop offset="0.3786" stop-color="#8b0df9"/><stop offset="0.3825" stop-color="#ab20e6"/><stop offset="0.3845" stop-color="#e848bc"/><stop offset="0.3865" stop-color="#ff7985"/><stop offset="0.3884" stop-color="#ffae45"/><stop offset="0.3904" stop-color="#ffe518"/><stop offset="0.3924" stop-color="#fffde2"/><stop offset="0.3943" stop-color="#ffffff"/><stop offset="0.6572" stop-color="#ffffff"/><stop offset="0.6670" stop-color="#fff9a4"/><stop offset="0.6768" stop-color="#fff77a"/><stop offset="0.7455" stop-color="#fff126"/><stop offset="0.7533" stop-color="#ffef11"/><stop offset="0.8553" stop-color="#ffae45"/><stop offset="0.8848" stop-color="#ff9761"/><stop offset="0.9220" stop-color="#ff649e"/><stop offset="0.9338" stop-color="#ff60a3"/><stop offset="0.9417" stop-color="#ff6a97"/><stop offset="0.9515" stop-color="#ff5fa4"/><stop offset="0.9554" stop-color="#f351b3"/><stop offset="0.9652" stop-color="#a41bea"/><stop offset="0.9672" stop-color="#9f19ed"/><stop offset="1.0005" stop-color="#9513f3"/></linearGradient>
<linearGradient id="c55" x1="0" y1="0" x2="0" y2="1"><stop offset="0.0000" stop-color="#5904ff"/><stop offset="0.0314" stop-color="#6c06ff"/><stop offset="0.0471" stop-color="#5f05ff"/><stop offset="0.0490" stop-color="#6d06ff"/><stop offset="0.0608" stop-color="#5904ff"/><stop offset="0.0844" stop-color="#6c06ff"/><stop offset="0.1118" stop-color="#5704ff"/><stop offset="0.1393" stop-color="#6305ff"/><stop offset="0.1628" stop-color="#4a03ff"/><stop offset="0.1903" stop-color="#5e05ff"/><stop offset="0.2177" stop-color="#4b03ff"/><stop offset="0.2432" stop-color="#5d05ff"/><stop offset="0.2707" stop-color="#4603ff"/><stop offset="0.2962" stop-color="#5d05ff"/><stop offset="0.3256" stop-color="#5004ff"/><stop offset="0.3472" stop-color="#6706ff"/><stop offset="0.3668" stop-color="#6806ff"/><stop offset="0.3747" stop-color="#8208ff"/><stop offset="0.3825" stop-color="#af22e3"/><stop offset="0.3864" stop-color="#ff5aaa"/><stop offset="0.3923" stop-color="#ffc52d"/><stop offset="0.3943" stop-color="#ffe915"/><stop offset="0.3962" stop-color="#fff895"/><stop offset="0.3982" stop-color="#ffffff"/><stop offset="0.4296" stop-color="#ffffff"/><stop offset="0.4374" stop-color="#fff559"/><stop offset="0.4414" stop-color="#fff11c"/><stop offset="0.4433" stop-color="#ffed12"/><stop offset="0.4590" stop-color="#ffd721"/><stop offset="0.4845" stop-color="#ffcf26"/><stop offset="0.5022" stop-color="#ffd721"/><stop offset="0.5159" stop-color="#ffef11"/><stop offset="0.5218" stop-color="#fff560"/><stop offset="0.5296" stop-color="#fffef2"/><stop offset="0.5316" stop-color="#ffffff"/><stop offset="0.6258" stop-color="#ffffff"/><stop offset="0.6277" stop-color="#fffef5"/><stop offset="0.6316" stop-color="#fff453"/><stop offset="0.6336" stop-color="#fff119"/><stop offset="0.6356" stop-color="#ffe716"/><stop offset="0.6513" stop-color="#ffb43e"/><stop offset="0.6709" stop-color="#ff9b5c"/><stop offset="0.7454" stop-color="#ff8e6c"/><stop offset="0.8788" stop-color="#ff5aaa"/><stop offset="0.9259" stop-color="#d339cb"/><stop offset="0.9514" stop-color="#e345bf"/><stop offset="0.9573" stop-color="#cf36ce"/><stop offset="0.9651" stop-color="#9d17ee"/><stop offset="0.9690" stop-color="#9412f4"/><stop offset="1.0004" stop-color="#8e0ff8"/></linearGradient></defs>
<g id="plane" transform="matrix(1 0.2815 0 1 117.0 102.1)" shape-rendering="crispEdges"><rect x="0" y="0" width="6.4" height="507.6" fill="url(#c0)"/>
<rect x="6" y="0" width="6.4" height="507.7" fill="url(#c1)"/>
<rect x="12" y="0" width="6.4" height="507.7" fill="url(#c2)"/>
<rect x="18" y="0" width="6.4" height="507.7" fill="url(#c3)"/>
<rect x="24" y="0" width="6.4" height="507.8" fill="url(#c4)"/>
<rect x="30" y="0" width="6.4" height="507.8" fill="url(#c5)"/>
<rect x="36" y="0" width="6.4" height="507.9" fill="url(#c6)"/>
<rect x="42" y="0" width="6.4" height="507.9" fill="url(#c7)"/>
<rect x="48" y="0" width="6.4" height="507.9" fill="url(#c8)"/>
<rect x="54" y="0" width="6.4" height="508.0" fill="url(#c9)"/>
<rect x="60" y="0" width="6.4" height="508.0" fill="url(#c10)"/>
<rect x="66" y="0" width="6.4" height="508.1" fill="url(#c11)"/>
<rect x="72" y="0" width="6.4" height="508.1" fill="url(#c12)"/>
<rect x="78" y="0" width="6.4" height="508.1" fill="url(#c13)"/>
<rect x="84" y="0" width="6.4" height="508.2" fill="url(#c14)"/>
<rect x="90" y="0" width="6.4" height="508.2" fill="url(#c15)"/>
<rect x="96" y="0" width="6.4" height="508.2" fill="url(#c16)"/>
<rect x="102" y="0" width="6.4" height="508.3" fill="url(#c17)"/>
<rect x="108" y="0" width="6.4" height="508.3" fill="url(#c18)"/>
<rect x="114" y="0" width="6.4" height="508.4" fill="url(#c19)"/>
<rect x="120" y="0" width="6.4" height="508.4" fill="url(#c20)"/>
<rect x="126" y="0" width="6.4" height="508.4" fill="url(#c21)"/>
<rect x="132" y="0" width="6.4" height="508.5" fill="url(#c22)"/>
<rect x="138" y="0" width="6.4" height="508.5" fill="url(#c23)"/>
<rect x="144" y="0" width="6.4" height="508.6" fill="url(#c24)"/>
<rect x="150" y="0" width="6.4" height="508.6" fill="url(#c25)"/>
<rect x="156" y="0" width="6.4" height="508.6" fill="url(#c26)"/>
<rect x="162" y="0" width="6.4" height="508.7" fill="url(#c27)"/>
<rect x="168" y="0" width="6.4" height="508.7" fill="url(#c28)"/>
<rect x="174" y="0" width="6.4" height="508.8" fill="url(#c29)"/>
<rect x="180" y="0" width="6.4" height="508.8" fill="url(#c30)"/>
<rect x="186" y="0" width="6.4" height="508.8" fill="url(#c31)"/>
<rect x="192" y="0" width="6.4" height="508.9" fill="url(#c32)"/>
<rect x="198" y="0" width="6.4" height="508.9" fill="url(#c33)"/>
<rect x="204" y="0" width="6.4" height="509.0" fill="url(#c34)"/>
<rect x="210" y="0" width="6.4" height="509.0" fill="url(#c35)"/>
<rect x="216" y="0" width="6.4" height="509.0" fill="url(#c36)"/>
<rect x="222" y="0" width="6.4" height="509.1" fill="url(#c37)"/>
<rect x="228" y="0" width="6.4" height="509.1" fill="url(#c38)"/>
<rect x="234" y="0" width="6.4" height="509.2" fill="url(#c39)"/>
<rect x="240" y="0" width="6.4" height="509.2" fill="url(#c40)"/>
<rect x="246" y="0" width="6.4" height="509.2" fill="url(#c41)"/>
<rect x="252" y="0" width="6.4" height="509.3" fill="url(#c42)"/>
<rect x="258" y="0" width="6.4" height="509.3" fill="url(#c43)"/>
<rect x="264" y="0" width="6.4" height="509.3" fill="url(#c44)"/>
<rect x="270" y="0" width="6.4" height="509.4" fill="url(#c45)"/>
<rect x="276" y="0" width="6.4" height="509.4" fill="url(#c46)"/>
<rect x="282" y="0" width="6.4" height="509.5" fill="url(#c47)"/>
<rect x="288" y="0" width="6.4" height="509.5" fill="url(#c48)"/>
<rect x="294" y="0" width="6.4" height="509.5" fill="url(#c49)"/>
<rect x="300" y="0" width="6.4" height="509.6" fill="url(#c50)"/>
<rect x="306" y="0" width="6.4" height="509.6" fill="url(#c51)"/>
<rect x="312" y="0" width="6.4" height="509.7" fill="url(#c52)"/>
<rect x="318" y="0" width="6.4" height="509.7" fill="url(#c53)"/>
<rect x="324" y="0" width="6.4" height="509.7" fill="url(#c54)"/>
<rect x="330" y="0" width="6.4" height="509.8" fill="url(#c55)"/></g>
<g fill="none" stroke-linecap="square">
<line x1="453.0" y1="451.5" x2="736.0" y2="532.7" stroke="#f01414" stroke-width="1.6" />
</g>
<defs><clipPath id="cpl"><polygon points="117,102.1 453,196.7 453,706.5 117,609.7"/></clipPath>
<clipPath id="cgr"><polygon points="117,354.1 453,451.1 453,706.5 117,609.7"/></clipPath></defs>
<g clip-path="url(#cgr)" fill="none" opacity="0.88">
<line x1="0.0" y1="-203.6" x2="735.0" y2="8.6" stroke="#e6e9ea" stroke-width="1.05" />
<line x1="0.0" y1="-186.7" x2="735.0" y2="25.5" stroke="#e8ebec" stroke-width="2.0" />
<line x1="0.0" y1="-169.8" x2="735.0" y2="42.4" stroke="#e6e9ea" stroke-width="1.05" />
<line x1="0.0" y1="-152.9" x2="735.0" y2="59.3" stroke="#e6e9ea" stroke-width="1.05" />
<line x1="0.0" y1="-136.0" x2="735.0" y2="76.2" stroke="#e6e9ea" stroke-width="1.05" />
<line x1="0.0" y1="-119.1" x2="735.0" y2="93.1" stroke="#e6e9ea" stroke-width="1.05" />
<line x1="0.0" y1="-102.2" x2="735.0" y2="110.0" stroke="#e6e9ea" stroke-width="1.05" />
<line x1="0.0" y1="-85.3" x2="735.0" y2="126.9" stroke="#e6e9ea" stroke-width="1.05" />
<line x1="0.0" y1="-68.4" x2="735.0" y2="143.8" stroke="#e6e9ea" stroke-width="1.05" />
<line x1="0.0" y1="-51.5" x2="735.0" y2="160.7" stroke="#e6e9ea" stroke-width="1.05" />
<line x1="0.0" y1="-34.6" x2="735.0" y2="177.6" stroke="#e6e9ea" stroke-width="1.05" />
<line x1="0.0" y1="-17.7" x2="735.0" y2="194.5" stroke="#e8ebec" stroke-width="2.0" />
<line x1="0.0" y1="-0.8" x2="735.0" y2="211.4" stroke="#e6e9ea" stroke-width="1.05" />
<line x1="0.0" y1="16.1" x2="735.0" y2="228.3" stroke="#e6e9ea" stroke-width="1.05" />
<line x1="0.0" y1="33.0" x2="735.0" y2="245.2" stroke="#e6e9ea" stroke-width="1.05" />
<line x1="0.0" y1="49.9" x2="735.0" y2="262.1" stroke="#e6e9ea" stroke-width="1.05" />
<line x1="0.0" y1="66.8" x2="735.0" y2="279.0" stroke="#e6e9ea" stroke-width="1.05" />
<line x1="0.0" y1="83.7" x2="735.0" y2="295.9" stroke="#e6e9ea" stroke-width="1.05" />
<line x1="0.0" y1="100.6" x2="735.0" y2="312.8" stroke="#e6e9ea" stroke-width="1.05" />
<line x1="0.0" y1="117.5" x2="735.0" y2="329.7" stroke="#e6e9ea" stroke-width="1.05" />
<line x1="0.0" y1="134.4" x2="735.0" y2="346.6" stroke="#e6e9ea" stroke-width="1.05" />
<line x1="0.0" y1="151.3" x2="735.0" y2="363.5" stroke="#e8ebec" stroke-width="2.0" />
<line x1="0.0" y1="168.2" x2="735.0" y2="380.4" stroke="#e6e9ea" stroke-width="1.05" />
<line x1="0.0" y1="185.1" x2="735.0" y2="397.3" stroke="#e6e9ea" stroke-width="1.05" />
<line x1="0.0" y1="202.0" x2="735.0" y2="414.2" stroke="#e6e9ea" stroke-width="1.05" />
<line x1="0.0" y1="218.9" x2="735.0" y2="431.1" stroke="#e6e9ea" stroke-width="1.05" />
<line x1="0.0" y1="235.8" x2="735.0" y2="448.0" stroke="#e6e9ea" stroke-width="1.05" />
<line x1="0.0" y1="252.7" x2="735.0" y2="464.9" stroke="#e6e9ea" stroke-width="1.05" />
<line x1="0.0" y1="269.6" x2="735.0" y2="481.8" stroke="#e6e9ea" stroke-width="1.05" />
<line x1="0.0" y1="286.5" x2="735.0" y2="498.7" stroke="#e6e9ea" stroke-width="1.05" />
<line x1="0.0" y1="303.4" x2="735.0" y2="515.6" stroke="#e6e9ea" stroke-width="1.05" />
<line x1="0.0" y1="320.3" x2="735.0" y2="532.5" stroke="#e8ebec" stroke-width="2.0" />
<line x1="0.0" y1="337.2" x2="735.0" y2="549.4" stroke="#e6e9ea" stroke-width="1.05" />
<line x1="0.0" y1="354.1" x2="735.0" y2="566.3" stroke="#e6e9ea" stroke-width="1.05" />
<line x1="0.0" y1="371.0" x2="735.0" y2="583.2" stroke="#e6e9ea" stroke-width="1.05" />
<line x1="0.0" y1="387.9" x2="735.0" y2="600.1" stroke="#e6e9ea" stroke-width="1.05" />
<line x1="0.0" y1="404.8" x2="735.0" y2="617.0" stroke="#e6e9ea" stroke-width="1.05" />
<line x1="0.0" y1="421.7" x2="735.0" y2="633.9" stroke="#e6e9ea" stroke-width="1.05" />
<line x1="0.0" y1="438.6" x2="735.0" y2="650.8" stroke="#e6e9ea" stroke-width="1.05" />
<line x1="0.0" y1="455.5" x2="735.0" y2="667.7" stroke="#e6e9ea" stroke-width="1.05" />
<line x1="0.0" y1="472.4" x2="735.0" y2="684.6" stroke="#e6e9ea" stroke-width="1.05" />
<line x1="0.0" y1="489.3" x2="735.0" y2="701.5" stroke="#e8ebec" stroke-width="2.0" />
<line x1="0.0" y1="506.2" x2="735.0" y2="718.4" stroke="#e6e9ea" stroke-width="1.05" />
<line x1="0.0" y1="523.1" x2="735.0" y2="735.3" stroke="#e6e9ea" stroke-width="1.05" />
<line x1="0.0" y1="540.0" x2="735.0" y2="752.2" stroke="#e6e9ea" stroke-width="1.05" />
<line x1="0.0" y1="556.9" x2="735.0" y2="769.1" stroke="#e6e9ea" stroke-width="1.05" />
<line x1="0.0" y1="573.8" x2="735.0" y2="786.0" stroke="#e6e9ea" stroke-width="1.05" />
<line x1="0.0" y1="590.7" x2="735.0" y2="802.9" stroke="#e6e9ea" stroke-width="1.05" />
<line x1="0.0" y1="607.6" x2="735.0" y2="819.8" stroke="#e6e9ea" stroke-width="1.05" />
<line x1="0.0" y1="624.5" x2="735.0" y2="836.7" stroke="#e6e9ea" stroke-width="1.05" />
<line x1="0.0" y1="641.4" x2="735.0" y2="853.6" stroke="#e6e9ea" stroke-width="1.05" />
<line x1="0.0" y1="658.3" x2="735.0" y2="870.5" stroke="#e8ebec" stroke-width="2.0" />
<line x1="0.0" y1="675.2" x2="735.0" y2="887.4" stroke="#e6e9ea" stroke-width="1.05" />
<line x1="0.0" y1="692.1" x2="735.0" y2="904.3" stroke="#e6e9ea" stroke-width="1.05" />
<line x1="0.0" y1="709.0" x2="735.0" y2="921.2" stroke="#e6e9ea" stroke-width="1.05" />
<line x1="0.0" y1="725.9" x2="735.0" y2="938.1" stroke="#e6e9ea" stroke-width="1.05" />
<line x1="0.0" y1="742.8" x2="735.0" y2="955.0" stroke="#e6e9ea" stroke-width="1.05" />
<line x1="0.0" y1="759.7" x2="735.0" y2="971.9" stroke="#e6e9ea" stroke-width="1.05" />
<line x1="0.0" y1="776.6" x2="735.0" y2="988.8" stroke="#e6e9ea" stroke-width="1.05" />
<line x1="0.0" y1="793.5" x2="735.0" y2="1005.7" stroke="#e6e9ea" stroke-width="1.05" />
<line x1="0.0" y1="810.4" x2="735.0" y2="1022.6" stroke="#e6e9ea" stroke-width="1.05" />
<line x1="8.3" y1="0.0" x2="-929.5" y2="809.0" stroke="#e6e9ea" stroke-width="1.05" />
<line x1="42.1" y1="0.0" x2="-895.6" y2="809.0" stroke="#e6e9ea" stroke-width="1.05" />
<line x1="76.0" y1="0.0" x2="-861.8" y2="809.0" stroke="#e8ebec" stroke-width="2.0" />
<line x1="109.9" y1="0.0" x2="-827.9" y2="809.0" stroke="#e6e9ea" stroke-width="1.05" />
<line x1="143.7" y1="0.0" x2="-794.1" y2="809.0" stroke="#e6e9ea" stroke-width="1.05" />
<line x1="177.5" y1="0.0" x2="-760.2" y2="809.0" stroke="#e6e9ea" stroke-width="1.05" />
<line x1="211.4" y1="0.0" x2="-726.4" y2="809.0" stroke="#e6e9ea" stroke-width="1.05" />
<line x1="245.2" y1="0.0" x2="-692.5" y2="809.0" stroke="#e6e9ea" stroke-width="1.05" />
<line x1="279.1" y1="0.0" x2="-658.7" y2="809.0" stroke="#e6e9ea" stroke-width="1.05" />
<line x1="312.9" y1="0.0" x2="-624.8" y2="809.0" stroke="#e6e9ea" stroke-width="1.05" />
<line x1="346.8" y1="0.0" x2="-591.0" y2="809.0" stroke="#e6e9ea" stroke-width="1.05" />
<line x1="380.6" y1="0.0" x2="-557.1" y2="809.0" stroke="#e6e9ea" stroke-width="1.05" />
<line x1="414.5" y1="0.0" x2="-523.3" y2="809.0" stroke="#e8ebec" stroke-width="2.0" />
<line x1="448.3" y1="0.0" x2="-489.4" y2="809.0" stroke="#e6e9ea" stroke-width="1.05" />
<line x1="482.2" y1="0.0" x2="-455.6" y2="809.0" stroke="#e6e9ea" stroke-width="1.05" />
<line x1="516.0" y1="0.0" x2="-421.7" y2="809.0" stroke="#e6e9ea" stroke-width="1.05" />
<line x1="549.9" y1="0.0" x2="-387.9" y2="809.0" stroke="#e6e9ea" stroke-width="1.05" />
<line x1="583.8" y1="0.0" x2="-354.0" y2="809.0" stroke="#e6e9ea" stroke-width="1.05" />
<line x1="617.6" y1="0.0" x2="-320.2" y2="809.0" stroke="#e6e9ea" stroke-width="1.05" />
<line x1="651.5" y1="0.0" x2="-286.3" y2="809.0" stroke="#e6e9ea" stroke-width="1.05" />
<line x1="685.3" y1="0.0" x2="-252.5" y2="809.0" stroke="#e6e9ea" stroke-width="1.05" />
<line x1="719.1" y1="0.0" x2="-218.6" y2="809.0" stroke="#e6e9ea" stroke-width="1.05" />
<line x1="753.0" y1="0.0" x2="-184.8" y2="809.0" stroke="#e8ebec" stroke-width="2.0" />
<line x1="786.9" y1="0.0" x2="-150.9" y2="809.0" stroke="#e6e9ea" stroke-width="1.05" />
<line x1="820.7" y1="0.0" x2="-117.1" y2="809.0" stroke="#e6e9ea" stroke-width="1.05" />
<line x1="854.5" y1="0.0" x2="-83.2" y2="809.0" stroke="#e6e9ea" stroke-width="1.05" />
<line x1="888.4" y1="0.0" x2="-49.4" y2="809.0" stroke="#e6e9ea" stroke-width="1.05" />
<line x1="922.2" y1="0.0" x2="-15.5" y2="809.0" stroke="#e6e9ea" stroke-width="1.05" />
<line x1="956.1" y1="0.0" x2="18.3" y2="809.0" stroke="#e6e9ea" stroke-width="1.05" />
<line x1="990.0" y1="0.0" x2="52.2" y2="809.0" stroke="#e6e9ea" stroke-width="1.05" />
<line x1="1023.8" y1="0.0" x2="86.0" y2="809.0" stroke="#e6e9ea" stroke-width="1.05" />
<line x1="1057.7" y1="0.0" x2="119.9" y2="809.0" stroke="#e6e9ea" stroke-width="1.05" />
<line x1="1091.5" y1="0.0" x2="153.7" y2="809.0" stroke="#e8ebec" stroke-width="2.0" />
<line x1="1125.3" y1="0.0" x2="187.6" y2="809.0" stroke="#e6e9ea" stroke-width="1.05" />
<line x1="1159.2" y1="0.0" x2="221.4" y2="809.0" stroke="#e6e9ea" stroke-width="1.05" />
<line x1="1193.0" y1="0.0" x2="255.3" y2="809.0" stroke="#e6e9ea" stroke-width="1.05" />
<line x1="1226.9" y1="0.0" x2="289.1" y2="809.0" stroke="#e6e9ea" stroke-width="1.05" />
<line x1="1260.8" y1="0.0" x2="323.0" y2="809.0" stroke="#e6e9ea" stroke-width="1.05" />
<line x1="1294.6" y1="0.0" x2="356.8" y2="809.0" stroke="#e6e9ea" stroke-width="1.05" />
<line x1="1328.5" y1="0.0" x2="390.7" y2="809.0" stroke="#e6e9ea" stroke-width="1.05" />
<line x1="1362.3" y1="0.0" x2="424.5" y2="809.0" stroke="#e6e9ea" stroke-width="1.05" />
<line x1="1396.2" y1="0.0" x2="458.4" y2="809.0" stroke="#e6e9ea" stroke-width="1.05" />
<line x1="1430.0" y1="0.0" x2="492.2" y2="809.0" stroke="#e8ebec" stroke-width="2.0" />
<line x1="1463.8" y1="0.0" x2="526.1" y2="809.0" stroke="#e6e9ea" stroke-width="1.05" />
<line x1="1497.7" y1="0.0" x2="559.9" y2="809.0" stroke="#e6e9ea" stroke-width="1.05" />
<line x1="1531.6" y1="0.0" x2="593.8" y2="809.0" stroke="#e6e9ea" stroke-width="1.05" />
<line x1="1565.4" y1="0.0" x2="627.6" y2="809.0" stroke="#e6e9ea" stroke-width="1.05" />
<line x1="1599.2" y1="0.0" x2="661.5" y2="809.0" stroke="#e6e9ea" stroke-width="1.05" />
<line x1="1633.1" y1="0.0" x2="695.3" y2="809.0" stroke="#e6e9ea" stroke-width="1.05" />
<line x1="1667.0" y1="0.0" x2="729.2" y2="809.0" stroke="#e6e9ea" stroke-width="1.05" />
</g>
<g fill="none" stroke-linecap="butt">
<line x1="132.3" y1="310.4" x2="436.0" y2="399.2" stroke="#2a18c8" stroke-width="1" stroke-dasharray="30 2 45 3 20 2" opacity="0.85"/>
<line x1="356.0" y1="477.6" x2="412.0" y2="493.9" stroke="#6a3cc8" stroke-width="1" stroke-dasharray="9 4 14 6" opacity="0.6"/>
<line x1="26.0" y1="438.1" x2="117.0" y2="464.2" stroke="#8c14d2" stroke-width="1.6" />
<line x1="117.0" y1="464.2" x2="355.9" y2="532.9" stroke="#8d62b5" stroke-width="1.8" />
<line x1="355.9" y1="532.9" x2="449.5" y2="452.2" stroke="#7b2cc4" stroke-width="1.5" />
<line x1="453.0" y1="449.2" x2="546.8" y2="368.3" stroke="#8c14d2" stroke-width="1.6" />
<line x1="38.6" y1="208.2" x2="117.0" y2="230.8" stroke="#9fdc9a" stroke-width="1" />
<line x1="117.0" y1="230.8" x2="353.3" y2="299.0" stroke="#b2dcb6" stroke-width="1" />
<line x1="353.3" y1="299.0" x2="353.4" y2="679.5" stroke="#b2dcb6" stroke-width="1" />
<line x1="353.4" y1="679.5" x2="353.5" y2="755.6" stroke="#9fdc9a" stroke-width="1" />
<line x1="353.3" y1="299.0" x2="441.9" y2="221.8" stroke="#b2dcb6" stroke-width="1" />
<line x1="421.0" y1="697.0" x2="442.0" y2="678.8" stroke="#b2dcb6" stroke-width="1" />
<line x1="26.1" y1="184.8" x2="117.0" y2="210.9" stroke="#1c1cff" stroke-width="2" />
<line x1="117.0" y1="210.9" x2="355.9" y2="279.4" stroke="#2e40ff" stroke-width="2" />
<line x1="26.1" y1="184.8" x2="25.9" y2="691.3" stroke="#1c1cff" stroke-width="2" />
<line x1="25.9" y1="691.3" x2="355.9" y2="786.3" stroke="#1c1cff" stroke-width="2" />
<line x1="355.9" y1="786.3" x2="546.8" y2="621.7" stroke="#1c1cff" stroke-width="2" />
<line x1="355.9" y1="279.4" x2="355.9" y2="679.5" stroke="#2e40ff" stroke-width="2.2" />
<line x1="355.9" y1="679.5" x2="355.9" y2="786.3" stroke="#1c1cff" stroke-width="2" />
<line x1="355.9" y1="279.4" x2="451.5" y2="197.0" stroke="#2e40ff" stroke-width="2" />
<line x1="451.5" y1="197.0" x2="546.8" y2="114.8" stroke="#1c1cff" stroke-width="2" />
<line x1="46.4" y1="486.1" x2="132.3" y2="412.8" stroke="#daa520" stroke-width="1.6" />
<line x1="46.4" y1="486.1" x2="351.5" y2="573.3" stroke="#daa520" stroke-width="1.8" />
<line x1="46.4" y1="384.3" x2="132.3" y2="310.4" stroke="#daa520" stroke-width="2" />
<line x1="351.0" y1="471.4" x2="436.0" y2="399.2" stroke="#daa520" stroke-width="2.2" />
<line x1="351.5" y1="573.3" x2="436.5" y2="501.0" stroke="#daa520" stroke-width="2.2" />
<line x1="46.4" y1="384.3" x2="46.4" y2="486.1" stroke="#daa520" stroke-width="2.6" />
<line x1="351.0" y1="471.4" x2="351.5" y2="573.3" stroke="#daa520" stroke-width="2.4" />
<line x1="46.4" y1="384.3" x2="351.0" y2="471.4" stroke="#daa520" stroke-width="2.8" />
</g>
<polygon points="241.0,361.9 262.3,343.3 289.3,324.5 316.6,305.9 290.9,326.5 265.1,347.0" fill="#dde8dc"/>
<polygon points="128.8,130.2 122.6,139.6 111.2,144.8 118.6,135.0" fill="#22cdb0"/>
<polygon points="122.6,139.6 111.2,144.8 117,141.0" fill="#128f80"/>
<polygon points="135.8,147.4 141.4,143.8 142.6,150.4" fill="#a9c493"/>
<line x1="117" y1="101.6" x2="453" y2="196.2" stroke="#a32bb8" stroke-width="2"/>
<line x1="117" y1="102.6" x2="453" y2="197.2" stroke="#f4eef6" stroke-width="1.2" stroke-dasharray="1.8 2.8"/>
<g id="legend">
<rect x="570.5" y="115.5" width="140" height="340" fill="#f4f4f4" stroke="#000" stroke-width="1"/>
<path d="M570.5 140.5H710.5M570.5 166.5H710.5M570.5 362.5H710.5" stroke="#000" stroke-width="1" fill="none"/>
<defs><linearGradient id="cb" x1="0" y1="0" x2="0" y2="1">
<stop offset="0" stop-color="#ffffff"/><stop offset="0.1" stop-color="#fff010"/><stop offset="0.2" stop-color="#ffbe32"/>
<stop offset="0.3" stop-color="#ff8c6e"/><stop offset="0.4" stop-color="#ff5aaa"/><stop offset="0.5" stop-color="#c32dd7"/>
<stop offset="0.6" stop-color="#8208ff"/><stop offset="0.7" stop-color="#2800ff"/><stop offset="0.8" stop-color="#0000c8"/>
<stop offset="0.9" stop-color="#000060"/><stop offset="1" stop-color="#000000"/></linearGradient></defs>
<rect x="585" y="177" width="21" height="170" fill="url(#cb)"/>
<text x="585.5" y="132">EMagTotal</text>
<text x="585.5" y="158">Type: Linear</text>
<text x="617.5" y="183.5">0.453</text>
<text x="617.5" y="200.5">0.395</text>
<text x="617.5" y="217.5">0.337</text>
<text x="617.5" y="234.5">0.28</text>
<text x="617.5" y="251.5">0.222</text>
<text x="617.5" y="268.5">0.164</text>
<text x="617.5" y="285.5">0.106</text>
<text x="617.5" y="302.5">0.0482</text>
<text x="612.8" y="319.5">-0.00962</text>
<text x="612.8" y="336.5">-0.0675</text>
<text x="612.8" y="353.5">-0.125</text>
<text x="585.5" y="378.5">Max: 0.453</text>
<text x="585.5" y="395.5">Min: -0.125</text>
<text x="585.5" y="412.5">Units: V/m</text>
<text x="585.5" y="429.5">Mean: 0.164</text>
<text x="585.5" y="446.5">STD: 0.112</text>
</g>
</svg></body></html>
